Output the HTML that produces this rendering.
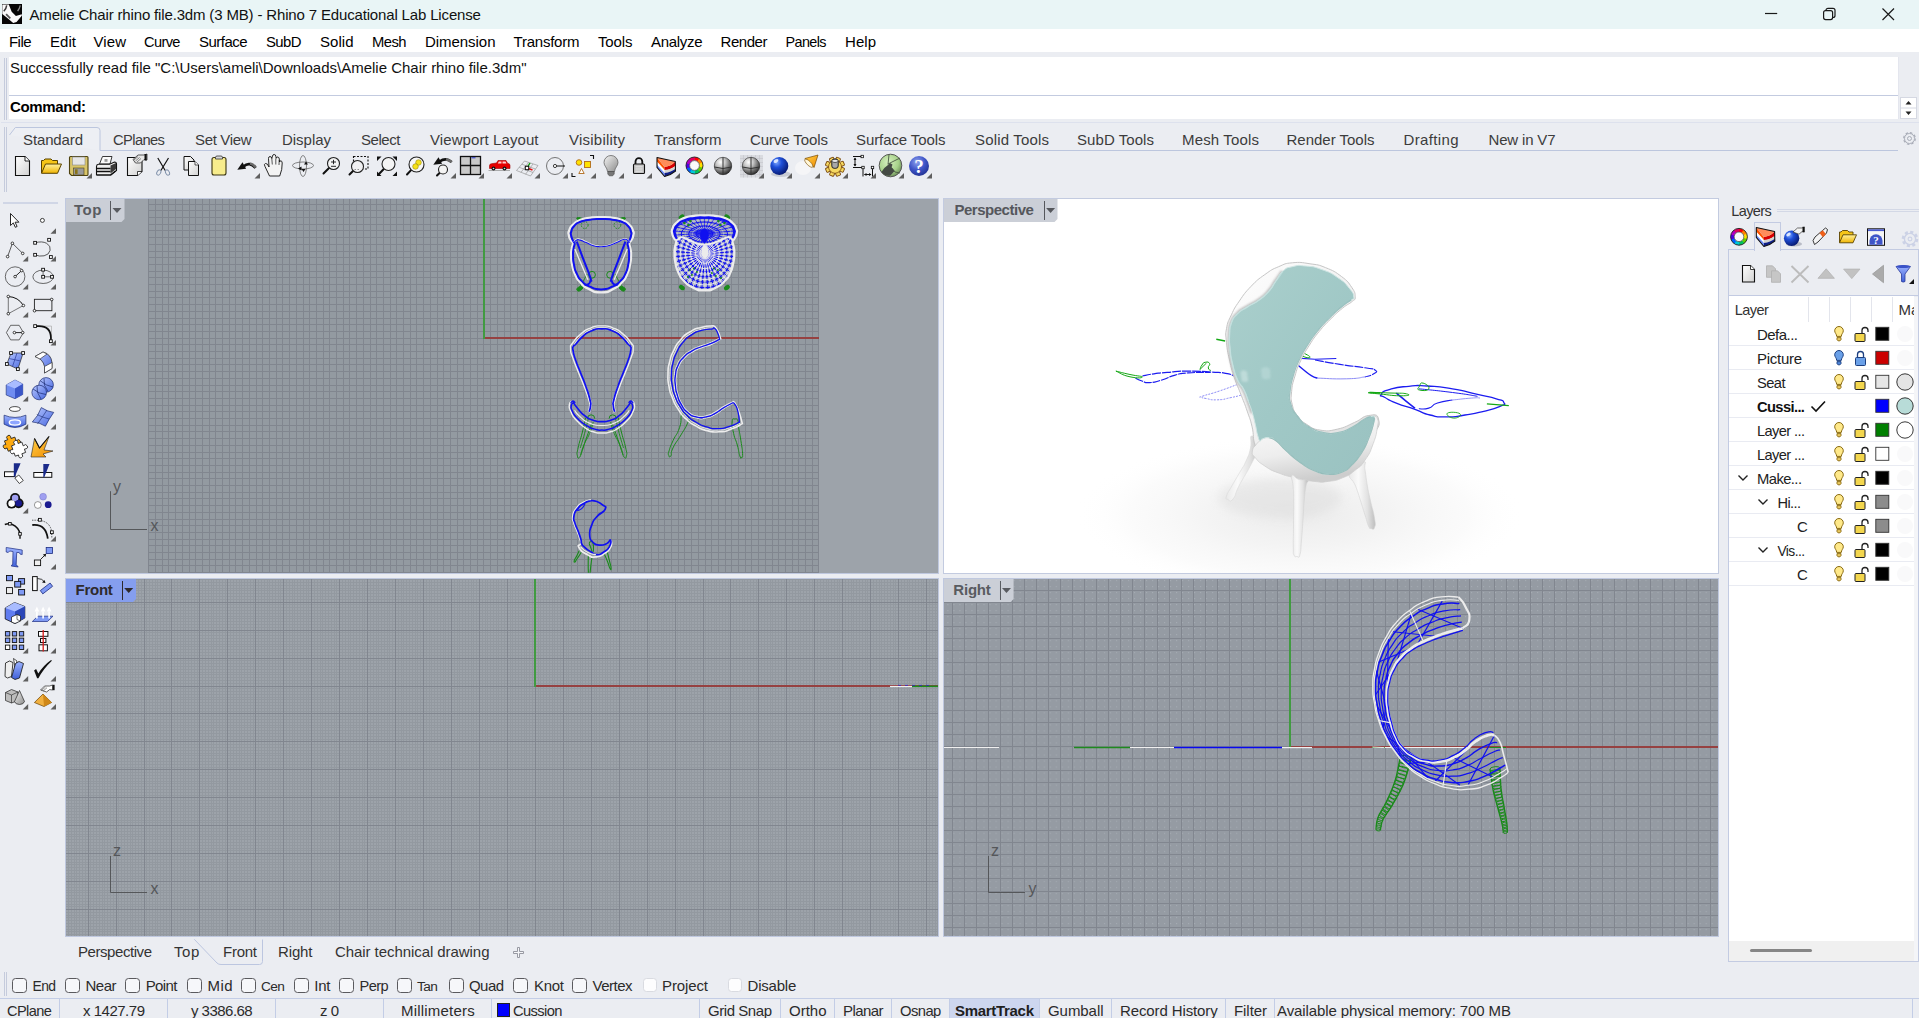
<!DOCTYPE html>
<html><head><meta charset="utf-8"><title>Rhino 7</title><style>html,body{margin:0;padding:0}body{width:1919px;height:1018px;overflow:hidden;background:#ebedf2;position:relative;font-family:"Liberation Sans",sans-serif}
.r{position:absolute;display:block}.t{position:absolute;white-space:nowrap;line-height:20px;display:block}</style></head><body>
<div class="r" style="left:0px;top:0px;width:1919px;height:29px;background:#e9f5f6;"></div>
<div class="r" style="left:0px;top:29px;width:1919px;height:23px;background:#ffffff;"></div>
<svg class="r" style="left:2px;top:4px" width="20" height="20" viewBox="0 0 20 20"><defs><filter id="lb" x="-10%" y="-10%" width="120%" height="120%"><feGaussianBlur stdDeviation="0.5"/></filter></defs><rect width="20" height="20" fill="#050505"/><g filter="url(#lb)"><path d="M0.300 0.400L6.800 0.400L9.700 7.800L13.900 11.900L19.800 10.200L19.800 11.700L14.500 18.100L11.200 19L6.800 15.200L0.300 9.900Z" fill="#fafafa"/><path d="M1.800 7.200Q4.200 5 4.700 1.300" stroke="#3a3a3a" stroke-width="1.500" fill="none"/><path d="M4.100 10.200L8.300 14.300" stroke="#555" stroke-width="1.800" fill="none"/><path d="M15.600 7.200Q17.500 4.500 18.300 1.300" stroke="#8a8a8a" stroke-width="1.300" fill="none"/></g></svg>
<span class="t" style="left:29.5px;top:5px;font-size:15px;letter-spacing:-0.156px;color:#111;">Amelie Chair rhino file.3dm (3 MB) - Rhino 7 Educational Lab License</span>
<svg class="r" style="left:1750px;top:0" width="169" height="29" viewBox="0 0 169 29"><g stroke="#1a1a1a" stroke-width="1.200" fill="none"><path d="M15 13.500H27.200"/><rect x="73.600" y="10.600" width="9" height="9" rx="2"/><path d="M76 10.600V10.300a2 2 0 0 1 2-2h5a2 2 0 0 1 2 2v5.200a2 2 0 0 1-2 2H82.600"/><path d="M132.5 8.5L144 20M144 8.5L132.5 20"/></g></svg>
<span class="t" style="left:9.0px;top:32px;font-size:15px;letter-spacing:-0.557px;color:#000;">File</span>
<span class="t" style="left:50.0px;top:32px;font-size:15px;letter-spacing:0.051px;color:#000;">Edit</span>
<span class="t" style="left:93.5px;top:32px;font-size:15px;letter-spacing:0.086px;color:#000;">View</span>
<span class="t" style="left:144.0px;top:32px;font-size:14.6px;letter-spacing:-0.611px;color:#000;">Curve</span>
<span class="t" style="left:199.0px;top:32px;font-size:15px;letter-spacing:-0.533px;color:#000;">Surface</span>
<span class="t" style="left:266.0px;top:32px;font-size:14.9px;letter-spacing:-0.591px;color:#000;">SubD</span>
<span class="t" style="left:320.0px;top:32px;font-size:15px;letter-spacing:0.036px;color:#000;">Solid</span>
<span class="t" style="left:372.0px;top:32px;font-size:14.8px;letter-spacing:-0.563px;color:#000;">Mesh</span>
<span class="t" style="left:425.0px;top:32px;font-size:15px;letter-spacing:-0.046px;color:#000;">Dimension</span>
<span class="t" style="left:513.5px;top:32px;font-size:15px;letter-spacing:-0.225px;color:#000;">Transform</span>
<span class="t" style="left:598.0px;top:32px;font-size:15px;letter-spacing:-0.130px;color:#000;">Tools</span>
<span class="t" style="left:651.0px;top:32px;font-size:15px;letter-spacing:-0.311px;color:#000;">Analyze</span>
<span class="t" style="left:720.5px;top:32px;font-size:15px;letter-spacing:-0.441px;color:#000;">Render</span>
<span class="t" style="left:785.5px;top:32px;font-size:14.4px;letter-spacing:-0.605px;color:#000;">Panels</span>
<span class="t" style="left:845.0px;top:32px;font-size:15px;letter-spacing:0.049px;color:#000;">Help</span>
<div class="r" style="left:9px;top:57px;width:1889px;height:38px;background:#fff;"></div>
<div class="r" style="left:9px;top:95px;width:1889px;height:1px;background:#c3cbe0;"></div>
<div class="r" style="left:9px;top:96px;width:1889px;height:23px;background:#fff;"></div>
<div class="r" style="left:1898px;top:57px;width:1px;height:62px;background:#e4e6ee;"></div>
<div class="r" style="left:4px;top:58px;width:1px;height:62px;background:#c5cbdc;"></div>
<div class="r" style="left:6px;top:58px;width:1px;height:62px;background:#c5cbdc;"></div>
<span class="t" style="left:10.0px;top:58px;font-size:15px;letter-spacing:-0.003px;color:#111;">Successfully read file &quot;C:\Users\ameli\Downloads\Amelie Chair rhino file.3dm&quot;</span>
<span class="t" style="left:10.0px;top:97px;font-size:15px;letter-spacing:-0.334px;color:#000;font-weight:bold;">Command:</span>
<div class="r" style="left:1900px;top:97px;width:17px;height:22px;background:#fff;border:1px solid #d5d8e2;box-sizing:border-box;"></div>
<svg class="r" style="left:1900px;top:97px" width="17" height="22" viewBox="0 0 17 22"><path d="M5.5 7.5L8.5 4L11.5 7.5Z M5.5 14.5L8.5 18L11.5 14.5Z" fill="#222"/><path d="M1 11H16" stroke="#d5d8e2"/></svg>
<div class="r" style="left:1px;top:122px;width:1918px;height:1px;background:#dde1ed;"></div>
<div class="r" style="left:100px;top:150px;width:1798px;height:1px;background:#bcc6de;"></div>
<svg class="r" style="left:9px;top:126px" width="94" height="26" viewBox="0 0 94 26"><path d="M0.500 9L6.300 1.500H88Q91 1.500 91 4.500V24.500" fill="#edeff4" stroke="#bcc6de"/></svg>
<span class="t" style="left:23.0px;top:130px;font-size:15px;letter-spacing:-0.127px;color:#3c3c3c;">Standard</span>
<span class="t" style="left:113.0px;top:130px;font-size:14.7px;letter-spacing:-0.594px;color:#3c3c3c;">CPlanes</span>
<span class="t" style="left:195.0px;top:130px;font-size:15px;letter-spacing:-0.347px;color:#3c3c3c;">Set View</span>
<span class="t" style="left:282.0px;top:130px;font-size:15px;letter-spacing:-0.031px;color:#3c3c3c;">Display</span>
<span class="t" style="left:361.0px;top:130px;font-size:15px;letter-spacing:-0.438px;color:#3c3c3c;">Select</span>
<span class="t" style="left:430.0px;top:130px;font-size:15px;letter-spacing:0.085px;color:#3c3c3c;">Viewport Layout</span>
<span class="t" style="left:569.0px;top:130px;font-size:15px;letter-spacing:0.233px;color:#3c3c3c;">Visibility</span>
<span class="t" style="left:654.0px;top:130px;font-size:15px;letter-spacing:-0.037px;color:#3c3c3c;">Transform</span>
<span class="t" style="left:750.0px;top:130px;font-size:15px;letter-spacing:-0.093px;color:#3c3c3c;">Curve Tools</span>
<span class="t" style="left:856.0px;top:130px;font-size:15px;letter-spacing:-0.093px;color:#3c3c3c;">Surface Tools</span>
<span class="t" style="left:975.0px;top:130px;font-size:15px;letter-spacing:0.173px;color:#3c3c3c;">Solid Tools</span>
<span class="t" style="left:1077.0px;top:130px;font-size:15px;letter-spacing:0.062px;color:#3c3c3c;">SubD Tools</span>
<span class="t" style="left:1182.0px;top:130px;font-size:15px;letter-spacing:0.155px;color:#3c3c3c;">Mesh Tools</span>
<span class="t" style="left:1286.5px;top:130px;font-size:15px;letter-spacing:-0.011px;color:#3c3c3c;">Render Tools</span>
<span class="t" style="left:1403.5px;top:130px;font-size:15px;letter-spacing:0.353px;color:#3c3c3c;">Drafting</span>
<span class="t" style="left:1488.5px;top:130px;font-size:15px;letter-spacing:-0.171px;color:#3c3c3c;">New in V7</span>
<svg class="r" style="left:1901px;top:130px" width="17" height="17" viewBox="0 0 17 17"><circle cx="8.5" cy="8.5" r="5.8" fill="none" stroke="#a9adb8" stroke-width="1.2" stroke-dasharray="2.6 1.9"/><circle cx="8.5" cy="8.5" r="5" fill="none" stroke="#a9adb8" stroke-width="1"/><circle cx="8.5" cy="8.5" r="2" fill="none" stroke="#a9adb8" stroke-width="1"/></svg>
<div class="r" style="left:4px;top:127px;width:1px;height:65px;background:#c5cbdc;"></div>
<div class="r" style="left:6px;top:127px;width:1px;height:65px;background:#c5cbdc;"></div>
<div class="r" style="left:3px;top:201.5px;width:55px;height:1.0px;background:#d0d6e6;"></div>
<div class="r" style="left:3px;top:203.3px;width:55px;height:1.0px;background:#d0d6e6;"></div>
<div class="r" style="left:65px;top:198px;width:874px;height:376px;background:#bfc8df;"></div>
<div class="r" style="left:943px;top:198px;width:776px;height:376px;background:#c3cbe0;"></div>
<div class="r" style="left:65px;top:578px;width:874px;height:359px;background:#bfc8df;"></div>
<div class="r" style="left:943px;top:578px;width:776px;height:359px;background:#bfc8df;"></div>
<svg class="r" style="left:66px;top:199px" width="872" height="374" viewBox="0 0 872 374" shape-rendering="auto"><rect width="872" height="374" fill="#9da3aa"/><rect x="83" y="0" width="670" height="374" fill="#939aa1"/><path d="M82.5 0V374M89.5 0V374M96.5 0V374M102.5 0V374M109.5 0V374M116.5 0V374M123.5 0V374M129.5 0V374M136.5 0V374M143.5 0V374M149.5 0V374M156.5 0V374M163.5 0V374M169.5 0V374M176.5 0V374M183.5 0V374M190.5 0V374M196.5 0V374M203.5 0V374M210.5 0V374M216.5 0V374M223.5 0V374M230.5 0V374M237.5 0V374M243.5 0V374M250.5 0V374M257.5 0V374M263.5 0V374M270.5 0V374M277.5 0V374M283.5 0V374M290.5 0V374M297.5 0V374M304.5 0V374M310.5 0V374M317.5 0V374M324.5 0V374M330.5 0V374M337.5 0V374M344.5 0V374M350.5 0V374M357.5 0V374M364.5 0V374M371.5 0V374M377.5 0V374M384.5 0V374M391.5 0V374M397.5 0V374M404.5 0V374M411.5 0V374M417.5 0V374M424.5 0V374M431.5 0V374M438.5 0V374M444.5 0V374M451.5 0V374M458.5 0V374M464.5 0V374M471.5 0V374M478.5 0V374M484.5 0V374M491.5 0V374M498.5 0V374M505.5 0V374M511.5 0V374M518.5 0V374M525.5 0V374M531.5 0V374M538.5 0V374M545.5 0V374M551.5 0V374M558.5 0V374M565.5 0V374M572.5 0V374M578.5 0V374M585.5 0V374M592.5 0V374M598.5 0V374M605.5 0V374M612.5 0V374M618.5 0V374M625.5 0V374M632.5 0V374M639.5 0V374M645.5 0V374M652.5 0V374M659.5 0V374M665.5 0V374M672.5 0V374M679.5 0V374M685.5 0V374M692.5 0V374M699.5 0V374M706.5 0V374M712.5 0V374M719.5 0V374M726.5 0V374M732.5 0V374M739.5 0V374M746.5 0V374M752.5 0V374M83 5.5H753M83 11.5H753M83 18.5H753M83 25.5H753M83 31.5H753M83 38.5H753M83 45.5H753M83 52.5H753M83 58.5H753M83 65.5H753M83 72.5H753M83 78.5H753M83 85.5H753M83 92.5H753M83 98.5H753M83 105.5H753M83 112.5H753M83 119.5H753M83 125.5H753M83 132.5H753M83 139.5H753M83 145.5H753M83 152.5H753M83 159.5H753M83 165.5H753M83 172.5H753M83 179.5H753M83 186.5H753M83 192.5H753M83 199.5H753M83 206.5H753M83 212.5H753M83 219.5H753M83 226.5H753M83 232.5H753M83 239.5H753M83 246.5H753M83 253.5H753M83 259.5H753M83 266.5H753M83 273.5H753M83 279.5H753M83 286.5H753M83 293.5H753M83 299.5H753M83 306.5H753M83 313.5H753M83 320.5H753M83 326.5H753M83 333.5H753M83 340.5H753M83 346.5H753M83 353.5H753M83 360.5H753M83 366.5H753M83 373.5H753" stroke="#81868f" stroke-width="1" fill="none"/><rect x="417" y="0" width="2" height="140" fill="#419b41"/><rect x="419" y="138" width="334" height="2" fill="#964141"/><g transform="translate(-66,-199)"><path d="M110.5 491.2V529.5H147" fill="none" stroke="#55575a" stroke-width="1"/><text x="113.0" y="491.5" font-size="16" fill="#55575a" font-family="Liberation Sans, sans-serif">y</text><text x="150.4" y="530.5" font-size="16" fill="#55575a" font-family="Liberation Sans, sans-serif">x</text><path d="M577.3 217.6C578.5 217.2 581.9 218.0 582.4 218.8C582.9 219.6 580.4 220.3 578.7 219.9C577.0 219.5 576.0 218.0 577.3 217.6Z" fill="#1a8a1a" stroke="#1a8a1a" stroke-width="1" /><circle cx="584.7" cy="225.1" r="3.4" fill="none" stroke="#1a8a1a" stroke-width="0.9" stroke-dasharray="1.6 1.2"/><circle cx="592.0" cy="274.8" r="3.4" fill="none" stroke="#1a8a1a" stroke-width="1"/><path d="M587.1 274.1C585.5 276.9 585.5 277.4 582.4 282.5C579.3 287.6 579.3 287.2 577.7 289.5" fill="none" stroke="#1a8a1a" stroke-width="1" /><path d="M577.3 288.1C578.5 286.7 582.3 286.0 582.9 287.0C583.5 288.0 581.0 290.7 579.1 291.1C577.3 291.5 576.0 289.5 577.3 288.1Z" fill="#1a8a1a" stroke="#1a8a1a" stroke-width="1" /><path d="M624.9 217.6C623.6 217.2 620.2 218.0 619.8 218.8C619.3 219.6 621.8 220.3 623.5 219.9C625.2 219.5 626.1 218.0 624.9 217.6Z" fill="#1a8a1a" stroke="#1a8a1a" stroke-width="1" /><circle cx="617.4" cy="225.1" r="3.4" fill="none" stroke="#1a8a1a" stroke-width="0.9" stroke-dasharray="1.6 1.2"/><circle cx="610.1" cy="274.8" r="3.4" fill="none" stroke="#1a8a1a" stroke-width="1"/><path d="M615.1 274.1C616.6 276.9 616.6 277.4 619.8 282.5C622.9 287.6 622.9 287.2 624.4 289.5" fill="none" stroke="#1a8a1a" stroke-width="1" /><path d="M624.9 288.1C623.6 286.7 619.9 286.0 619.3 287.0C618.7 288.0 621.2 290.7 623.0 291.1C624.9 291.5 626.1 289.5 624.9 288.1Z" fill="#1a8a1a" stroke="#1a8a1a" stroke-width="1" /><path d="M601.1 217.1C594.2 217.1 597.7 216.7 590.8 217.6C584.0 218.5 586.5 217.6 580.5 219.9C574.6 222.3 576.8 221.2 573.1 224.6C569.3 228.0 570.7 226.6 569.3 230.2C567.9 233.8 568.3 231.9 568.9 235.3C569.4 238.8 569.7 237.9 571.0 240.5C572.4 243.1 572.7 240.3 572.9 243.1C573.1 245.9 572.2 244.8 571.7 248.9C571.1 253.0 571.0 250.1 571.2 255.4C571.4 260.7 570.7 258.2 572.1 264.8C573.5 271.3 572.6 269.1 575.4 275.0C578.2 280.9 576.0 277.8 580.5 282.5C585.1 287.2 582.1 285.8 588.9 289.0C595.8 292.3 593.0 292.3 601.1 292.3C609.2 292.3 606.4 292.3 613.2 289.0C620.1 285.8 617.1 287.2 621.6 282.5C626.1 277.8 624.0 280.9 626.8 275.0C629.6 269.1 628.6 271.3 630.0 264.8C631.4 258.2 630.8 260.7 631.0 255.4C631.1 250.1 631.1 253.0 630.5 248.9C629.9 244.8 629.1 245.9 629.3 243.1C629.5 240.3 629.8 243.1 631.1 240.5C632.5 237.9 632.7 238.8 633.3 235.3C633.9 231.9 634.2 233.8 632.8 230.2C631.4 226.6 632.8 228.0 629.1 224.6C625.4 221.2 627.5 222.3 621.6 219.9C615.7 217.6 618.2 218.5 611.4 217.6C604.5 216.7 607.9 217.1 601.1 217.1Z" fill="none" stroke="#ececec" stroke-width="2.3" /><path d="M601.1 219.0C593.6 219.0 596.7 218.7 589.9 219.7C583.0 220.6 585.8 219.7 580.5 221.8C575.3 223.9 577.2 222.9 574.2 226.0C571.1 229.1 572.4 227.9 571.4 231.1C570.4 234.4 570.6 232.5 571.2 235.8C571.8 239.1 572.0 238.4 573.1 240.9C574.2 243.5 574.4 240.8 574.6 243.5C574.7 246.1 574.0 244.9 573.5 248.9C573.0 252.9 572.9 250.1 573.1 255.4C573.2 260.7 572.7 258.5 574.0 264.8C575.3 271.0 574.3 268.6 577.0 274.1C579.6 279.5 577.8 277.0 581.9 281.1C586.1 285.2 583.0 283.6 589.4 286.4C595.8 289.2 593.3 289.5 601.1 289.5C608.9 289.5 606.4 289.2 612.8 286.4C619.1 283.6 616.1 285.2 620.2 281.1C624.4 277.0 622.5 279.5 625.2 274.1C627.8 268.6 626.9 271.0 628.2 264.8C629.5 258.5 628.9 260.7 629.1 255.4C629.2 250.1 629.1 252.9 628.6 248.9C628.1 244.9 627.4 246.1 627.6 243.5C627.8 240.8 628.0 243.5 629.1 240.9C630.2 238.4 630.4 239.1 631.0 235.8C631.5 232.5 631.8 234.4 630.8 231.1C629.8 227.9 631.0 229.1 628.0 226.0C624.9 222.9 626.9 223.9 621.6 221.8C616.4 219.7 619.1 220.6 612.3 219.7C605.4 218.7 608.6 219.0 601.1 219.0Z" fill="none" stroke="#1010f0" stroke-width="2" /><path d="M574.0 242.3C574.8 241.5 574.3 240.7 576.3 239.7C578.4 238.8 576.8 238.8 580.1 239.5C583.3 240.3 581.9 240.1 586.1 241.9C590.3 243.7 588.3 243.5 592.7 245.0C597.0 246.4 595.2 245.9 599.2 246.3C603.3 246.6 600.8 246.7 604.8 246.1C608.9 245.5 607.0 245.9 611.4 244.4C615.7 242.9 613.8 243.3 617.9 241.6C621.9 239.9 620.4 239.8 623.5 239.2C626.6 238.6 625.2 238.7 627.2 239.7C629.2 240.8 628.8 241.5 629.6 242.3" fill="none" stroke="#ececec" stroke-width="1.6" /><path d="M574.0 242.9C574.8 242.1 574.3 241.3 576.3 240.3C578.4 239.4 576.8 239.4 580.1 240.1C583.3 240.9 581.9 240.7 586.1 242.5C590.3 244.3 588.3 244.2 592.7 245.6C597.0 246.9 595.2 246.3 599.2 246.6C603.3 246.8 600.8 247.0 604.8 246.4C608.9 245.8 607.0 246.2 611.4 244.7C615.7 243.2 613.8 243.6 617.9 241.9C621.9 240.2 620.4 240.1 623.5 239.5C626.6 238.9 625.2 239.0 627.2 240.0C629.2 241.1 628.8 241.8 629.6 242.6" fill="none" stroke="#1010f0" stroke-width="1.1" /><path d="M574.9 248.9C577.1 254.2 577.1 254.5 581.5 264.8C585.8 275.0 585.8 274.7 588.0 279.7" fill="none" stroke="#ececec" stroke-width="1.3" /><path d="M576.8 241.6C579.0 247.5 578.9 247.4 583.3 259.2C587.8 270.9 587.7 269.6 590.1 276.9C592.4 284.2 591.0 278.6 590.3 281.1C589.7 283.6 590.0 283.3 588.0 284.4C586.1 285.5 585.6 284.4 584.5 284.4" fill="none" stroke="#1010f0" stroke-width="2" /><path d="M627.2 248.9C625.0 254.2 625.0 254.5 620.7 264.8C616.3 275.0 616.3 274.7 614.2 279.7" fill="none" stroke="#ececec" stroke-width="1.3" /><path d="M625.4 241.6C623.2 247.5 623.2 247.4 618.8 259.2C614.4 270.9 614.4 269.6 612.1 276.9C609.8 284.2 611.1 278.6 611.8 281.1C612.5 283.6 612.2 283.3 614.2 284.4C616.1 285.5 616.5 284.4 617.7 284.4" fill="none" stroke="#1010f0" stroke-width="2" /><clipPath id="c2"><path d="M704.4 215.3C697.5 215.3 701.0 214.9 694.1 215.8C687.3 216.7 689.8 215.8 683.8 218.1C677.9 220.5 680.1 219.4 676.4 222.8C672.6 226.2 674.0 224.8 672.6 228.4C671.2 232.0 671.6 230.1 672.2 233.5C672.7 237.0 673.0 236.1 674.3 238.7C675.7 241.3 676.0 238.5 676.2 241.3C676.4 244.1 675.5 243.0 675.0 247.1C674.4 251.2 674.3 248.3 674.5 253.6C674.7 258.9 674.0 256.4 675.4 263.0C676.8 269.5 675.9 267.3 678.7 273.2C681.5 279.1 679.3 276.0 683.8 280.7C688.4 285.4 685.4 284.0 692.2 287.2C699.1 290.5 696.3 290.5 704.4 290.5C712.5 290.5 709.7 290.5 716.5 287.2C723.4 284.0 720.4 285.4 724.9 280.7C729.4 276.0 727.3 279.1 730.1 273.2C732.9 267.3 731.9 269.5 733.3 263.0C734.7 256.4 734.1 258.9 734.3 253.6C734.4 248.3 734.4 251.2 733.8 247.1C733.2 243.0 732.4 244.1 732.6 241.3C732.8 238.5 733.1 241.3 734.4 238.7C735.8 236.1 736.0 237.0 736.6 233.5C737.2 230.1 737.5 232.0 736.1 228.4C734.7 224.8 736.1 226.2 732.4 222.8C728.7 219.4 730.8 220.5 724.9 218.1C719.0 215.8 721.5 216.7 714.7 215.8C707.8 214.9 711.2 215.3 704.4 215.3Z"/></clipPath><ellipse cx="681.6" cy="217.0" rx="3.2" ry="2.2" fill="#1a8a1a" transform="rotate(-35 681.6 217.0)"/><ellipse cx="727.2" cy="217.0" rx="3.2" ry="2.2" fill="#1a8a1a" transform="rotate(35 727.2 217.0)"/><ellipse cx="681.9" cy="287.6" rx="3.2" ry="2.2" fill="#1a8a1a" transform="rotate(35 681.9 287.6)"/><ellipse cx="726.9" cy="287.6" rx="3.2" ry="2.2" fill="#1a8a1a" transform="rotate(-35 726.9 287.6)"/><g clip-path="url(#c2)"><path d="M704.4 215.3C697.5 215.3 701.0 214.9 694.1 215.8C687.3 216.7 689.8 215.8 683.8 218.1C677.9 220.5 680.1 219.4 676.4 222.8C672.6 226.2 674.0 224.8 672.6 228.4C671.2 232.0 671.6 230.1 672.2 233.5C672.7 237.0 673.0 236.1 674.3 238.7C675.7 241.3 676.0 238.5 676.2 241.3C676.4 244.1 675.5 243.0 675.0 247.1C674.4 251.2 674.3 248.3 674.5 253.6C674.7 258.9 674.0 256.4 675.4 263.0C676.8 269.5 675.9 267.3 678.7 273.2C681.5 279.1 679.3 276.0 683.8 280.7C688.4 285.4 685.4 284.0 692.2 287.2C699.1 290.5 696.3 290.5 704.4 290.5C712.5 290.5 709.7 290.5 716.5 287.2C723.4 284.0 720.4 285.4 724.9 280.7C729.4 276.0 727.3 279.1 730.1 273.2C732.9 267.3 731.9 269.5 733.3 263.0C734.7 256.4 734.1 258.9 734.3 253.6C734.4 248.3 734.4 251.2 733.8 247.1C733.2 243.0 732.4 244.1 732.6 241.3C732.8 238.5 733.1 241.3 734.4 238.7C735.8 236.1 736.0 237.0 736.6 233.5C737.2 230.1 737.5 232.0 736.1 228.4C734.7 224.8 736.1 226.2 732.4 222.8C728.7 219.4 730.8 220.5 724.9 218.1C719.0 215.8 721.5 216.7 714.7 215.8C707.8 214.9 711.2 215.3 704.4 215.3Z" fill="#b9bfd6" fill-opacity="0.55"/><path d="M704.4 233.1L744.2 235.8" stroke="#1010f0" stroke-width="0.9"/><path d="M704.4 233.1L742.4 241.1" stroke="#1010f0" stroke-width="0.9"/><path d="M704.4 233.1L739.0 246.1" stroke="#1010f0" stroke-width="0.9"/><path d="M704.4 233.1L734.1 250.5" stroke="#1010f0" stroke-width="0.9"/><path d="M704.4 233.1L727.9 254.1" stroke="#1010f0" stroke-width="0.9"/><path d="M704.4 233.1L720.7 256.8" stroke="#1010f0" stroke-width="0.9"/><path d="M704.4 233.1L712.7 258.5" stroke="#1010f0" stroke-width="0.9"/><path d="M704.4 233.1L704.4 259.1" stroke="#1010f0" stroke-width="0.9"/><path d="M704.4 233.1L696.1 258.5" stroke="#1010f0" stroke-width="0.9"/><path d="M704.4 233.1L688.1 256.8" stroke="#1010f0" stroke-width="0.9"/><path d="M704.4 233.1L680.9 254.1" stroke="#1010f0" stroke-width="0.9"/><path d="M704.4 233.1L674.7 250.5" stroke="#1010f0" stroke-width="0.9"/><path d="M704.4 233.1L669.7 246.1" stroke="#1010f0" stroke-width="0.9"/><path d="M704.4 233.1L666.3 241.1" stroke="#1010f0" stroke-width="0.9"/><path d="M704.4 233.1L664.6 235.8" stroke="#1010f0" stroke-width="0.9"/><path d="M704.4 233.1L664.6 230.4" stroke="#1010f0" stroke-width="0.9"/><path d="M704.4 233.1L666.3 225.0" stroke="#1010f0" stroke-width="0.9"/><path d="M704.4 233.1L669.7 220.1" stroke="#1010f0" stroke-width="0.9"/><path d="M704.4 233.1L674.7 215.7" stroke="#1010f0" stroke-width="0.9"/><path d="M704.4 233.1L680.9 212.0" stroke="#1010f0" stroke-width="0.9"/><path d="M704.4 233.1L688.1 209.3" stroke="#1010f0" stroke-width="0.9"/><path d="M704.4 233.1L696.1 207.6" stroke="#1010f0" stroke-width="0.9"/><path d="M704.4 233.1L704.4 207.1" stroke="#1010f0" stroke-width="0.9"/><path d="M704.4 233.1L712.7 207.6" stroke="#1010f0" stroke-width="0.9"/><path d="M704.4 233.1L720.7 209.3" stroke="#1010f0" stroke-width="0.9"/><path d="M704.4 233.1L727.9 212.0" stroke="#1010f0" stroke-width="0.9"/><path d="M704.4 233.1L734.1 215.7" stroke="#1010f0" stroke-width="0.9"/><path d="M704.4 233.1L739.0 220.1" stroke="#1010f0" stroke-width="0.9"/><path d="M704.4 233.1L742.4 225.0" stroke="#1010f0" stroke-width="0.9"/><path d="M704.4 233.1L744.2 230.4" stroke="#1010f0" stroke-width="0.9"/><ellipse cx="704.4" cy="234.1" rx="8.4" ry="4.4" fill="none" stroke="#1010f0" stroke-width="1"/><ellipse cx="704.4" cy="234.1" rx="15.8" ry="8.2" fill="none" stroke="#1010f0" stroke-width="1"/><ellipse cx="704.4" cy="234.1" rx="23.1" ry="12.1" fill="none" stroke="#1010f0" stroke-width="1"/><ellipse cx="704.4" cy="234.1" rx="30.5" ry="16.0" fill="none" stroke="#1010f0" stroke-width="1"/><ellipse cx="704.4" cy="234.1" rx="12.1" ry="6.3" fill="none" stroke="#ececec" stroke-width="0.5" opacity="0.7"/><ellipse cx="704.4" cy="234.1" rx="19.4" ry="10.2" fill="none" stroke="#ececec" stroke-width="0.5" opacity="0.7"/><ellipse cx="704.4" cy="234.1" rx="26.8" ry="14.0" fill="none" stroke="#ececec" stroke-width="0.5" opacity="0.7"/><clipPath id="c2s"><path d="M677.3 240.5C680.3 236.6 677.6 238.9 679.6 237.9C681.7 237.0 680.1 237.0 683.4 237.7C686.6 238.5 685.2 238.3 689.4 240.1C693.6 241.9 691.6 241.7 696.0 243.2C700.3 244.6 698.5 244.1 702.5 244.5C706.6 244.8 704.1 244.9 708.1 244.3C712.2 243.7 710.3 244.1 714.7 242.6C719.0 241.1 717.1 241.5 721.2 239.8C725.2 238.1 723.7 238.0 726.8 237.4C729.9 236.8 728.5 236.9 730.5 237.9C732.5 239.0 730.4 236.6 732.9 240.5C735.4 244.5 736.6 240.5 738.0 249.9C739.4 259.2 740.2 256.7 737.1 268.6C734.0 280.4 739.6 277.3 728.7 285.4C717.8 293.5 720.6 292.8 704.4 292.8C688.2 292.8 691.0 293.5 680.1 285.4C669.2 277.3 674.8 280.4 671.7 268.6C668.6 256.7 668.9 259.2 670.8 249.9C672.6 240.5 674.3 244.5 677.3 240.5Z"/></clipPath><g clip-path="url(#c2s)"><path d="M677.3 240.5C680.3 236.6 677.6 238.9 679.6 237.9C681.7 237.0 680.1 237.0 683.4 237.7C686.6 238.5 685.2 238.3 689.4 240.1C693.6 241.9 691.6 241.7 696.0 243.2C700.3 244.6 698.5 244.1 702.5 244.5C706.6 244.8 704.1 244.9 708.1 244.3C712.2 243.7 710.3 244.1 714.7 242.6C719.0 241.1 717.1 241.5 721.2 239.8C725.2 238.1 723.7 238.0 726.8 237.4C729.9 236.8 728.5 236.9 730.5 237.9C732.5 239.0 730.4 236.6 732.9 240.5C735.4 244.5 736.6 240.5 738.0 249.9C739.4 259.2 740.2 256.7 737.1 268.6C734.0 280.4 739.6 277.3 728.7 285.4C717.8 293.5 720.6 292.8 704.4 292.8C688.2 292.8 691.0 293.5 680.1 285.4C669.2 277.3 674.8 280.4 671.7 268.6C668.6 256.7 668.9 259.2 670.8 249.9C672.6 240.5 674.3 244.5 677.3 240.5Z" fill="#a9afc4"/><path d="M704.9 254.1L749.7 258.0" stroke="#1010f0" stroke-width="1"/><path d="M704.9 254.1L748.3 265.7" stroke="#1010f0" stroke-width="1"/><path d="M704.9 254.1L745.7 273.1" stroke="#1010f0" stroke-width="1"/><path d="M704.9 254.1L741.7 279.9" stroke="#1010f0" stroke-width="1"/><path d="M704.9 254.1L736.7 285.9" stroke="#1010f0" stroke-width="1"/><path d="M704.9 254.1L730.7 290.9" stroke="#1010f0" stroke-width="1"/><path d="M704.9 254.1L723.9 294.9" stroke="#1010f0" stroke-width="1"/><path d="M704.9 254.1L716.5 297.6" stroke="#1010f0" stroke-width="1"/><path d="M704.9 254.1L708.8 298.9" stroke="#1010f0" stroke-width="1"/><path d="M704.9 254.1L701.0 298.9" stroke="#1010f0" stroke-width="1"/><path d="M704.9 254.1L693.2 297.6" stroke="#1010f0" stroke-width="1"/><path d="M704.9 254.1L685.9 294.9" stroke="#1010f0" stroke-width="1"/><path d="M704.9 254.1L679.1 290.9" stroke="#1010f0" stroke-width="1"/><path d="M704.9 254.1L673.1 285.9" stroke="#1010f0" stroke-width="1"/><path d="M704.9 254.1L668.0 279.9" stroke="#1010f0" stroke-width="1"/><path d="M704.9 254.1L664.1 273.1" stroke="#1010f0" stroke-width="1"/><path d="M704.9 254.1L661.4 265.7" stroke="#1010f0" stroke-width="1"/><path d="M704.9 254.1L660.1 258.0" stroke="#1010f0" stroke-width="1"/><path d="M704.9 254.1L660.1 250.2" stroke="#1010f0" stroke-width="1"/><path d="M704.9 254.1L661.4 242.4" stroke="#1010f0" stroke-width="1"/><path d="M704.9 254.1L664.1 235.1" stroke="#1010f0" stroke-width="1"/><path d="M704.9 254.1L668.0 228.3" stroke="#1010f0" stroke-width="1"/><path d="M704.9 254.1L673.1 222.3" stroke="#1010f0" stroke-width="1"/><path d="M704.9 254.1L679.1 217.2" stroke="#1010f0" stroke-width="1"/><path d="M704.9 254.1L685.9 213.3" stroke="#1010f0" stroke-width="1"/><path d="M704.9 254.1L693.2 210.6" stroke="#1010f0" stroke-width="1"/><path d="M704.9 254.1L701.0 209.3" stroke="#1010f0" stroke-width="1"/><path d="M704.9 254.1L708.8 209.3" stroke="#1010f0" stroke-width="1"/><path d="M704.9 254.1L716.5 210.6" stroke="#1010f0" stroke-width="1"/><path d="M704.9 254.1L723.9 213.3" stroke="#1010f0" stroke-width="1"/><path d="M704.9 254.1L730.7 217.2" stroke="#1010f0" stroke-width="1"/><path d="M704.9 254.1L736.7 222.3" stroke="#1010f0" stroke-width="1"/><path d="M704.9 254.1L741.7 228.3" stroke="#1010f0" stroke-width="1"/><path d="M704.9 254.1L745.7 235.1" stroke="#1010f0" stroke-width="1"/><path d="M704.9 254.1L748.3 242.4" stroke="#1010f0" stroke-width="1"/><path d="M704.9 254.1L749.7 250.2" stroke="#1010f0" stroke-width="1"/><ellipse cx="704.9" cy="253.1" rx="7.0" ry="7.6" fill="none" stroke="#1010f0" stroke-width="1.1"/><ellipse cx="704.9" cy="253.1" rx="12.0" ry="13.0" fill="none" stroke="#1010f0" stroke-width="1.1"/><ellipse cx="704.9" cy="253.1" rx="17.0" ry="18.4" fill="none" stroke="#1010f0" stroke-width="1.1"/><ellipse cx="704.9" cy="253.1" rx="22.0" ry="23.8" fill="none" stroke="#1010f0" stroke-width="1.1"/><ellipse cx="704.9" cy="253.1" rx="27.0" ry="29.2" fill="none" stroke="#1010f0" stroke-width="1.1"/><ellipse cx="704.9" cy="253.1" rx="32.0" ry="34.6" fill="none" stroke="#1010f0" stroke-width="1.1"/><path d="M704.9 254.1L749.9 254.1" stroke="#ececec" stroke-width="0.8"/><path d="M704.9 254.1L749.2 261.9" stroke="#ececec" stroke-width="0.8"/><path d="M704.9 254.1L747.2 269.5" stroke="#ececec" stroke-width="0.8"/><path d="M704.9 254.1L743.9 276.6" stroke="#ececec" stroke-width="0.8"/><path d="M704.9 254.1L739.4 283.0" stroke="#ececec" stroke-width="0.8"/><path d="M704.9 254.1L733.8 288.6" stroke="#ececec" stroke-width="0.8"/><path d="M704.9 254.1L727.4 293.1" stroke="#ececec" stroke-width="0.8"/><path d="M704.9 254.1L720.3 296.4" stroke="#ececec" stroke-width="0.8"/><path d="M704.9 254.1L712.7 298.4" stroke="#ececec" stroke-width="0.8"/><path d="M704.9 254.1L704.9 299.1" stroke="#ececec" stroke-width="0.8"/><path d="M704.9 254.1L697.1 298.4" stroke="#ececec" stroke-width="0.8"/><path d="M704.9 254.1L689.5 296.4" stroke="#ececec" stroke-width="0.8"/><path d="M704.9 254.1L682.4 293.1" stroke="#ececec" stroke-width="0.8"/><path d="M704.9 254.1L676.0 288.6" stroke="#ececec" stroke-width="0.8"/><path d="M704.9 254.1L670.4 283.0" stroke="#ececec" stroke-width="0.8"/><path d="M704.9 254.1L665.9 276.6" stroke="#ececec" stroke-width="0.8"/><path d="M704.9 254.1L662.6 269.5" stroke="#ececec" stroke-width="0.8"/><path d="M704.9 254.1L660.6 261.9" stroke="#ececec" stroke-width="0.8"/><path d="M704.9 254.1L659.9 254.1" stroke="#ececec" stroke-width="0.8"/><path d="M704.9 254.1L660.6 246.3" stroke="#ececec" stroke-width="0.8"/><path d="M704.9 254.1L662.6 238.7" stroke="#ececec" stroke-width="0.8"/><path d="M704.9 254.1L665.9 231.6" stroke="#ececec" stroke-width="0.8"/><path d="M704.9 254.1L670.4 225.2" stroke="#ececec" stroke-width="0.8"/><path d="M704.9 254.1L676.0 219.6" stroke="#ececec" stroke-width="0.8"/><path d="M704.9 254.1L682.4 215.1" stroke="#ececec" stroke-width="0.8"/><path d="M704.9 254.1L689.5 211.8" stroke="#ececec" stroke-width="0.8"/><path d="M704.9 254.1L697.1 209.8" stroke="#ececec" stroke-width="0.8"/><path d="M704.9 254.1L704.9 209.1" stroke="#ececec" stroke-width="0.8"/><path d="M704.9 254.1L712.7 209.8" stroke="#ececec" stroke-width="0.8"/><path d="M704.9 254.1L720.3 211.8" stroke="#ececec" stroke-width="0.8"/><path d="M704.9 254.1L727.4 215.1" stroke="#ececec" stroke-width="0.8"/><path d="M704.9 254.1L733.8 219.6" stroke="#ececec" stroke-width="0.8"/><path d="M704.9 254.1L739.4 225.2" stroke="#ececec" stroke-width="0.8"/><path d="M704.9 254.1L743.9 231.6" stroke="#ececec" stroke-width="0.8"/><path d="M704.9 254.1L747.2 238.7" stroke="#ececec" stroke-width="0.8"/><path d="M704.9 254.1L749.2 246.3" stroke="#ececec" stroke-width="0.8"/><ellipse cx="704.9" cy="253.1" rx="5.0" ry="5.4" fill="none" stroke="#ececec" stroke-width="0.9"/><ellipse cx="704.9" cy="253.1" rx="9.5" ry="10.3" fill="none" stroke="#ececec" stroke-width="0.9"/><ellipse cx="704.9" cy="253.1" rx="14.5" ry="15.7" fill="none" stroke="#ececec" stroke-width="0.9"/><ellipse cx="704.9" cy="253.1" rx="19.5" ry="21.1" fill="none" stroke="#ececec" stroke-width="0.9"/><ellipse cx="704.9" cy="253.1" rx="24.5" ry="26.5" fill="none" stroke="#ececec" stroke-width="0.9"/><ellipse cx="704.9" cy="253.1" rx="29.5" ry="31.9" fill="none" stroke="#ececec" stroke-width="0.9"/><ellipse cx="704.9" cy="253.1" rx="34.0" ry="36.7" fill="none" stroke="#ececec" stroke-width="0.9"/><ellipse cx="704.9" cy="251.6" rx="3.4" ry="6.5" fill="#ececec"/><circle cx="693.9" cy="268.6" r="1" fill="#1a8a1a"/><circle cx="696.9" cy="272.1" r="1" fill="#1a8a1a"/><circle cx="691.9" cy="275.1" r="1" fill="#1a8a1a"/><circle cx="687.9" cy="277.1" r="1" fill="#1a8a1a"/><circle cx="713.9" cy="268.6" r="1" fill="#1a8a1a"/><circle cx="711.9" cy="273.1" r="1" fill="#1a8a1a"/><circle cx="715.9" cy="276.1" r="1" fill="#1a8a1a"/><circle cx="720.9" cy="278.1" r="1" fill="#1a8a1a"/><circle cx="689.9" cy="270.1" r="1" fill="#1a8a1a"/><circle cx="717.9" cy="270.1" r="1" fill="#1a8a1a"/></g><ellipse cx="704.4" cy="235.6" rx="4.2" ry="7" fill="#1010f0"/><circle cx="684.4" cy="223.1" r="1.3" fill="#1a8a1a"/><circle cx="688.4" cy="225.1" r="1.3" fill="#1a8a1a"/><circle cx="690.4" cy="221.1" r="1.3" fill="#1a8a1a"/><circle cx="724.4" cy="223.1" r="1.3" fill="#1a8a1a"/><circle cx="720.4" cy="225.1" r="1.3" fill="#1a8a1a"/><circle cx="718.4" cy="221.1" r="1.3" fill="#1a8a1a"/><path d="M677.9 241.7C677.4 240.8 677.5 241.7 676.4 239.1C675.3 236.6 675.1 237.3 674.5 234.0C673.9 230.7 673.7 232.6 674.7 229.3C675.7 226.1 674.4 227.3 677.5 224.2C680.5 221.1 678.6 222.1 683.8 220.0C689.1 217.9 686.3 218.8 693.2 217.9C700.0 216.9 696.9 217.2 704.4 217.2C711.9 217.2 708.7 216.9 715.6 217.9C722.4 218.8 719.7 217.9 724.9 220.0C730.2 222.1 728.2 221.1 731.3 224.2C734.3 227.3 733.1 226.1 734.1 229.3C735.1 232.6 734.8 230.7 734.3 234.0C733.7 237.3 733.5 236.6 732.4 239.1C731.3 241.7 731.4 240.8 730.9 241.7" fill="none" stroke="#1010f0" stroke-width="3.2" /><path d="M677.3 240.5C678.1 239.7 677.6 238.9 679.6 237.9C681.7 237.0 680.1 237.0 683.4 237.7C686.6 238.5 685.2 238.3 689.4 240.1C693.6 241.9 691.6 241.7 696.0 243.2C700.3 244.6 698.5 244.1 702.5 244.5C706.6 244.8 704.1 244.9 708.1 244.3C712.2 243.7 710.3 244.1 714.7 242.6C719.0 241.1 717.1 241.5 721.2 239.8C725.2 238.1 723.7 238.0 726.8 237.4C729.9 236.8 728.5 236.9 730.5 237.9C732.5 239.0 732.1 239.7 732.9 240.5" fill="none" stroke="#ececec" stroke-width="2" /></g><path d="M704.4 215.3C697.5 215.3 701.0 214.9 694.1 215.8C687.3 216.7 689.8 215.8 683.8 218.1C677.9 220.5 680.1 219.4 676.4 222.8C672.6 226.2 674.0 224.8 672.6 228.4C671.2 232.0 671.6 230.1 672.2 233.5C672.7 237.0 673.0 236.1 674.3 238.7C675.7 241.3 676.0 238.5 676.2 241.3C676.4 244.1 675.5 243.0 675.0 247.1C674.4 251.2 674.3 248.3 674.5 253.6C674.7 258.9 674.0 256.4 675.4 263.0C676.8 269.5 675.9 267.3 678.7 273.2C681.5 279.1 679.3 276.0 683.8 280.7C688.4 285.4 685.4 284.0 692.2 287.2C699.1 290.5 696.3 290.5 704.4 290.5C712.5 290.5 709.7 290.5 716.5 287.2C723.4 284.0 720.4 285.4 724.9 280.7C729.4 276.0 727.3 279.1 730.1 273.2C732.9 267.3 731.9 269.5 733.3 263.0C734.7 256.4 734.1 258.9 734.3 253.6C734.4 248.3 734.4 251.2 733.8 247.1C733.2 243.0 732.4 244.1 732.6 241.3C732.8 238.5 733.1 241.3 734.4 238.7C735.8 236.1 736.0 237.0 736.6 233.5C737.2 230.1 737.5 232.0 736.1 228.4C734.7 224.8 736.1 226.2 732.4 222.8C728.7 219.4 730.8 220.5 724.9 218.1C719.0 215.8 721.5 216.7 714.7 215.8C707.8 214.9 711.2 215.3 704.4 215.3Z" fill="none" stroke="#ececec" stroke-width="2.2" /><path d="M585.6 417.6C584.5 422.4 584.9 421.9 582.4 432.0C579.9 442.1 579.8 439.9 578.1 447.9C576.4 455.8 576.9 452.7 577.4 455.8C577.8 458.9 578.1 458.5 579.5 457.2C581.0 456.0 579.5 458.2 581.7 452.2C583.9 446.2 582.7 448.8 586.0 439.2C589.4 429.6 589.9 428.6 591.8 423.3" fill="none" stroke="#1a8a1a" stroke-width="1" /><path d="M588.2 419.0C587.0 423.8 587.2 423.8 584.6 433.4C581.9 443.1 581.7 443.1 580.3 447.9" fill="none" stroke="#1a8a1a" stroke-width="0.9" /><path d="M593.2 421.9C592.0 425.7 592.8 425.7 589.6 433.4C586.5 441.1 586.8 437.8 583.9 445.0C580.9 452.2 581.7 451.7 580.7 455.1" fill="none" stroke="#1a8a1a" stroke-width="0.9" /><path d="M587.5 418.6a3.6 3.8 0 0 1 7.2 0" fill="none" stroke="#1a8a1a" stroke-width="1"/><path d="M618.2 417.6C619.3 422.4 618.9 421.9 621.4 432.0C623.9 442.1 624.0 439.9 625.7 447.9C627.4 455.8 626.9 452.7 626.4 455.8C625.9 458.9 625.7 458.5 624.3 457.2C622.8 456.0 624.3 458.2 622.1 452.2C619.9 446.2 621.1 448.8 617.8 439.2C614.4 429.6 613.9 428.6 612.0 423.3" fill="none" stroke="#1a8a1a" stroke-width="1" /><path d="M615.6 419.0C616.8 423.8 616.6 423.8 619.2 433.4C621.9 443.1 622.1 443.1 623.5 447.9" fill="none" stroke="#1a8a1a" stroke-width="0.9" /><path d="M610.6 421.9C611.8 425.7 611.0 425.7 614.2 433.4C617.3 441.1 617.0 437.8 619.9 445.0C622.9 452.2 622.1 451.7 623.1 455.1" fill="none" stroke="#1a8a1a" stroke-width="0.9" /><path d="M609.1 418.6a3.6 3.8 0 0 1 7.2 0" fill="none" stroke="#1a8a1a" stroke-width="1"/><path d="M588.2 411.8C588.7 409.9 589.5 410.4 589.6 406.0C589.7 401.7 590.4 405.5 588.5 398.8C586.6 392.1 587.3 395.0 583.9 385.8C580.4 376.7 581.7 380.5 578.1 371.4C574.5 362.3 575.5 365.9 573.0 358.4C570.5 350.9 570.6 354.3 570.6 349.0C570.6 343.7 569.6 347.6 573.0 342.5C576.5 337.5 575.0 338.8 581.0 333.9C587.0 329.0 584.1 330.5 591.1 327.8C598.0 325.2 594.7 325.9 601.9 325.9C609.1 325.9 605.7 325.2 612.7 327.8C619.7 330.5 616.8 329.0 622.8 333.9C628.8 338.8 627.3 337.5 630.8 342.5C634.2 347.6 633.2 343.7 633.2 349.0C633.2 354.3 633.3 350.9 630.8 358.4C628.3 365.9 629.3 362.3 625.7 371.4C622.1 380.5 623.4 376.7 619.9 385.8C616.5 395.0 617.2 392.1 615.3 398.8C613.4 405.5 614.1 401.7 614.2 406.0C614.3 410.4 615.1 409.9 615.6 411.8" fill="none" stroke="#ececec" stroke-width="1.4" /><path d="M589.6 412.5C590.1 410.4 590.9 410.6 591.1 406.0C591.3 401.5 592.0 405.5 590.2 398.8C588.4 392.1 589.1 395.0 585.6 385.8C582.1 376.7 583.4 380.5 579.8 371.4C576.3 362.3 577.3 365.9 574.9 358.4C572.5 350.9 572.6 353.9 572.6 349.0C572.6 344.1 571.6 348.3 574.9 343.7C578.2 339.1 576.8 340.0 582.4 335.3C588.0 330.6 585.3 332.0 591.8 329.5C598.3 327.0 595.2 327.8 601.9 327.8C608.6 327.8 605.5 327.0 612.0 329.5C618.5 332.0 615.8 330.6 621.4 335.3C627.0 340.0 625.6 339.1 628.9 343.7C632.2 348.3 631.2 344.1 631.2 349.0C631.2 353.9 631.3 350.9 628.9 358.4C626.5 365.9 627.5 362.3 624.0 371.4C620.4 380.5 621.7 376.7 618.2 385.8C614.7 395.0 615.4 392.1 613.6 398.8C611.8 405.5 612.5 401.5 612.7 406.0C612.9 410.6 613.7 410.4 614.2 412.5" fill="none" stroke="#ececec" stroke-width="1.1" /><path d="M589.1 411.8C589.5 409.9 590.2 410.1 590.5 406.0C590.8 401.9 591.5 406.0 589.9 399.5C588.4 393.0 589.1 395.7 585.9 386.5C582.7 377.4 583.7 381.0 580.3 372.1C576.8 363.2 577.9 367.1 575.5 359.8C573.1 352.6 573.7 355.0 573.0 350.5C572.4 345.9 572.5 348.3 573.5 346.1C574.4 344.0 572.8 347.2 575.9 344.0C579.0 340.8 577.4 340.9 582.7 336.5C588.0 332.0 585.4 333.2 591.8 330.7C598.2 328.1 595.2 328.8 601.9 328.8C608.6 328.8 605.6 328.1 612.0 330.7C618.4 333.2 615.8 332.0 621.1 336.5C626.4 340.9 624.8 340.8 627.9 344.0C630.9 347.2 629.4 344.0 630.3 346.1C631.3 348.3 631.4 345.9 630.8 350.5C630.1 355.0 630.7 352.6 628.3 359.8C625.9 367.1 627.0 363.2 623.5 372.1C620.1 381.0 621.1 377.4 617.9 386.5C614.7 395.7 615.4 393.0 613.9 399.5C612.3 406.0 613.0 401.9 613.3 406.0C613.6 410.1 614.3 409.9 614.7 411.8" fill="none" stroke="#1010f0" stroke-width="1.7" /><path d="M572.0 401.0C571.2 402.2 569.8 401.0 569.4 404.6C569.0 408.2 568.5 406.5 570.9 411.8C573.3 417.1 571.6 414.9 576.6 420.5C581.7 426.0 580.3 424.5 586.0 428.4C591.8 432.2 588.7 430.5 594.0 432.0C599.3 433.5 596.6 433.0 601.9 433.0C607.2 433.0 604.5 433.5 609.8 432.0C615.1 430.5 612.0 432.2 617.8 428.4C623.5 424.5 622.1 426.0 627.2 420.5C632.2 414.9 630.5 417.1 632.9 411.8C635.3 406.5 634.7 408.2 634.4 404.6C634.0 401.0 632.6 402.2 631.8 401.0" fill="none" stroke="#ececec" stroke-width="1.4" /><path d="M573.0 403.1C572.4 404.1 571.3 403.1 571.2 406.0C571.0 408.9 570.3 407.5 572.6 411.8C574.9 416.1 573.3 414.3 578.1 419.0C582.9 423.7 581.5 422.6 587.0 425.9C592.6 429.3 589.7 427.7 594.7 429.1C599.6 430.5 597.1 430.1 601.9 430.1C606.7 430.1 604.2 430.5 609.1 429.1C614.1 427.7 611.2 429.3 616.8 425.9C622.3 422.6 620.9 423.7 625.7 419.0C630.5 414.3 628.9 416.1 631.2 411.8C633.5 407.5 632.8 408.9 632.6 406.0C632.5 403.1 631.4 404.1 630.8 403.1" fill="none" stroke="#1010f0" stroke-width="1.5" /><path d="M572.6 401.4C574.4 403.9 573.9 404.0 578.1 408.9C582.3 413.8 580.3 412.4 585.3 416.1C590.4 419.9 587.7 418.3 593.2 420.2C598.8 422.0 596.1 421.6 601.9 421.6C607.7 421.6 605.0 422.0 610.6 420.2C616.1 418.3 613.4 419.9 618.5 416.1C623.5 412.4 621.5 413.8 625.7 408.9C629.9 404.0 629.4 403.9 631.2 401.4" fill="none" stroke="#1010f0" stroke-width="1.6" /><path d="M574.5 410.4C576.6 412.8 575.9 413.3 581.0 417.6C586.0 421.8 582.7 420.4 589.6 423.1C596.6 425.7 593.7 425.5 601.9 425.5C610.1 425.5 607.2 425.7 614.2 423.1C621.1 420.4 617.8 421.8 622.8 417.6C627.9 413.3 627.2 412.8 629.3 410.4" fill="none" stroke="#ececec" stroke-width="1.2" /><path d="M570.6 403.1C571.4 402.4 571.5 401.0 573.0 401.0C574.6 401.0 574.5 402.4 575.2 403.1" fill="none" stroke="#1010f0" stroke-width="1.4" /><path d="M633.2 403.1C632.4 402.4 632.3 401.0 630.8 401.0C629.2 401.0 629.3 402.4 628.6 403.1" fill="none" stroke="#1010f0" stroke-width="1.4" /><path d="M682.4 414.0C679.4 417.3 682.7 418.8 679.5 427.7C676.4 436.6 676.5 433.0 673.0 440.7C669.6 448.4 670.6 445.9 669.1 450.8C667.7 455.6 668.1 453.4 668.7 455.1C669.3 456.8 669.4 458.2 670.9 455.8C672.3 453.4 669.7 454.8 673.0 447.9C676.4 440.9 676.2 443.1 681.0 434.9C685.8 426.7 685.0 429.1 687.5 423.3C690.0 417.6 690.2 420.7 688.5 417.6C686.8 414.4 685.4 410.6 682.4 414.0Z" fill="none" stroke="#1a8a1a" stroke-width="1" /><path d="M732.2 421.9C731.7 426.7 732.0 425.7 733.6 433.4C735.3 441.1 735.2 437.5 737.3 445.0C739.3 452.4 738.4 451.7 739.8 455.8C741.3 459.9 740.7 458.0 741.6 457.2C742.5 456.5 742.8 459.2 742.6 453.6C742.3 448.1 742.2 449.3 740.9 440.7C739.6 432.0 739.7 434.2 738.7 427.7C737.7 421.2 739.2 424.1 738.0 421.2C736.8 418.3 737.0 418.8 735.1 419.0C733.2 419.3 732.7 417.1 732.2 421.9Z" fill="none" stroke="#1a8a1a" stroke-width="1" /><path d="M713.4 325.9C709.4 326.4 709.1 325.3 701.2 327.4C693.3 329.4 696.8 327.8 689.8 332.0C682.9 336.2 685.8 333.8 680.5 339.9C675.1 346.0 677.4 342.9 673.8 350.3C670.2 357.6 671.6 353.9 669.7 361.8C667.7 369.8 668.2 365.9 668.0 374.0C667.8 382.2 667.6 378.3 669.0 386.3C670.5 394.3 669.4 390.5 672.5 398.1C675.5 405.7 673.6 402.2 678.1 409.1C682.5 415.9 679.9 413.1 685.8 418.7C691.7 424.3 688.6 421.9 695.7 425.9C702.8 429.9 699.2 428.6 707.1 430.6C715.0 432.5 711.2 432.3 719.3 431.8C727.4 431.3 723.6 431.9 731.3 429.1C739.0 426.4 738.6 425.5 742.3 423.6 L742.3 423.6C741.3 420.2 741.6 419.6 739.4 413.2C737.3 406.9 737.7 408.4 735.8 404.6C733.9 400.7 734.4 402.7 733.6 401.7 L733.6 401.7C730.6 403.1 730.4 402.7 724.6 406.1C718.8 409.4 722.1 408.5 716.3 411.8C710.4 415.1 713.5 414.4 707.1 415.9C700.7 417.5 703.4 417.7 697.1 416.4C690.8 415.1 693.2 416.1 688.1 412.0C683.0 408.0 685.3 409.9 681.9 404.2C678.5 398.4 679.9 401.3 677.9 394.9C676.0 388.5 676.6 391.6 676.0 385.0C675.4 378.3 675.2 381.5 676.2 374.9C677.2 368.3 676.1 371.2 679.0 365.2C681.9 359.3 680.2 361.8 684.9 357.1C689.6 352.4 687.3 354.5 693.1 351.2C698.9 347.9 696.1 349.7 702.4 347.3C708.7 344.9 705.8 346.7 711.9 343.9C718.0 341.1 717.7 340.6 720.7 338.9 L720.7 338.9C719.9 336.8 720.2 336.3 718.5 332.4C716.8 328.6 717.3 329.5 715.6 327.4C713.9 325.2 714.2 326.4 713.4 325.9Z" fill="none" stroke="#ececec" stroke-width="1.6" /><path d="M712.7 327.8C708.9 328.3 708.6 327.3 701.1 329.4C693.7 331.4 696.9 329.9 690.4 334.0C683.9 338.1 686.6 335.8 681.6 341.7C676.6 347.5 678.8 344.6 675.4 351.6C672.0 358.6 673.3 355.1 671.5 362.6C669.7 370.2 670.2 366.5 670.0 374.3C669.8 382.0 669.6 378.3 670.9 385.9C672.3 393.6 671.3 390.0 674.1 397.2C676.9 404.5 675.2 401.1 679.3 407.7C683.5 414.3 681.0 411.5 686.6 416.9C692.1 422.3 689.2 420.0 695.9 423.9C702.6 427.8 699.2 426.5 706.7 428.5C714.1 430.6 710.6 430.3 718.2 430.0C725.9 429.8 722.3 430.1 729.7 427.8C737.1 425.5 736.9 424.6 740.4 423.1" fill="none" stroke="#ececec" stroke-width="1" /><path d="M733.6 403.1C730.6 404.9 730.5 404.6 724.6 408.3C718.8 411.9 722.1 410.9 716.0 414.1C710.0 417.3 713.1 416.6 706.4 417.9C699.8 419.2 702.7 419.5 696.2 418.0C689.7 416.5 692.2 417.7 687.0 413.5C681.7 409.3 684.0 411.3 680.5 405.4C676.9 399.6 678.4 402.5 676.3 396.0C674.3 389.4 675.0 392.6 674.3 385.8C673.6 378.9 673.5 382.2 674.3 375.4C675.2 368.6 674.1 371.6 676.8 365.4C679.5 359.2 677.9 361.8 682.5 356.8C687.2 351.8 684.8 354.0 690.7 350.4C696.5 346.9 693.7 348.7 700.1 346.1C706.5 343.6 703.6 345.4 709.9 342.8C716.3 340.1 716.1 339.7 719.2 338.2" fill="none" stroke="#ececec" stroke-width="1" /><path d="M712.7 328.8C709.0 329.4 708.7 328.4 701.5 330.4C694.3 332.5 697.4 331.0 691.2 335.1C684.9 339.2 687.6 336.9 682.8 342.7C678.0 348.4 680.1 345.5 676.8 352.3C673.6 359.1 674.8 355.7 673.0 363.0C671.2 370.3 671.7 366.7 671.5 374.2C671.2 381.7 671.0 378.1 672.3 385.5C673.5 392.9 672.6 389.4 675.2 396.5C677.9 403.5 676.3 400.3 680.3 406.6C684.3 413.0 681.9 410.3 687.2 415.5C692.6 420.8 689.8 418.5 696.3 422.3C702.8 426.1 699.5 424.8 706.7 426.9C713.8 429.0 710.4 428.7 717.8 428.6C725.3 428.5 721.8 428.8 729.0 426.6C736.2 424.5 735.9 423.7 739.4 422.2 L739.4 422.2C738.9 418.7 739.4 417.7 738.0 411.8C736.5 405.9 736.8 407.6 735.1 404.6C733.4 401.6 733.6 403.4 732.9 402.8 L732.9 402.8C729.9 404.4 729.8 404.1 724.0 407.5C718.2 410.9 721.5 410.0 715.6 413.1C709.7 416.2 712.7 415.5 706.3 416.8C699.8 418.1 702.6 418.4 696.3 416.9C690.0 415.4 692.4 416.5 687.4 412.3C682.5 408.1 684.7 410.1 681.3 404.3C678.0 398.6 679.3 401.4 677.4 395.1C675.4 388.7 676.1 391.8 675.4 385.2C674.8 378.5 674.6 381.7 675.5 375.1C676.4 368.5 675.4 371.4 678.1 365.4C680.9 359.4 679.3 362.0 683.8 357.2C688.4 352.4 686.1 354.5 691.8 351.1C697.6 347.7 694.8 349.5 701.0 347.0C707.3 344.5 704.3 346.2 710.6 343.7C716.8 341.1 716.6 340.8 719.6 339.4 L719.6 339.4C719.0 337.3 719.4 336.8 717.8 333.2C716.2 329.5 716.6 329.8 714.9 328.4C713.2 326.9 713.4 328.7 712.7 328.8" fill="none" stroke="#1010f0" stroke-width="1.3" /><path d="M579.2 550.6C578.4 552.4 578.3 552.8 576.7 556.0C575.1 559.2 575.0 558.2 574.4 560.2C573.8 562.2 574.1 562.3 574.9 562.0C575.7 561.7 574.6 562.6 576.7 559.3C578.9 556.1 579.8 554.6 581.3 552.2" fill="none" stroke="#1a8a1a" stroke-width="1.1" /><path d="M588.4 554.3C588.3 557.4 588.2 557.4 588.2 563.5C588.2 569.6 588.3 569.6 588.4 572.7" fill="none" stroke="#1a8a1a" stroke-width="1.1" /><path d="M592.2 556.0C591.7 559.1 591.6 559.6 590.9 565.2C590.2 570.8 590.4 570.2 590.1 572.7" fill="none" stroke="#1a8a1a" stroke-width="1.1" /><path d="M604.3 553.9C605.4 556.6 605.7 557.0 607.6 561.8C609.5 566.7 608.8 566.7 610.0 568.5C611.1 570.3 611.2 570.1 611.0 567.3C610.7 564.5 610.5 565.5 609.3 560.2C608.0 554.9 607.9 554.3 607.2 551.4" fill="none" stroke="#1a8a1a" stroke-width="1.1" /><path d="M589.2 543.5C589.7 542.9 589.2 541.8 590.5 541.8C591.7 541.8 592.0 540.1 593.0 543.5C594.0 546.8 593.3 549.0 593.4 551.8" fill="none" stroke="#1a8a1a" stroke-width="1.1" /><path d="M589.2 543.5C590.2 546.3 591.2 549.0 592.2 551.8" fill="none" stroke="#1a8a1a" stroke-width="1.1" /><path d="M590.9 499.9C588.4 500.7 588.1 499.8 583.4 502.5C578.7 505.2 580.2 503.5 576.7 508.0C573.2 512.4 573.8 510.7 572.9 515.9C572.1 521.0 572.8 518.4 574.2 523.4C575.6 528.4 575.2 525.6 577.1 530.9C579.1 536.2 578.9 535.1 580.1 539.3C581.2 543.5 581.1 540.7 580.7 543.5C580.4 546.3 576.8 543.9 579.0 547.6C581.3 551.4 581.9 551.7 587.6 554.7C593.2 557.8 590.4 557.3 595.9 556.8C601.5 556.4 599.4 556.7 604.3 553.5C609.2 550.3 608.3 551.7 610.5 547.2C612.8 542.8 610.9 542.5 611.1 540.1" fill="none" stroke="#ececec" stroke-width="1.8" /><path d="M590.9 500.7C588.5 501.6 588.3 500.7 583.8 503.4C579.3 506.1 580.7 504.5 577.4 508.8C574.1 513.1 574.6 511.4 573.9 516.3C573.1 521.2 573.7 518.5 575.0 523.4C576.4 528.3 576.0 525.6 578.0 530.9C579.9 536.2 579.7 535.1 580.9 539.3C582.1 543.5 580.2 540.7 581.6 543.5C582.9 546.3 581.9 544.9 585.1 547.6C588.2 550.4 587.0 549.5 590.9 551.8C594.8 554.2 592.6 554.6 596.8 554.7C600.9 554.9 599.3 554.9 603.4 552.2C607.6 549.6 607.0 550.8 609.3 546.8C611.6 542.8 611.2 541.2 610.4 540.1C609.5 539.0 610.5 541.8 606.8 543.5C603.1 545.1 603.9 545.6 599.3 545.1C594.6 544.6 595.9 545.3 592.7 542.0C589.6 538.6 590.1 540.7 589.7 535.1C589.4 529.5 589.4 531.2 591.7 525.1C594.1 519.0 592.3 522.0 596.8 516.7C601.2 511.5 603.3 513.4 605.1 509.4C606.9 505.3 605.3 507.3 602.2 504.6C599.1 501.9 599.7 502.6 595.9 501.3C592.2 500.0 592.6 500.9 590.9 500.7" fill="none" stroke="#1010f0" stroke-width="1.7" /><path d="M577.1 510.5C578.2 508.9 578.1 508.1 580.5 505.9C582.8 503.6 583.3 503.5 584.2 503.8C585.2 504.1 584.8 504.8 583.4 506.7C582.0 508.7 582.1 508.4 580.1 509.6C578.0 510.9 578.1 510.2 577.1 510.5" fill="none" stroke="#1010f0" stroke-width="1.1" /><path d="M580.5 546.8C582.8 548.6 582.4 549.6 587.6 552.2C592.7 554.9 593.1 553.9 595.9 554.7" fill="none" stroke="#ececec" stroke-width="1.2" /></g></svg>
<svg class="r" style="left:944px;top:199px" width="774" height="374" viewBox="0 0 774 374"><rect width="774" height="374" fill="#fff"/><g transform="translate(-944,-199)"><defs>
<radialGradient id="shd" cx="0.5" cy="0.5" r="0.5"><stop offset="0" stop-color="#c8c8c8" stop-opacity="0.36"/><stop offset="0.4" stop-color="#d2d2d2" stop-opacity="0.25"/><stop offset="0.75" stop-color="#e0e0e0" stop-opacity="0.13"/><stop offset="1" stop-color="#ffffff" stop-opacity="0"/></radialGradient>
<linearGradient id="teal" x1="0" y1="0" x2="1" y2="1"><stop offset="0" stop-color="#aacfcc"/><stop offset="0.5" stop-color="#a0c8c6"/><stop offset="1" stop-color="#9ac2c1"/></linearGradient>
<linearGradient id="shell" x1="0" y1="0" x2="1" y2="1"><stop offset="0" stop-color="#ffffff"/><stop offset="0.5" stop-color="#f1f1f1"/><stop offset="1" stop-color="#d9d9d9"/></linearGradient>
<linearGradient id="legg" x1="0" y1="0" x2="1" y2="0"><stop offset="0" stop-color="#e9e9e9"/><stop offset="0.35" stop-color="#fafafa"/><stop offset="0.7" stop-color="#e2e2e2"/><stop offset="1" stop-color="#bdbdbd"/></linearGradient>
<linearGradient id="base" x1="0" y1="0" x2="0.3" y2="1"><stop offset="0" stop-color="#fdfdfd"/><stop offset="0.6" stop-color="#ededed"/><stop offset="1" stop-color="#cdcdcd"/></linearGradient>
<filter id="bl2" x="-30%" y="-30%" width="160%" height="160%"><feGaussianBlur stdDeviation="1.2"/></filter>
<filter id="bl6" x="-30%" y="-30%" width="160%" height="160%"><feGaussianBlur stdDeviation="5"/></filter>
</defs><ellipse cx="1300" cy="515" rx="225" ry="80" fill="url(#shd)"/><ellipse cx="1280" cy="498" rx="62" ry="20" fill="#d0d0d0" opacity="0.3" filter="url(#bl6)"/><path d="M1142.4 376.0C1146.3 375.3 1145.7 375.0 1154.0 373.8C1162.3 372.6 1155.7 373.3 1167.2 372.4C1178.7 371.5 1174.0 371.2 1188.4 371.1C1202.8 371.0 1198.1 371.3 1210.5 372.0C1222.9 372.7 1217.6 372.0 1225.6 373.3C1233.6 374.6 1231.5 375.1 1234.4 376.0" fill="none" stroke="#1c1cf0" stroke-width="1.2" stroke-dasharray="9 1"/><path d="M1135.4 378.2C1137.6 379.1 1137.3 379.5 1142.0 381.0C1146.7 382.5 1142.9 382.9 1149.5 382.6C1156.1 382.3 1153.3 382.5 1161.9 380.0C1170.5 377.5 1166.4 377.5 1175.2 375.1C1184.0 372.7 1176.6 373.8 1188.4 372.9C1200.2 372.0 1203.1 372.6 1210.5 372.4" fill="none" stroke="#1c1cf0" stroke-width="1.2" stroke-dasharray="8 1"/><path d="M1115.9 371.1C1120.6 372.2 1121.2 372.6 1130.0 374.5C1138.8 376.4 1142.4 376.1 1142.4 376.9C1142.4 377.7 1138.8 378.7 1130.0 376.8C1121.2 374.9 1120.6 373.0 1115.9 371.1" fill="none" stroke="#14a814" stroke-width="1" /><path d="M1199.9 369.5C1200.6 368.0 1200.2 367.4 1202.0 365.0C1203.8 362.6 1202.7 362.8 1205.2 362.3C1207.7 361.8 1208.6 361.7 1209.6 363.6C1210.6 365.5 1207.8 365.6 1208.3 368.0C1208.8 370.4 1210.1 369.8 1211.0 370.7" fill="none" stroke="#14a814" stroke-width="1" /><path d="M1199.9 369.5L1206.5 363" fill="none" stroke="#14a814" stroke-width="1" /><path d="M1216.3 339.3L1225.1 341" fill="none" stroke="#14a814" stroke-width="1.4" /><path d="M1237.5 384.4C1231.5 386.6 1230.9 387.1 1219.4 391.0C1207.9 394.9 1208.9 393.9 1203.0 396.0C1197.1 398.1 1200.7 396.4 1201.7 397.2C1202.7 398.0 1200.8 397.6 1206.1 398.5C1211.4 399.4 1209.3 400.1 1217.6 399.8C1225.9 399.5 1222.9 399.2 1230.9 397.6C1238.9 396.0 1238.0 395.9 1241.5 395.0" fill="none" stroke="#8c8cf6" stroke-width="1" stroke-dasharray="2 1.2"/><path d="M1297.5 358.1L1315 359.2L1336.3 358.5" fill="none" stroke="#1c1cf0" stroke-width="1.1" /><path d="M1315.0 360.0C1323.3 361.5 1323.3 361.8 1340.0 364.4C1356.7 367.0 1353.3 365.9 1365.0 367.8C1376.7 369.7 1372.1 368.0 1375.0 370.0C1377.9 372.0 1377.1 371.5 1373.8 373.8C1370.5 376.1 1367.9 375.9 1365.0 376.9" fill="none" stroke="#1c1cf0" stroke-width="1.1" stroke-dasharray="9 1"/><path d="M1365.0 376.9C1358.8 377.5 1362.1 378.4 1346.3 378.8C1330.5 379.2 1327.1 378.3 1317.5 378.1" fill="none" stroke="#8c8cf6" stroke-width="1" /><path d="M1317.5 378.1C1315.4 377.3 1315.9 378.3 1311.3 375.6C1306.7 372.9 1308.8 373.9 1303.8 370.0C1298.8 366.1 1298.8 365.9 1296.3 363.8" fill="none" stroke="#1c1cf0" stroke-width="1.4" /><path d="M1300.0 351.3C1303.3 353.2 1309.2 355.3 1310.0 356.9C1310.8 358.5 1305.8 357.9 1302.5 356.0C1299.2 354.1 1300.8 352.9 1300.0 351.3" fill="none" stroke="#14a814" stroke-width="1" /><path d="M1381.3 394.4C1383.0 391.7 1380.8 392.1 1390.0 389.4C1399.2 386.7 1396.3 387.4 1408.8 386.3C1421.3 385.2 1412.9 385.2 1427.5 386.0C1442.1 386.8 1435.8 386.0 1452.5 388.8C1469.2 391.6 1462.9 391.1 1477.5 394.4C1492.1 397.7 1487.5 396.1 1496.3 398.8C1505.1 401.5 1502.6 400.0 1503.8 402.5C1505.0 405.0 1506.7 403.4 1500.0 406.3C1493.3 409.2 1495.5 408.4 1483.8 411.3C1472.1 414.2 1477.5 413.1 1465.0 415.0C1452.5 416.9 1458.0 416.9 1446.3 416.9C1434.6 416.9 1440.4 417.5 1430.0 415.0C1419.6 412.5 1426.2 413.4 1415.0 409.4C1403.8 405.4 1406.3 407.1 1396.3 403.1C1386.3 399.1 1390.0 400.4 1385.0 397.5C1380.0 394.6 1379.6 397.1 1381.3 394.4Z" fill="none" stroke="#1c1cf0" stroke-width="1.3" /><path d="M1396.3 393.1C1399.6 395.8 1400.1 396.3 1406.3 401.3C1412.5 406.3 1412.1 405.8 1415.0 408.1" fill="none" stroke="#1c1cf0" stroke-width="1.6" /><path d="M1418.8 408.8C1422.1 408.6 1422.6 410.0 1428.8 408.1C1435.0 406.2 1429.6 405.8 1437.5 403.1C1445.4 400.4 1447.5 401.0 1452.5 400.0" fill="none" stroke="#1c1cf0" stroke-width="1.1" /><path d="M1452.5 400.0C1458.8 399.4 1462.1 398.8 1471.3 398.1C1480.5 397.4 1477.1 398.0 1480.0 398.0" fill="none" stroke="#8c8cf6" stroke-width="0.9" /><path d="M1418.8 388.8C1430.0 390.0 1432.9 390.0 1452.5 392.5C1472.1 395.0 1469.2 395.0 1477.5 396.3" fill="none" stroke="#1c1cf0" stroke-width="1" /><path d="M1369.4 392.5C1372.7 392.2 1377.7 392.6 1390.0 393.0C1402.3 393.4 1402.3 392.9 1406.3 393.8C1410.3 394.7 1410.8 395.7 1402.0 395.8C1393.2 395.9 1390.9 395.1 1380.0 394.0C1369.1 392.9 1366.1 392.8 1369.4 392.5Z" fill="none" stroke="#14a814" stroke-width="1" /><path d="M1369.4 392.5L1380 393" fill="none" stroke="#14a814" stroke-width="1.6" /><path d="M1419.4 386.3C1420.6 384.0 1420.0 382.3 1423.1 383.1C1426.2 383.9 1430.0 386.5 1428.8 388.8C1427.6 391.1 1422.5 390.8 1419.4 390.0C1416.3 389.2 1418.2 388.6 1419.4 386.3Z" fill="none" stroke="#14a814" stroke-width="1" /><path d="M1447.5 413.1C1449.6 411.7 1457.9 412.1 1460.0 413.8C1462.1 415.5 1458.0 418.3 1453.8 418.1C1449.6 417.9 1445.4 414.5 1447.5 413.1Z" fill="none" stroke="#14a814" stroke-width="0.9" /><path d="M1486.9 403.8L1508.8 405.6" fill="none" stroke="#14a814" stroke-width="1.2" /><path d="M1251.8 436.0C1249.0 436.0 1252.2 440.5 1250.5 448.0C1248.8 455.5 1249.2 453.8 1246.0 461.0C1242.8 468.2 1244.3 464.5 1240.0 472.0C1235.7 479.5 1235.8 478.9 1231.8 486.1C1227.8 493.3 1227.6 492.0 1226.5 496.0C1225.4 500.0 1226.0 498.6 1228.0 499.5C1230.0 500.4 1229.7 503.0 1233.0 499.0C1236.3 495.0 1234.3 494.9 1238.9 486.1C1243.5 477.3 1243.5 478.3 1248.3 469.6C1253.1 460.9 1251.5 463.5 1255.0 457.0C1258.5 450.5 1261.0 454.3 1260.0 448.0C1259.0 441.7 1254.6 436.0 1251.8 436.0Z" fill="url(#legg)" stroke="#d9d9d9" stroke-width="0.6" /><path d="M1349.7 472.0C1347.4 479.2 1352.4 477.7 1355.6 486.1C1358.8 494.5 1357.5 491.3 1360.3 500.0C1363.1 508.7 1362.5 507.2 1365.0 515.0C1367.5 522.8 1366.7 522.0 1368.5 526.0C1370.3 530.0 1369.2 528.0 1371.0 528.5C1372.8 529.0 1373.5 530.6 1374.5 527.5C1375.5 524.4 1375.8 526.2 1374.5 518.0C1373.2 509.8 1372.4 509.6 1370.3 500.0C1368.2 490.4 1369.0 495.1 1367.4 486.1C1365.8 477.1 1366.3 477.2 1365.0 470.0C1363.7 462.8 1367.8 461.4 1363.2 462.0C1358.6 462.6 1352.0 464.8 1349.7 472.0Z" fill="url(#legg)" stroke="#d4d4d4" stroke-width="0.6" /><path d="M1292.3 262.8C1284.0 263.6 1285.9 263.6 1278.6 266.7C1271.3 269.8 1272.2 269.3 1264.8 274.6C1257.5 279.8 1257.9 279.3 1251.1 286.3C1244.3 293.4 1244.5 293.5 1239.3 301.1C1234.1 308.7 1234.8 307.5 1231.4 314.8C1228.0 322.2 1227.8 321.3 1226.5 328.6C1225.2 335.9 1225.7 334.0 1226.5 342.3C1227.3 350.7 1227.4 350.6 1229.5 360.0C1231.6 369.4 1231.2 368.3 1234.4 377.7C1237.5 387.1 1237.9 386.5 1241.3 395.4C1244.7 404.3 1244.3 402.7 1247.2 411.1C1250.0 419.5 1250.0 417.9 1252.1 426.8C1254.2 435.7 1252.4 437.8 1255.0 444.5C1257.7 451.2 1250.0 445.7 1262.0 452.0C1274.0 458.3 1277.9 465.3 1300.0 468.0C1322.1 470.7 1325.8 470.5 1345.0 462.0C1364.2 453.5 1363.1 447.5 1372.0 436.0C1380.9 424.5 1379.5 424.4 1378.5 419.0C1377.5 413.6 1374.6 414.7 1368.2 415.6C1361.9 416.5 1362.8 418.8 1354.6 422.4C1346.3 426.0 1346.4 427.1 1337.2 429.2C1328.0 431.2 1328.2 431.4 1320.1 430.1C1312.0 428.9 1312.9 428.2 1306.9 424.5C1300.9 420.7 1301.4 421.3 1297.6 416.0C1293.7 410.8 1293.9 411.3 1292.3 404.8C1290.7 398.3 1290.9 399.2 1291.6 391.6C1292.3 384.0 1292.4 384.4 1294.9 376.2C1297.3 367.9 1296.8 369.0 1300.7 360.7C1304.5 352.4 1304.5 352.9 1309.4 345.2C1314.3 337.4 1313.4 338.6 1319.1 331.6C1324.8 324.6 1324.6 325.1 1330.8 318.9C1337.0 312.7 1336.8 312.9 1342.5 308.2C1348.2 303.5 1348.8 304.5 1352.2 301.4C1355.6 298.4 1355.3 300.5 1355.2 296.8C1355.1 293.0 1355.3 292.7 1351.7 287.3C1348.0 281.9 1348.4 281.8 1341.5 276.5C1334.5 271.3 1334.1 271.1 1325.7 267.7C1317.4 264.3 1318.9 265.1 1310.0 263.8C1301.1 262.4 1300.7 262.0 1292.3 262.8Z" fill="url(#shell)" stroke="#c6c6c6" stroke-width="1" /><path d="M1260.1 440.7C1261.9 439.1 1259.6 439.8 1262.4 438.9C1265.2 438.0 1265.2 437.1 1269.5 437.8C1273.8 438.5 1271.6 437.4 1276.6 441.3C1281.5 445.2 1278.9 444.3 1286.0 450.7C1293.1 457.1 1291.7 456.5 1300.2 462.5C1308.7 468.5 1305.8 467.3 1314.3 470.8C1322.8 474.3 1319.9 474.0 1328.4 474.3C1336.9 474.6 1335.5 474.7 1342.6 471.9C1349.7 469.1 1346.3 470.5 1352.0 464.9C1357.7 459.3 1356.5 460.9 1361.5 453.1C1366.5 445.3 1365.0 447.4 1368.5 438.9C1372.0 430.4 1371.4 431.2 1373.2 424.8C1375.0 418.4 1373.1 419.5 1374.4 417.7C1375.7 415.9 1376.5 416.0 1377.4 418.9C1378.3 421.8 1378.7 419.8 1377.4 427.2C1376.1 434.6 1376.9 433.8 1373.2 443.7C1369.5 453.6 1370.6 452.1 1365.0 460.2C1359.4 468.3 1361.1 465.5 1354.4 470.8C1347.7 476.1 1350.4 474.6 1342.6 477.8C1334.8 481.0 1336.9 480.3 1328.4 481.4C1319.9 482.5 1324.2 482.5 1314.3 481.4C1304.4 480.3 1306.0 480.3 1295.4 477.8C1284.8 475.3 1288.1 476.6 1278.9 473.1C1269.7 469.6 1271.8 470.6 1264.8 466.0C1257.8 461.4 1259.1 462.2 1255.4 457.8C1251.7 453.4 1252.1 455.4 1252.4 451.3C1252.7 447.2 1254.2 447.4 1256.5 444.2C1258.8 441.0 1258.3 442.3 1260.1 440.7Z" fill="url(#base)" stroke="#cccccc" stroke-width="0.7" /><path d="M1252.4 413.0C1251.2 409.5 1250.9 408.3 1248.3 401.2C1245.7 394.1 1246.9 395.9 1243.6 389.4C1240.3 382.9 1240.7 387.3 1237.3 379.7C1234.0 372.0 1234.7 373.4 1232.4 363.9C1230.2 354.5 1230.7 357.1 1229.9 348.2C1229.0 339.4 1229.0 342.1 1229.5 334.5C1229.9 326.8 1229.1 328.9 1231.4 322.7C1233.8 316.5 1232.6 318.6 1237.3 313.9C1242.0 309.1 1240.7 311.1 1247.2 307.0C1253.6 302.8 1252.5 304.8 1258.9 300.1C1265.4 295.4 1263.8 296.9 1268.8 291.3C1273.8 285.7 1271.5 287.3 1275.6 281.4C1279.8 275.5 1280.5 274.6 1282.5 271.6" fill="none" stroke="#b4b4b4" stroke-width="3.6" filter="url(#bl2)" opacity="0.9"/><path d="M1292.3 266.7C1299.4 265.0 1297.2 265.2 1306.1 266.1C1314.9 267.0 1312.4 266.2 1321.8 269.6C1331.2 273.1 1329.3 271.9 1337.5 277.5C1345.8 283.1 1344.4 282.4 1349.3 288.3C1354.2 294.2 1353.2 293.6 1353.8 297.2C1354.4 300.7 1355.0 297.2 1351.3 300.1C1347.6 303.0 1347.9 301.7 1341.5 307.0C1335.0 312.3 1336.7 310.7 1329.7 317.8C1322.6 324.9 1324.4 322.6 1317.9 330.6C1311.4 338.5 1313.7 335.5 1308.1 344.3C1302.5 353.1 1303.6 350.6 1299.2 360.0C1294.8 369.4 1296.1 366.3 1293.3 375.7C1290.6 385.2 1290.8 383.1 1290.0 391.5C1289.2 399.8 1288.4 396.1 1290.7 403.6C1293.0 411.1 1292.1 409.4 1297.8 416.5C1303.5 423.6 1301.8 422.4 1309.6 427.2C1317.4 432.0 1315.2 430.9 1323.7 432.5C1332.2 434.1 1329.4 434.1 1337.9 432.5C1346.4 430.9 1344.2 431.1 1352.0 427.2C1359.8 423.3 1358.1 422.7 1363.8 419.5C1369.5 416.3 1367.7 417.0 1370.9 416.5C1374.1 416.0 1373.7 415.2 1374.4 417.7C1375.1 420.2 1375.0 418.4 1373.2 424.8C1371.4 431.2 1372.0 430.4 1368.5 438.9C1365.0 447.4 1366.5 445.3 1361.5 453.1C1356.5 460.9 1357.7 459.3 1352.0 464.9C1346.3 470.5 1349.7 469.1 1342.6 471.9C1335.5 474.7 1336.9 474.6 1328.4 474.3C1319.9 474.0 1322.8 474.3 1314.3 470.8C1305.8 467.3 1308.7 468.5 1300.2 462.5C1291.7 456.5 1293.1 457.1 1286.0 450.7C1278.9 444.3 1281.5 445.2 1276.6 441.3C1271.6 437.4 1273.8 438.5 1269.5 437.8C1265.2 437.1 1265.2 438.0 1262.4 438.9C1259.6 439.8 1261.5 441.8 1260.1 440.7C1258.7 439.6 1259.1 440.2 1257.7 435.4C1256.3 430.6 1257.0 431.5 1255.4 424.8C1253.8 418.1 1254.5 420.1 1252.4 413.0C1250.3 405.9 1250.9 408.3 1248.3 401.2C1245.7 394.1 1246.9 395.9 1243.6 389.4C1240.3 382.9 1240.7 387.3 1237.3 379.7C1234.0 372.0 1234.7 373.4 1232.4 363.9C1230.2 354.5 1230.7 357.1 1229.9 348.2C1229.0 339.4 1229.0 342.1 1229.5 334.5C1229.9 326.8 1229.1 328.9 1231.4 322.7C1233.8 316.5 1232.6 318.6 1237.3 313.9C1242.0 309.1 1240.7 311.1 1247.2 307.0C1253.6 302.8 1252.5 304.8 1258.9 300.1C1265.4 295.4 1263.8 296.9 1268.8 291.3C1273.8 285.7 1271.5 287.3 1275.6 281.4C1279.8 275.5 1277.5 276.0 1282.5 271.6C1287.5 267.2 1285.3 268.3 1292.3 266.7Z" fill="url(#teal)" stroke="#cfe6e4" stroke-width="1" /><path d="M1351.3 300.1C1348.3 302.2 1347.9 301.7 1341.5 307.0C1335.0 312.3 1336.7 310.7 1329.7 317.8C1322.6 324.9 1324.4 322.6 1317.9 330.6C1311.4 338.5 1313.7 335.5 1308.1 344.3C1302.5 353.1 1303.6 350.6 1299.2 360.0C1294.8 369.4 1296.1 366.3 1293.3 375.7C1290.6 385.2 1290.8 383.1 1290.0 391.5C1289.2 399.8 1288.4 396.1 1290.7 403.6C1293.0 411.1 1292.1 409.4 1297.8 416.5C1303.5 423.6 1301.8 422.4 1309.6 427.2C1317.4 432.0 1315.2 430.9 1323.7 432.5C1332.2 434.1 1329.4 434.1 1337.9 432.5C1346.4 430.9 1344.2 431.1 1352.0 427.2C1359.8 423.3 1358.1 422.7 1363.8 419.5C1369.5 416.3 1368.8 417.4 1370.9 416.5" fill="none" stroke="#86b2b0" stroke-width="1.2" opacity="0.7"/><path d="M1248.3 401.2C1246.9 397.7 1246.9 395.9 1243.6 389.4C1240.3 382.9 1240.7 387.3 1237.3 379.7C1234.0 372.0 1234.7 373.4 1232.4 363.9C1230.2 354.5 1230.7 357.1 1229.9 348.2C1229.0 339.4 1229.0 342.1 1229.5 334.5C1229.9 326.8 1229.1 328.9 1231.4 322.7C1233.8 316.5 1232.6 318.6 1237.3 313.9C1242.0 309.1 1240.7 311.1 1247.2 307.0C1253.6 302.8 1252.5 304.8 1258.9 300.1C1265.4 295.4 1263.8 296.9 1268.8 291.3C1273.8 285.7 1271.5 287.3 1275.6 281.4C1279.8 275.5 1280.5 274.6 1282.5 271.6" fill="none" stroke="#c4e0de" stroke-width="1.6" opacity="0.8"/><path d="M1269.5 437.8C1271.6 438.9 1271.6 437.4 1276.6 441.3C1281.5 445.2 1278.9 444.3 1286.0 450.7C1293.1 457.1 1291.7 456.5 1300.2 462.5C1308.7 468.5 1305.8 467.3 1314.3 470.8C1322.8 474.3 1319.9 474.0 1328.4 474.3C1336.9 474.6 1335.5 474.7 1342.6 471.9C1349.7 469.1 1346.3 470.5 1352.0 464.9C1357.7 459.3 1356.5 460.9 1361.5 453.1C1366.5 445.3 1365.0 447.4 1368.5 438.9C1372.0 430.4 1371.4 431.2 1373.2 424.8C1375.0 418.4 1374.0 419.8 1374.4 417.7" fill="none" stroke="#8ab4b2" stroke-width="1.1" opacity="0.8"/><path d="M1240.5 372q3 -3.5 6.5 0l1.200 9q-3.500 2 -6.500 0z" fill="#c2dedc" opacity="0.9" filter="url(#bl2)"/><path d="M1261 369q4.500 -4 9 0l0.500 9q-4.500 2.500 -8.500 0z" fill="#b4d6d4" opacity="0.9" filter="url(#bl2)"/><path d="M1291.9 475.5C1290.1 477.5 1292.6 478.8 1293.1 486.1C1293.6 493.5 1293.6 488.3 1293.7 500.0C1293.8 511.7 1293.6 510.6 1293.5 525.0C1293.4 539.4 1293.1 539.0 1293.3 548.0C1293.5 557.0 1292.9 552.5 1294.0 555.0C1295.1 557.5 1295.2 556.6 1297.0 556.5C1298.8 556.4 1298.7 559.5 1300.0 554.5C1301.3 549.5 1300.6 550.4 1301.5 540.0C1302.4 529.6 1302.2 532.0 1303.0 520.0C1303.8 508.0 1303.4 510.2 1304.3 500.0C1305.2 489.8 1305.1 492.0 1306.0 486.1C1306.9 480.2 1309.3 482.2 1307.2 480.2C1305.1 478.2 1303.6 480.9 1299.0 479.5C1294.4 478.1 1293.7 473.5 1291.9 475.5Z" fill="url(#legg)" stroke="#d4d4d4" stroke-width="0.6" /></g></svg>
<svg class="r" style="left:66px;top:579px" width="872" height="357" viewBox="0 0 872 357"><rect width="872" height="357" fill="#9da3aa"/><path d="M2.5 0V357M5.5 0V357M8.5 0V357M10.5 0V357M13.5 0V357M16.5 0V357M19.5 0V357M22.5 0V357M24.5 0V357M27.5 0V357M30.5 0V357M33.5 0V357M36.5 0V357M38.5 0V357M41.5 0V357M44.5 0V357M47.5 0V357M50.5 0V357M52.5 0V357M55.5 0V357M58.5 0V357M61.5 0V357M64.5 0V357M66.5 0V357M69.5 0V357M72.5 0V357M75.5 0V357M78.5 0V357M80.5 0V357M83.5 0V357M86.5 0V357M89.5 0V357M91.5 0V357M94.5 0V357M97.5 0V357M100.5 0V357M103.5 0V357M105.5 0V357M108.5 0V357M111.5 0V357M114.5 0V357M117.5 0V357M119.5 0V357M122.5 0V357M125.5 0V357M128.5 0V357M131.5 0V357M133.5 0V357M136.5 0V357M139.5 0V357M142.5 0V357M145.5 0V357M147.5 0V357M150.5 0V357M153.5 0V357M156.5 0V357M159.5 0V357M161.5 0V357M164.5 0V357M167.5 0V357M170.5 0V357M173.5 0V357M175.5 0V357M178.5 0V357M181.5 0V357M184.5 0V357M187.5 0V357M189.5 0V357M192.5 0V357M195.5 0V357M198.5 0V357M201.5 0V357M203.5 0V357M206.5 0V357M209.5 0V357M212.5 0V357M214.5 0V357M217.5 0V357M220.5 0V357M223.5 0V357M226.5 0V357M228.5 0V357M231.5 0V357M234.5 0V357M237.5 0V357M240.5 0V357M242.5 0V357M245.5 0V357M248.5 0V357M251.5 0V357M254.5 0V357M256.5 0V357M259.5 0V357M262.5 0V357M265.5 0V357M268.5 0V357M270.5 0V357M273.5 0V357M276.5 0V357M279.5 0V357M282.5 0V357M284.5 0V357M287.5 0V357M290.5 0V357M293.5 0V357M296.5 0V357M298.5 0V357M301.5 0V357M304.5 0V357M307.5 0V357M310.5 0V357M312.5 0V357M315.5 0V357M318.5 0V357M321.5 0V357M323.5 0V357M326.5 0V357M329.5 0V357M332.5 0V357M335.5 0V357M337.5 0V357M340.5 0V357M343.5 0V357M346.5 0V357M349.5 0V357M351.5 0V357M354.5 0V357M357.5 0V357M360.5 0V357M363.5 0V357M365.5 0V357M368.5 0V357M371.5 0V357M374.5 0V357M377.5 0V357M379.5 0V357M382.5 0V357M385.5 0V357M388.5 0V357M391.5 0V357M393.5 0V357M396.5 0V357M399.5 0V357M402.5 0V357M405.5 0V357M407.5 0V357M410.5 0V357M413.5 0V357M416.5 0V357M419.5 0V357M421.5 0V357M424.5 0V357M427.5 0V357M430.5 0V357M432.5 0V357M435.5 0V357M438.5 0V357M441.5 0V357M444.5 0V357M446.5 0V357M449.5 0V357M452.5 0V357M455.5 0V357M458.5 0V357M460.5 0V357M463.5 0V357M466.5 0V357M469.5 0V357M472.5 0V357M474.5 0V357M477.5 0V357M480.5 0V357M483.5 0V357M486.5 0V357M488.5 0V357M491.5 0V357M494.5 0V357M497.5 0V357M500.5 0V357M502.5 0V357M505.5 0V357M508.5 0V357M511.5 0V357M514.5 0V357M516.5 0V357M519.5 0V357M522.5 0V357M525.5 0V357M528.5 0V357M530.5 0V357M533.5 0V357M536.5 0V357M539.5 0V357M541.5 0V357M544.5 0V357M547.5 0V357M550.5 0V357M553.5 0V357M555.5 0V357M558.5 0V357M561.5 0V357M564.5 0V357M567.5 0V357M569.5 0V357M572.5 0V357M575.5 0V357M578.5 0V357M581.5 0V357M583.5 0V357M586.5 0V357M589.5 0V357M592.5 0V357M595.5 0V357M597.5 0V357M600.5 0V357M603.5 0V357M606.5 0V357M609.5 0V357M611.5 0V357M614.5 0V357M617.5 0V357M620.5 0V357M623.5 0V357M625.5 0V357M628.5 0V357M631.5 0V357M634.5 0V357M637.5 0V357M639.5 0V357M642.5 0V357M645.5 0V357M648.5 0V357M650.5 0V357M653.5 0V357M656.5 0V357M659.5 0V357M662.5 0V357M664.5 0V357M667.5 0V357M670.5 0V357M673.5 0V357M676.5 0V357M678.5 0V357M681.5 0V357M684.5 0V357M687.5 0V357M690.5 0V357M692.5 0V357M695.5 0V357M698.5 0V357M701.5 0V357M704.5 0V357M706.5 0V357M709.5 0V357M712.5 0V357M715.5 0V357M718.5 0V357M720.5 0V357M723.5 0V357M726.5 0V357M729.5 0V357M732.5 0V357M734.5 0V357M737.5 0V357M740.5 0V357M743.5 0V357M746.5 0V357M748.5 0V357M751.5 0V357M754.5 0V357M757.5 0V357M760.5 0V357M762.5 0V357M765.5 0V357M768.5 0V357M771.5 0V357M773.5 0V357M776.5 0V357M779.5 0V357M782.5 0V357M785.5 0V357M787.5 0V357M790.5 0V357M793.5 0V357M796.5 0V357M799.5 0V357M801.5 0V357M804.5 0V357M807.5 0V357M810.5 0V357M813.5 0V357M815.5 0V357M818.5 0V357M821.5 0V357M824.5 0V357M827.5 0V357M829.5 0V357M832.5 0V357M835.5 0V357M838.5 0V357M841.5 0V357M843.5 0V357M846.5 0V357M849.5 0V357M852.5 0V357M855.5 0V357M857.5 0V357M860.5 0V357M863.5 0V357M866.5 0V357M869.5 0V357M871.5 0V357M0 0.5H872M0 3.5H872M0 6.5H872M0 9.5H872M0 11.5H872M0 14.5H872M0 17.5H872M0 20.5H872M0 23.5H872M0 25.5H872M0 28.5H872M0 31.5H872M0 34.5H872M0 37.5H872M0 39.5H872M0 42.5H872M0 45.5H872M0 48.5H872M0 51.5H872M0 53.5H872M0 56.5H872M0 59.5H872M0 62.5H872M0 65.5H872M0 67.5H872M0 70.5H872M0 73.5H872M0 76.5H872M0 79.5H872M0 81.5H872M0 84.5H872M0 87.5H872M0 90.5H872M0 93.5H872M0 95.5H872M0 98.5H872M0 101.5H872M0 104.5H872M0 107.5H872M0 109.5H872M0 112.5H872M0 115.5H872M0 118.5H872M0 120.5H872M0 123.5H872M0 126.5H872M0 129.5H872M0 132.5H872M0 134.5H872M0 137.5H872M0 140.5H872M0 143.5H872M0 146.5H872M0 148.5H872M0 151.5H872M0 154.5H872M0 157.5H872M0 160.5H872M0 162.5H872M0 165.5H872M0 168.5H872M0 171.5H872M0 174.5H872M0 176.5H872M0 179.5H872M0 182.5H872M0 185.5H872M0 188.5H872M0 190.5H872M0 193.5H872M0 196.5H872M0 199.5H872M0 202.5H872M0 204.5H872M0 207.5H872M0 210.5H872M0 213.5H872M0 216.5H872M0 218.5H872M0 221.5H872M0 224.5H872M0 227.5H872M0 229.5H872M0 232.5H872M0 235.5H872M0 238.5H872M0 241.5H872M0 243.5H872M0 246.5H872M0 249.5H872M0 252.5H872M0 255.5H872M0 257.5H872M0 260.5H872M0 263.5H872M0 266.5H872M0 269.5H872M0 271.5H872M0 274.5H872M0 277.5H872M0 280.5H872M0 283.5H872M0 285.5H872M0 288.5H872M0 291.5H872M0 294.5H872M0 297.5H872M0 299.5H872M0 302.5H872M0 305.5H872M0 308.5H872M0 311.5H872M0 313.5H872M0 316.5H872M0 319.5H872M0 322.5H872M0 325.5H872M0 327.5H872M0 330.5H872M0 333.5H872M0 336.5H872M0 338.5H872M0 341.5H872M0 344.5H872M0 347.5H872M0 350.5H872M0 352.5H872M0 355.5H872" stroke="#9399a0" stroke-width="1" fill="none"/><path d="M22.5 0V357M50.5 0V357M78.5 0V357M105.5 0V357M133.5 0V357M161.5 0V357M189.5 0V357M217.5 0V357M245.5 0V357M273.5 0V357M301.5 0V357M329.5 0V357M357.5 0V357M385.5 0V357M413.5 0V357M441.5 0V357M469.5 0V357M497.5 0V357M525.5 0V357M553.5 0V357M581.5 0V357M609.5 0V357M637.5 0V357M664.5 0V357M692.5 0V357M720.5 0V357M748.5 0V357M776.5 0V357M804.5 0V357M832.5 0V357M860.5 0V357M0 23.5H872M0 51.5H872M0 79.5H872M0 107.5H872M0 134.5H872M0 162.5H872M0 190.5H872M0 218.5H872M0 246.5H872M0 274.5H872M0 302.5H872M0 330.5H872" stroke="#81868f" stroke-width="1" fill="none"/><rect x="468" y="0" width="2" height="108" fill="#419b41"/><rect x="470" y="106" width="402" height="2" fill="#964141"/><path d="M824 107.5H846" stroke="#f0f0f0" stroke-width="1.2"/><path d="M846 107.29999999999995H872" stroke="#1e8a1e" stroke-width="1.6"/><path d="M832 106.39999999999998H864" stroke="#2222dd" stroke-width="0.7" stroke-dasharray="3 4"/><g transform="translate(-66,-579)"><path d="M110.5 856V892.5H147" fill="none" stroke="#55575a" stroke-width="1"/><text x="113.0" y="856.3" font-size="16" fill="#55575a" font-family="Liberation Sans, sans-serif">z</text><text x="150.4" y="893.5" font-size="16" fill="#55575a" font-family="Liberation Sans, sans-serif">x</text></g></svg>
<svg class="r" style="left:944px;top:579px" width="774" height="357" viewBox="0 0 774 357"><defs><pattern id="gr" x="3.4" y="1" width="6.018" height="6.018" patternUnits="userSpaceOnUse"><rect x="0" y="0" width="1" height="1" fill="#a6acb4"/></pattern></defs><rect width="774" height="357" fill="#959ba3"/><rect width="774" height="357" fill="url(#gr)"/><path d="M8.5 0V357M20.5 0V357M32.5 0V357M44.5 0V357M56.5 0V357M68.5 0V357M80.5 0V357M92.5 0V357M104.5 0V357M116.5 0V357M128.5 0V357M140.5 0V357M152.5 0V357M164.5 0V357M176.5 0V357M188.5 0V357M200.5 0V357M213.5 0V357M225.5 0V357M237.5 0V357M249.5 0V357M261.5 0V357M273.5 0V357M285.5 0V357M297.5 0V357M309.5 0V357M321.5 0V357M333.5 0V357M345.5 0V357M357.5 0V357M369.5 0V357M381.5 0V357M393.5 0V357M405.5 0V357M417.5 0V357M429.5 0V357M441.5 0V357M453.5 0V357M465.5 0V357M477.5 0V357M489.5 0V357M501.5 0V357M513.5 0V357M525.5 0V357M537.5 0V357M550.5 0V357M562.5 0V357M574.5 0V357M586.5 0V357M598.5 0V357M610.5 0V357M622.5 0V357M634.5 0V357M646.5 0V357M658.5 0V357M670.5 0V357M682.5 0V357M694.5 0V357M706.5 0V357M718.5 0V357M730.5 0V357M742.5 0V357M754.5 0V357M766.5 0V357M0 11.5H774M0 23.5H774M0 35.5H774M0 47.5H774M0 59.5H774M0 71.5H774M0 83.5H774M0 95.5H774M0 107.5H774M0 119.5H774M0 131.5H774M0 143.5H774M0 155.5H774M0 167.5H774M0 179.5H774M0 191.5H774M0 203.5H774M0 215.5H774M0 227.5H774M0 239.5H774M0 251.5H774M0 263.5H774M0 275.5H774M0 287.5H774M0 299.5H774M0 312.5H774M0 324.5H774M0 336.5H774M0 348.5H774" stroke="#81868f" stroke-width="1" fill="none"/><rect x="345" y="0" width="2" height="169" fill="#419b41"/><rect x="347" y="167" width="427" height="2" fill="#964141"/><g transform="translate(-944,-579)"><path d="M944 747.5H999" stroke="#f0f0f0" stroke-width="1.2"/><path d="M1074 747.5H1130" stroke="#1e8a1e" stroke-width="1.3"/><path d="M1130 747.5H1174" stroke="#f0f0f0" stroke-width="1.2"/><path d="M1174 747.5H1282" stroke="#0808f0" stroke-width="1.4"/><path d="M1282 747.6H1312" stroke="#f0f0f0" stroke-width="1.2"/><path d="M1372 747.5H1385M1490 747.5H1506" stroke="#1e8a1e" stroke-width="1.2"/><path d="M1385 747.5H1468" stroke="#f0f0f0" stroke-width="1.1"/><path d="M988.5 856V892.5H1025" fill="none" stroke="#55575a" stroke-width="1"/><text x="991.0" y="856.3" font-size="16" fill="#55575a" font-family="Liberation Sans, sans-serif">z</text><text x="1028.4" y="893.5" font-size="16" fill="#55575a" font-family="Liberation Sans, sans-serif">y</text><ellipse cx="1405.6" cy="758.2" rx="5.5" ry="2.5" transform="rotate(-167 1405.6 758.2)" fill="none" stroke="#1a8a1a" stroke-width="0.9"/><ellipse cx="1404.7" cy="761.8" rx="5.3" ry="2.4" transform="rotate(-167 1404.7 761.8)" fill="none" stroke="#1a8a1a" stroke-width="0.9"/><ellipse cx="1403.9" cy="765.4" rx="5.2" ry="2.3" transform="rotate(-167 1403.9 765.4)" fill="none" stroke="#1a8a1a" stroke-width="0.9"/><ellipse cx="1403.1" cy="769.0" rx="5.0" ry="2.3" transform="rotate(-166 1403.1 769.0)" fill="none" stroke="#1a8a1a" stroke-width="0.9"/><ellipse cx="1402.2" cy="772.6" rx="4.9" ry="2.2" transform="rotate(-165 1402.2 772.6)" fill="none" stroke="#1a8a1a" stroke-width="0.9"/><ellipse cx="1401.2" cy="776.1" rx="4.7" ry="2.1" transform="rotate(-164 1401.2 776.1)" fill="none" stroke="#1a8a1a" stroke-width="0.9"/><ellipse cx="1400.1" cy="779.7" rx="4.6" ry="2.1" transform="rotate(-162 1400.1 779.7)" fill="none" stroke="#1a8a1a" stroke-width="0.9"/><ellipse cx="1398.9" cy="783.1" rx="4.4" ry="2.0" transform="rotate(-159 1398.9 783.1)" fill="none" stroke="#1a8a1a" stroke-width="0.9"/><ellipse cx="1397.5" cy="786.6" rx="4.2" ry="1.9" transform="rotate(-157 1397.5 786.6)" fill="none" stroke="#1a8a1a" stroke-width="0.9"/><ellipse cx="1396.1" cy="789.9" rx="4.1" ry="1.8" transform="rotate(-156 1396.1 789.9)" fill="none" stroke="#1a8a1a" stroke-width="0.9"/><ellipse cx="1394.5" cy="793.3" rx="3.9" ry="1.8" transform="rotate(-154 1394.5 793.3)" fill="none" stroke="#1a8a1a" stroke-width="0.9"/><ellipse cx="1392.9" cy="796.6" rx="3.8" ry="1.7" transform="rotate(-153 1392.9 796.6)" fill="none" stroke="#1a8a1a" stroke-width="0.9"/><ellipse cx="1391.2" cy="799.9" rx="3.6" ry="1.6" transform="rotate(-153 1391.2 799.9)" fill="none" stroke="#1a8a1a" stroke-width="0.9"/><ellipse cx="1389.5" cy="803.1" rx="3.5" ry="1.6" transform="rotate(-152 1389.5 803.1)" fill="none" stroke="#1a8a1a" stroke-width="0.9"/><ellipse cx="1387.7" cy="806.3" rx="3.3" ry="1.5" transform="rotate(-150 1387.7 806.3)" fill="none" stroke="#1a8a1a" stroke-width="0.9"/><ellipse cx="1385.8" cy="809.5" rx="3.1" ry="1.4" transform="rotate(-148 1385.8 809.5)" fill="none" stroke="#1a8a1a" stroke-width="0.9"/><ellipse cx="1383.8" cy="812.6" rx="3.0" ry="1.3" transform="rotate(-148 1383.8 812.6)" fill="none" stroke="#1a8a1a" stroke-width="0.9"/><ellipse cx="1381.9" cy="815.7" rx="2.8" ry="1.3" transform="rotate(-151 1381.9 815.7)" fill="none" stroke="#1a8a1a" stroke-width="0.9"/><ellipse cx="1380.3" cy="819.0" rx="2.7" ry="1.2" transform="rotate(-159 1380.3 819.0)" fill="none" stroke="#1a8a1a" stroke-width="0.9"/><ellipse cx="1379.2" cy="822.6" rx="2.5" ry="1.1" transform="rotate(-167 1379.2 822.6)" fill="none" stroke="#1a8a1a" stroke-width="0.9"/><ellipse cx="1378.7" cy="826.2" rx="2.4" ry="1.1" transform="rotate(-173 1378.7 826.2)" fill="none" stroke="#1a8a1a" stroke-width="0.9"/><ellipse cx="1378.3" cy="829.9" rx="2.2" ry="1.0" transform="rotate(-174 1378.3 829.9)" fill="none" stroke="#1a8a1a" stroke-width="0.9"/><path d="M1400.2 757.0C1399.8 759.4 1399.8 759.4 1398.9 764.2C1397.9 769.0 1398.5 766.7 1397.4 771.3C1396.4 776.0 1397.1 773.7 1395.8 778.2C1394.5 782.8 1395.2 780.5 1393.6 784.9C1392.0 789.4 1392.8 787.1 1391.0 791.6C1389.1 796.0 1390.0 793.8 1388.0 798.2C1386.0 802.6 1387.1 800.4 1384.9 804.7C1382.6 808.9 1383.6 806.5 1381.3 811.0C1378.9 815.5 1379.4 813.1 1377.8 818.1C1376.1 823.0 1376.9 822.0 1376.3 825.9C1375.8 829.8 1376.2 828.4 1376.1 829.6" fill="none" stroke="#1a8a1a" stroke-width="1.3" /><path d="M1410.9 759.5C1410.3 761.9 1410.3 761.8 1409.0 766.6C1407.6 771.4 1408.4 769.0 1406.9 773.8C1405.4 778.6 1406.3 776.3 1404.5 781.1C1402.7 785.9 1403.6 783.6 1401.5 788.2C1399.3 792.8 1400.4 790.5 1398.0 795.0C1395.7 799.4 1396.9 797.2 1394.4 801.5C1391.9 805.8 1393.2 803.8 1390.6 808.0C1387.9 812.2 1388.9 810.2 1386.3 814.2C1383.8 818.2 1384.6 815.9 1382.8 820.0C1381.0 824.1 1381.8 823.1 1381.0 826.5C1380.2 829.9 1380.6 828.9 1380.5 830.1" fill="none" stroke="#1a8a1a" stroke-width="1.3" /><ellipse cx="1495.0" cy="768.9" rx="5.0" ry="2.2" transform="rotate(175 1495.0 768.9)" fill="none" stroke="#1a8a1a" stroke-width="0.9"/><ellipse cx="1495.3" cy="771.9" rx="4.9" ry="2.2" transform="rotate(175 1495.3 771.9)" fill="none" stroke="#1a8a1a" stroke-width="0.9"/><ellipse cx="1495.5" cy="775.0" rx="4.7" ry="2.1" transform="rotate(175 1495.5 775.0)" fill="none" stroke="#1a8a1a" stroke-width="0.9"/><ellipse cx="1495.8" cy="778.1" rx="4.6" ry="2.1" transform="rotate(175 1495.8 778.1)" fill="none" stroke="#1a8a1a" stroke-width="0.9"/><ellipse cx="1496.1" cy="781.1" rx="4.4" ry="2.0" transform="rotate(174 1496.1 781.1)" fill="none" stroke="#1a8a1a" stroke-width="0.9"/><ellipse cx="1496.4" cy="784.2" rx="4.3" ry="1.9" transform="rotate(174 1496.4 784.2)" fill="none" stroke="#1a8a1a" stroke-width="0.9"/><ellipse cx="1496.8" cy="787.2" rx="4.1" ry="1.9" transform="rotate(172 1496.8 787.2)" fill="none" stroke="#1a8a1a" stroke-width="0.9"/><ellipse cx="1497.2" cy="790.3" rx="4.0" ry="1.8" transform="rotate(171 1497.2 790.3)" fill="none" stroke="#1a8a1a" stroke-width="0.9"/><ellipse cx="1497.8" cy="793.3" rx="3.9" ry="1.7" transform="rotate(169 1497.8 793.3)" fill="none" stroke="#1a8a1a" stroke-width="0.9"/><ellipse cx="1498.4" cy="796.3" rx="3.7" ry="1.7" transform="rotate(168 1498.4 796.3)" fill="none" stroke="#1a8a1a" stroke-width="0.9"/><ellipse cx="1499.1" cy="799.3" rx="3.6" ry="1.6" transform="rotate(167 1499.1 799.3)" fill="none" stroke="#1a8a1a" stroke-width="0.9"/><ellipse cx="1499.8" cy="802.3" rx="3.4" ry="1.5" transform="rotate(167 1499.8 802.3)" fill="none" stroke="#1a8a1a" stroke-width="0.9"/><ellipse cx="1500.5" cy="805.3" rx="3.3" ry="1.5" transform="rotate(167 1500.5 805.3)" fill="none" stroke="#1a8a1a" stroke-width="0.9"/><ellipse cx="1501.1" cy="808.3" rx="3.1" ry="1.4" transform="rotate(167 1501.1 808.3)" fill="none" stroke="#1a8a1a" stroke-width="0.9"/><ellipse cx="1501.8" cy="811.3" rx="3.0" ry="1.4" transform="rotate(167 1501.8 811.3)" fill="none" stroke="#1a8a1a" stroke-width="0.9"/><ellipse cx="1502.5" cy="814.3" rx="2.9" ry="1.3" transform="rotate(167 1502.5 814.3)" fill="none" stroke="#1a8a1a" stroke-width="0.9"/><ellipse cx="1503.1" cy="817.3" rx="2.7" ry="1.2" transform="rotate(167 1503.1 817.3)" fill="none" stroke="#1a8a1a" stroke-width="0.9"/><ellipse cx="1503.8" cy="820.3" rx="2.6" ry="1.2" transform="rotate(168 1503.8 820.3)" fill="none" stroke="#1a8a1a" stroke-width="0.9"/><ellipse cx="1504.4" cy="823.3" rx="2.4" ry="1.1" transform="rotate(170 1504.4 823.3)" fill="none" stroke="#1a8a1a" stroke-width="0.9"/><ellipse cx="1504.9" cy="826.4" rx="2.3" ry="1.0" transform="rotate(173 1504.9 826.4)" fill="none" stroke="#1a8a1a" stroke-width="0.9"/><ellipse cx="1505.2" cy="829.4" rx="2.1" ry="1.0" transform="rotate(176 1505.2 829.4)" fill="none" stroke="#1a8a1a" stroke-width="0.9"/><ellipse cx="1505.3" cy="832.5" rx="2.0" ry="0.9" transform="rotate(177 1505.3 832.5)" fill="none" stroke="#1a8a1a" stroke-width="0.9"/><path d="M1490.0 769.3C1490.3 771.3 1490.3 771.3 1490.8 775.4C1491.4 779.5 1491.1 777.4 1491.7 781.6C1492.3 785.7 1491.9 783.6 1492.7 787.8C1493.4 791.9 1493.0 789.9 1494.0 794.0C1495.0 798.1 1494.5 796.1 1495.6 800.1C1496.7 804.1 1496.2 802.1 1497.3 806.0C1498.4 810.0 1497.8 808.0 1498.9 812.0C1499.9 815.9 1499.4 814.0 1500.5 817.9C1501.5 821.8 1501.2 819.9 1502.0 823.8C1502.9 827.7 1502.6 826.7 1503.0 829.6C1503.5 832.6 1503.2 831.6 1503.3 832.6" fill="none" stroke="#1a8a1a" stroke-width="1.3" /><path d="M1500.0 768.4C1500.1 770.5 1500.0 770.5 1500.2 774.6C1500.4 778.7 1500.3 776.6 1500.5 780.7C1500.7 784.7 1500.5 782.7 1500.9 786.7C1501.2 790.6 1501.0 788.6 1501.6 792.6C1502.1 796.5 1501.8 794.5 1502.5 798.5C1503.2 802.5 1502.9 800.5 1503.7 804.6C1504.4 808.6 1504.0 806.6 1504.7 810.7C1505.4 814.7 1505.1 812.6 1505.8 816.7C1506.5 820.8 1506.3 818.7 1506.8 822.9C1507.3 827.1 1507.1 826.1 1507.3 829.3C1507.5 832.5 1507.3 831.4 1507.3 832.4" fill="none" stroke="#1a8a1a" stroke-width="1.3" /><path d="M1442.2 601.1L1417.2 644.7" fill="none" stroke="#1010f0" stroke-width="1.2" /><path d="M1418.3 609.6L1462.6 628.3" fill="none" stroke="#1010f0" stroke-width="1.1" /><path d="M1411.2 614.2L1396.7 662.9" fill="none" stroke="#1010f0" stroke-width="1.2" /><path d="M1393.0 631.8L1436.1 636.2" fill="none" stroke="#1010f0" stroke-width="1.1" /><path d="M1388.3 638.9L1387.4 688.7" fill="none" stroke="#1010f0" stroke-width="1.2" /><path d="M1378.2 662.2L1411.3 648.3" fill="none" stroke="#1010f0" stroke-width="1.1" /><path d="M1376.2 670.5L1389.2 716.2" fill="none" stroke="#1010f0" stroke-width="1.2" /><path d="M1374.9 695.8L1393.2 668.9" fill="none" stroke="#1010f0" stroke-width="1.1" /><path d="M1376.1 704.3L1398.4 742.2" fill="none" stroke="#1010f0" stroke-width="1.2" /><path d="M1383.1 728.7L1386.9 695.6" fill="none" stroke="#1010f0" stroke-width="1.1" /><path d="M1386.6 736.4L1419.5 759.3" fill="none" stroke="#1010f0" stroke-width="1.2" /><path d="M1400.9 757.5L1390.9 722.9" fill="none" stroke="#1010f0" stroke-width="1.1" /><path d="M1406.7 763.7L1446.8 760.2" fill="none" stroke="#1010f0" stroke-width="1.2" /><path d="M1427.6 777.8L1402.5 747.7" fill="none" stroke="#1010f0" stroke-width="1.1" /><path d="M1435.4 781.0L1470.5 746.2" fill="none" stroke="#1010f0" stroke-width="1.2" /><path d="M1460.0 785.2L1426.2 761.2" fill="none" stroke="#1010f0" stroke-width="1.1" /><path d="M1468.3 784.5L1494.5 735.2" fill="none" stroke="#1010f0" stroke-width="1.2" /><path d="M1492.3 776.7L1453.1 757.6" fill="none" stroke="#1010f0" stroke-width="1.1" /><path d="M1458.6 597.2C1452.8 597.1 1452.6 595.4 1441.2 596.9C1429.9 598.4 1435.1 597.1 1424.5 601.6C1413.9 606.2 1418.8 603.6 1409.5 610.5C1400.2 617.3 1404.3 613.5 1396.6 622.1C1389.0 630.7 1392.4 626.4 1386.6 636.4C1380.8 646.4 1383.2 641.3 1379.2 652.1C1375.2 663.0 1376.7 657.5 1374.5 668.9C1372.4 680.3 1372.9 674.7 1372.8 686.2C1372.8 697.8 1372.5 692.1 1374.5 703.6C1376.4 715.0 1375.0 709.5 1378.7 720.5C1382.3 731.4 1380.1 726.2 1385.4 736.5C1390.7 746.8 1387.8 741.9 1394.6 751.3C1401.4 760.7 1397.6 756.6 1405.8 764.7C1414.0 772.8 1409.6 769.3 1419.3 775.6C1428.9 782.0 1424.0 779.4 1434.7 783.7C1445.5 788.0 1440.1 786.7 1451.4 788.6C1462.8 790.4 1457.3 790.2 1468.8 789.2C1480.2 788.1 1475.0 789.4 1485.8 785.4C1496.6 781.5 1493.7 781.7 1501.2 777.4C1508.6 773.0 1505.9 774.0 1508.2 772.3" fill="none" stroke="#ececec" stroke-width="1.3" /><path d="M1459.0 600.3C1453.4 600.4 1453.2 598.8 1442.0 600.4C1430.9 602.0 1436.1 600.7 1425.7 605.1C1415.3 609.5 1420.1 607.0 1410.9 613.6C1401.7 620.1 1405.7 616.4 1398.1 624.7C1390.5 633.0 1393.9 628.8 1388.0 638.5C1382.2 648.2 1384.6 643.2 1380.6 653.8C1376.6 664.4 1378.1 659.1 1375.9 670.2C1373.8 681.3 1374.3 675.8 1374.2 687.2C1374.2 698.5 1373.9 693.0 1375.8 704.1C1377.7 715.3 1376.4 709.9 1379.9 720.7C1383.4 731.5 1381.3 726.4 1386.4 736.5C1391.6 746.5 1388.7 741.8 1395.4 751.0C1402.1 760.1 1398.3 756.1 1406.5 763.8C1414.7 771.6 1410.4 768.3 1420.0 774.2C1429.6 780.1 1424.7 777.7 1435.3 781.5C1445.8 785.2 1440.5 784.2 1451.6 785.5C1462.6 786.8 1457.4 786.8 1468.4 785.3C1479.5 783.8 1474.3 785.1 1484.8 781.0C1495.2 777.0 1492.4 777.3 1499.8 773.2C1507.2 769.0 1504.5 770.1 1506.9 768.6" fill="none" stroke="#ececec" stroke-width="1.1" /><path d="M1459.4 603.4C1453.9 603.6 1453.7 602.2 1442.8 603.9C1432.0 605.6 1437.0 604.3 1426.8 608.6C1416.7 612.8 1421.4 610.4 1412.3 616.7C1403.2 623.0 1407.2 619.4 1399.5 627.4C1391.9 635.3 1395.3 631.2 1389.5 640.6C1383.6 649.9 1386.1 645.2 1382.0 655.5C1378.0 665.8 1379.5 660.6 1377.3 671.5C1375.2 682.4 1375.7 677.0 1375.6 688.1C1375.6 699.2 1375.3 693.8 1377.2 704.7C1379.0 715.7 1377.7 710.4 1381.1 720.9C1384.5 731.5 1382.4 726.5 1387.4 736.4C1392.4 746.3 1389.6 741.7 1396.2 750.6C1402.8 759.5 1399.1 755.6 1407.3 763.0C1415.4 770.4 1411.2 767.3 1420.7 772.7C1430.2 778.2 1425.4 776.0 1435.8 779.2C1446.2 782.5 1441.0 781.6 1451.8 782.4C1462.5 783.1 1457.4 783.4 1468.0 781.4C1478.7 779.5 1473.6 780.8 1483.7 776.6C1493.9 772.5 1491.2 772.9 1498.4 769.0C1505.7 765.1 1503.1 766.2 1505.5 764.9" fill="none" stroke="#1010f0" stroke-width="1.5" /><path d="M1460.2 609.7C1455.0 610.1 1454.8 609.0 1444.5 610.9C1434.1 612.8 1439.0 611.5 1429.2 615.5C1419.4 619.5 1424.0 617.2 1415.1 622.9C1406.2 628.6 1410.1 625.3 1402.5 632.6C1394.9 639.9 1398.2 636.0 1392.3 644.8C1386.5 653.5 1388.9 649.1 1384.8 658.8C1380.8 668.6 1382.3 663.7 1380.2 674.1C1378.0 684.5 1378.6 679.4 1378.4 690.0C1378.3 700.6 1378.1 695.4 1379.8 705.9C1381.5 716.4 1380.4 711.3 1383.6 721.4C1386.7 731.6 1384.6 726.8 1389.4 736.3C1394.1 745.8 1391.3 741.5 1397.8 749.9C1404.3 758.2 1400.7 754.7 1408.8 761.3C1416.9 768.0 1412.7 765.4 1422.1 769.8C1431.4 774.3 1426.8 772.7 1436.8 774.8C1446.9 776.9 1442.0 776.5 1452.1 776.2C1462.3 775.8 1457.4 776.5 1467.3 773.7C1477.1 770.9 1472.2 772.2 1481.7 767.8C1491.1 763.5 1488.7 764.0 1495.7 760.6C1502.7 757.1 1500.4 758.5 1502.7 757.5" fill="none" stroke="#1010f0" stroke-width="1.2" /><path d="M1461.0 615.9C1456.0 616.5 1455.9 615.7 1446.1 617.9C1436.2 620.1 1440.9 618.6 1431.5 622.4C1422.1 626.1 1426.5 624.0 1417.8 629.2C1409.2 634.3 1413.0 631.2 1405.4 637.8C1397.9 644.4 1401.1 640.9 1395.2 649.0C1389.3 657.1 1391.7 653.0 1387.6 662.2C1383.5 671.4 1385.1 666.8 1383.0 676.7C1380.8 686.6 1381.4 681.7 1381.3 691.9C1381.1 702.0 1380.9 697.0 1382.5 707.1C1384.1 717.1 1383.0 712.2 1386.0 721.9C1388.9 731.6 1386.9 727.1 1391.4 736.2C1395.8 745.3 1393.1 741.3 1399.4 749.2C1405.7 757.0 1402.3 753.7 1410.3 759.7C1418.3 765.6 1414.2 763.4 1423.4 766.9C1432.6 770.5 1428.2 769.4 1437.9 770.4C1447.6 771.4 1442.9 771.4 1452.5 770.0C1462.0 768.5 1457.5 769.6 1466.5 765.9C1475.6 762.3 1470.8 763.6 1479.6 759.0C1488.4 754.4 1486.2 755.2 1493.0 752.2C1499.8 749.2 1497.6 750.7 1500.0 750.0" fill="none" stroke="#1010f0" stroke-width="1.2" /><path d="M1461.8 622.1C1457.1 623.0 1457.0 622.5 1447.7 624.9C1438.3 627.3 1442.8 625.8 1433.8 629.3C1424.8 632.8 1429.1 630.8 1420.6 635.4C1412.1 640.0 1415.9 637.1 1408.4 643.1C1400.8 649.0 1404.1 645.7 1398.1 653.2C1392.1 660.7 1394.5 656.9 1390.4 665.6C1386.3 674.2 1387.9 669.9 1385.8 679.3C1383.7 688.7 1384.3 684.1 1384.1 693.7C1383.9 703.4 1383.7 698.7 1385.2 708.2C1386.6 717.8 1385.7 713.1 1388.4 722.4C1391.1 731.7 1389.2 727.4 1393.3 736.1C1397.5 744.8 1394.8 741.1 1401.0 748.4C1407.1 755.7 1403.8 752.8 1411.8 758.0C1419.7 763.2 1415.8 761.4 1424.8 764.1C1433.9 766.7 1429.6 766.1 1438.9 766.0C1448.3 765.9 1443.8 766.3 1452.8 763.8C1461.7 761.2 1457.5 762.7 1465.8 758.2C1474.0 753.7 1469.4 755.1 1477.5 750.2C1485.7 745.4 1483.7 746.3 1490.3 743.8C1496.8 741.2 1494.9 743.0 1497.2 742.6" fill="none" stroke="#1010f0" stroke-width="1.4" /><path d="M1462.6 628.3C1458.2 629.5 1458.1 629.3 1449.3 631.9C1440.4 634.6 1444.8 633.0 1436.1 636.2C1427.5 639.5 1431.7 637.6 1423.4 641.6C1415.1 645.7 1418.8 643.0 1411.3 648.3C1403.8 653.6 1407.0 650.6 1401.0 657.5C1394.9 664.3 1397.4 660.8 1393.2 668.9C1389.1 677.1 1390.7 673.0 1388.6 681.9C1386.5 690.8 1387.1 686.4 1386.9 695.6C1386.6 704.8 1386.5 700.3 1387.9 709.4C1389.2 718.5 1388.4 714.0 1390.9 722.9C1393.3 731.8 1391.4 727.7 1395.3 736.0C1399.2 744.3 1396.5 740.9 1402.5 747.7C1408.5 754.5 1405.4 751.8 1413.3 756.3C1421.2 760.8 1417.3 759.4 1426.2 761.2C1435.1 762.9 1431.0 762.7 1440.0 761.5C1449.0 760.3 1444.8 761.2 1453.1 757.6C1461.5 753.9 1457.6 755.8 1465.0 750.5C1472.5 745.1 1468.0 746.5 1475.5 741.4C1483.0 736.4 1481.2 737.5 1487.5 735.4C1493.9 733.3 1492.2 735.2 1494.5 735.2" fill="none" stroke="#ececec" stroke-width="2.8" /><path d="M1462.9 630.4C1458.5 631.8 1458.5 631.6 1449.8 634.4C1441.2 637.1 1445.4 635.5 1436.9 638.6C1428.4 641.8 1432.6 640.0 1424.4 643.8C1416.2 647.7 1419.8 645.1 1412.3 650.1C1404.8 655.2 1408.0 652.3 1402.0 658.9C1395.9 665.6 1398.4 662.1 1394.2 670.1C1390.1 678.0 1391.7 674.1 1389.6 682.8C1387.4 691.5 1388.1 687.3 1387.8 696.3C1387.6 705.3 1387.5 700.9 1388.8 709.8C1390.1 718.7 1389.3 714.4 1391.7 723.1C1394.1 731.8 1392.2 727.8 1396.0 736.0C1399.8 744.1 1397.2 740.9 1403.1 747.5C1409.0 754.1 1406.0 751.5 1413.8 755.7C1421.7 760.0 1417.8 758.7 1426.7 760.1C1435.5 761.6 1431.5 761.6 1440.3 760.0C1449.2 758.4 1445.1 759.5 1453.3 755.4C1461.4 751.3 1457.6 753.4 1464.8 747.8C1471.9 742.1 1467.5 743.5 1474.8 738.4C1482.0 733.3 1480.3 734.4 1486.6 732.4C1492.8 730.5 1491.2 732.5 1493.5 732.6" fill="none" stroke="#1010f0" stroke-width="1.2" /><path d="M1409.5 610.5L1423.4 641.6" fill="none" stroke="#ececec" stroke-width="1.1" /><path d="M1378.7 720.5L1390.9 722.9" fill="none" stroke="#ececec" stroke-width="1.1" /><path d="M1442.9 786.6L1446.8 760.2" fill="none" stroke="#ececec" stroke-width="1.1" /><path d="M1458.6 597.2C1460.9 600.3 1461.7 599.0 1465.3 606.5C1468.8 614.0 1470.1 612.5 1469.3 619.8C1468.4 627.0 1464.8 625.4 1462.6 628.3" fill="none" stroke="#ececec" stroke-width="2.2" /><path d="M1508.2 772.3C1506.7 766.6 1506.6 765.2 1503.7 755.1C1500.9 744.9 1502.9 748.4 1499.8 741.8C1496.7 735.2 1496.2 737.4 1494.5 735.2" fill="none" stroke="#ececec" stroke-width="1.6" /><path d="M1372.4 747.1C1376.4 747.3 1380.4 747.5 1384.4 747.6" fill="none" stroke="#ececec" stroke-width="1" /></g></svg>
<svg class="r" style="left:66px;top:199px" width="58.5" height="23" viewBox="0 0 58.5 23"><path d="M0 0H58.5V20L55.5 23H0Z" fill="#cbcfd7"/><path d="M44.5 2V21" stroke="#595b60" stroke-width="1"/><path d="M46.5 8.9h9l-4.5 5z" fill="#595b60"/></svg><span class="t" style="left:74.0px;top:200px;font-size:15px;letter-spacing:0.511px;color:#595b60;font-weight:bold;">Top</span>
<svg class="r" style="left:944px;top:199px" width="113.5" height="23" viewBox="0 0 113.5 23"><path d="M0 0H113.5V20L110.5 23H0Z" fill="#cbcfd7"/><path d="M100.5 2V21" stroke="#55575c" stroke-width="1"/><path d="M102.09999999999991 8.9h9l-4.5 5z" fill="#55575c"/></svg><span class="t" style="left:954.4px;top:200px;font-size:15px;letter-spacing:-0.473px;color:#55575c;font-weight:bold;">Perspective</span>
<svg class="r" style="left:66px;top:579px" width="70" height="23" viewBox="0 0 70 23"><path d="M0 0H70V20L67 23H0Z" fill="#859eee"/><path d="M56.5 2V21" stroke="#2e2a2c" stroke-width="1"/><path d="M58.19999999999999 8.9h9l-4.5 5z" fill="#2e2a2c"/></svg><span class="t" style="left:75.5px;top:580px;font-size:15px;letter-spacing:-0.256px;color:#2e2a2c;font-weight:bold;">Front</span>
<svg class="r" style="left:944px;top:579px" width="69.6" height="23" viewBox="0 0 69.6 23"><path d="M0 0H69.6V20L66.6 23H0Z" fill="#cbcfd7"/><path d="M56.5 2V21" stroke="#595b60" stroke-width="1"/><path d="M58.0 8.9h9l-4.5 5z" fill="#595b60"/></svg><span class="t" style="left:953.3px;top:580px;font-size:15px;letter-spacing:-0.206px;color:#595b60;font-weight:bold;">Right</span>
<span class="t" style="left:1731.3px;top:201px;font-size:14.5px;letter-spacing:-0.603px;color:#333;">Layers</span>
<div class="r" style="left:1777px;top:209.3px;width:142px;height:1.0px;background:#d3d8e6;"></div>
<div class="r" style="left:1777px;top:211px;width:142px;height:1px;background:#d3d8e6;"></div>
<div class="r" style="left:1728px;top:249px;width:191px;height:713px;background:#c3cbe2;"></div>
<div class="r" style="left:1729px;top:250px;width:189px;height:711px;background:#ebedf2;"></div>
<div class="r" style="left:1729px;top:296px;width:185px;height:645px;background:#fff;"></div>
<div class="r" style="left:1729px;top:295px;width:189px;height:1px;background:#c3cbe2;"></div>
<div class="r" style="left:1729px;top:941px;width:185px;height:20px;background:#f0f0f0;"></div>
<div class="r" style="left:1750px;top:948.6px;width:61.59999999999991px;height:3.2999999999999545px;background:#868686;border-radius:1.7px;"></div>
<div class="r" style="left:1754px;top:222px;width:27px;height:29px;background:#c3cbe2;"></div>
<div class="r" style="left:1755px;top:223px;width:25px;height:28px;background:#ebedf2;"></div>
<div class="r" style="left:1808.0px;top:297px;width:1.0px;height:25px;background:#e3e5ec;"></div>
<div class="r" style="left:1829.0px;top:297px;width:1.0px;height:25px;background:#e3e5ec;"></div>
<div class="r" style="left:1850.0px;top:297px;width:1.0px;height:25px;background:#e3e5ec;"></div>
<div class="r" style="left:1871.0px;top:297px;width:1.0px;height:25px;background:#e3e5ec;"></div>
<div class="r" style="left:1892.0px;top:297px;width:1.0px;height:25px;background:#e3e5ec;"></div>
<span class="t" style="left:1734.8px;top:300px;font-size:14.5px;letter-spacing:-0.566px;color:#333;">Layer</span>
<div class="r" style="left:1897px;top:297px;width:17px;height:24px;overflow:hidden"><span class="t" style="left:1.5px;top:3px;font-size:15px;letter-spacing:0.000px;color:#333;">Ma</span></div>
<div class="r" style="left:1729px;top:345px;width:185px;height:1px;background:#e9ebf2;"></div>
<span class="t" style="left:1757.0px;top:325px;font-size:15px;letter-spacing:-0.532px;color:#222;">Defa...</span>
<div class="r" style="left:1729px;top:369px;width:185px;height:1px;background:#e9ebf2;"></div>
<span class="t" style="left:1757.0px;top:349px;font-size:15px;letter-spacing:-0.281px;color:#222;">Picture</span>
<div class="r" style="left:1729px;top:393px;width:185px;height:1px;background:#e9ebf2;"></div>
<span class="t" style="left:1757.0px;top:373px;font-size:14.7px;letter-spacing:-0.580px;color:#222;">Seat</span>
<div class="r" style="left:1729px;top:417px;width:185px;height:1px;background:#e9ebf2;"></div>
<span class="t" style="left:1757.0px;top:397px;font-size:14.7px;letter-spacing:-0.612px;color:#111;font-weight:bold;">Cussi...</span>
<div class="r" style="left:1729px;top:441px;width:185px;height:1px;background:#e9ebf2;"></div>
<span class="t" style="left:1757.0px;top:421px;font-size:14.6px;letter-spacing:-0.592px;color:#222;">Layer ...</span>
<div class="r" style="left:1729px;top:465px;width:185px;height:1px;background:#e9ebf2;"></div>
<span class="t" style="left:1757.0px;top:445px;font-size:14.6px;letter-spacing:-0.592px;color:#222;">Layer ...</span>
<div class="r" style="left:1729px;top:489px;width:185px;height:1px;background:#e9ebf2;"></div>
<span class="t" style="left:1757.0px;top:469px;font-size:14.8px;letter-spacing:-0.587px;color:#222;">Make...</span>
<div class="r" style="left:1729px;top:513px;width:185px;height:1px;background:#e9ebf2;"></div>
<span class="t" style="left:1777.5px;top:493px;font-size:14.6px;letter-spacing:-0.614px;color:#222;">Hi...</span>
<div class="r" style="left:1729px;top:537px;width:185px;height:1px;background:#e9ebf2;"></div>
<span class="t" style="left:1797.0px;top:517px;font-size:15px;letter-spacing:0.000px;color:#222;">C</span>
<div class="r" style="left:1729px;top:561px;width:185px;height:1px;background:#e9ebf2;"></div>
<span class="t" style="left:1777.5px;top:542px;font-size:13.8px;letter-spacing:-0.585px;color:#222;">Vis...</span>
<div class="r" style="left:1729px;top:585px;width:185px;height:1px;background:#e9ebf2;"></div>
<span class="t" style="left:1797.0px;top:565px;font-size:15px;letter-spacing:0.000px;color:#222;">C</span>
<svg class="r" style="left:1729px;top:322px" width="190" height="270" viewBox="1729 322 190 270"><path d="M1839 333m-4.3 -2.2a4.3 4.3 0 1 1 8.6 0c0 2.2 -2 3.2 -2 5.6h-4.6c0 -2.4 -2 -3.4 -2 -5.6z" fill="#ffe98a" stroke="#8a6a10" stroke-width="1"/><path d="M1839 333m-2 4.6h4v2.2l-1 1h-2l-1 -1z" fill="#e8c860" stroke="#8a6a10" stroke-width="0.9"/><path d="M1862.0 333.5v-3a3 3 0 0 1 6 0v1.6" fill="none" stroke="#222" stroke-width="1.3"/><rect x="1855.0" y="333.5" width="10" height="8" rx="1" fill="#f3d64e" stroke="#222" stroke-width="1"/><rect x="1875.8" y="327.3" width="13" height="13" fill="#000" stroke="#333" stroke-width="0.9"/><circle cx="1905" cy="334" r="8" fill="#f9f9fa"/><path d="M1839 357m-4.3 -2.2a4.3 4.3 0 1 1 8.6 0c0 2.2 -2 3.2 -2 5.6h-4.6c0 -2.4 -2 -3.4 -2 -5.6z" fill="#6aa0e8" stroke="#1c3f80" stroke-width="1"/><path d="M1839 357m-2 4.6h4v2.2l-1 1h-2l-1 -1z" fill="#4f86d8" stroke="#1c3f80" stroke-width="0.9"/><path d="M1857.5 357.5v-3a3 3 0 0 1 6 0v3" fill="none" stroke="#1c3f80" stroke-width="1.3"/><rect x="1855.5" y="357.5" width="10" height="8" rx="1" fill="#6aa0e8" stroke="#1c3f80" stroke-width="1"/><rect x="1875.8" y="351.3" width="13" height="13" fill="#cc0000" stroke="#333" stroke-width="0.9"/><circle cx="1905" cy="358" r="8" fill="#f9f9fa"/><path d="M1839 381m-4.3 -2.2a4.3 4.3 0 1 1 8.6 0c0 2.2 -2 3.2 -2 5.6h-4.6c0 -2.4 -2 -3.4 -2 -5.6z" fill="#ffe98a" stroke="#8a6a10" stroke-width="1"/><path d="M1839 381m-2 4.6h4v2.2l-1 1h-2l-1 -1z" fill="#e8c860" stroke="#8a6a10" stroke-width="0.9"/><path d="M1862.0 381.5v-3a3 3 0 0 1 6 0v1.6" fill="none" stroke="#222" stroke-width="1.3"/><rect x="1855.0" y="381.5" width="10" height="8" rx="1" fill="#f3d64e" stroke="#222" stroke-width="1"/><rect x="1875.8" y="375.3" width="13" height="13" fill="#e6e6e6" stroke="#333" stroke-width="0.9"/><circle cx="1905" cy="382" r="8.2" fill="#e4e4e4" stroke="#222" stroke-width="0.9"/><rect x="1875.8" y="399.3" width="13" height="13" fill="#0000ff" stroke="#333" stroke-width="0.9"/><circle cx="1905" cy="406" r="8.2" fill="#b8dcd8" stroke="#222" stroke-width="0.9"/><path d="M1839 429m-4.3 -2.2a4.3 4.3 0 1 1 8.6 0c0 2.2 -2 3.2 -2 5.6h-4.6c0 -2.4 -2 -3.4 -2 -5.6z" fill="#ffe98a" stroke="#8a6a10" stroke-width="1"/><path d="M1839 429m-2 4.6h4v2.2l-1 1h-2l-1 -1z" fill="#e8c860" stroke="#8a6a10" stroke-width="0.9"/><path d="M1862.0 429.5v-3a3 3 0 0 1 6 0v1.6" fill="none" stroke="#222" stroke-width="1.3"/><rect x="1855.0" y="429.5" width="10" height="8" rx="1" fill="#f3d64e" stroke="#222" stroke-width="1"/><rect x="1875.8" y="423.3" width="13" height="13" fill="#008000" stroke="#333" stroke-width="0.9"/><circle cx="1905" cy="430" r="8.2" fill="#ffffff" stroke="#222" stroke-width="0.9"/><path d="M1839 453m-4.3 -2.2a4.3 4.3 0 1 1 8.6 0c0 2.2 -2 3.2 -2 5.6h-4.6c0 -2.4 -2 -3.4 -2 -5.6z" fill="#ffe98a" stroke="#8a6a10" stroke-width="1"/><path d="M1839 453m-2 4.6h4v2.2l-1 1h-2l-1 -1z" fill="#e8c860" stroke="#8a6a10" stroke-width="0.9"/><path d="M1862.0 453.5v-3a3 3 0 0 1 6 0v1.6" fill="none" stroke="#222" stroke-width="1.3"/><rect x="1855.0" y="453.5" width="10" height="8" rx="1" fill="#f3d64e" stroke="#222" stroke-width="1"/><rect x="1875.8" y="447.3" width="13" height="13" fill="#ffffff" stroke="#333" stroke-width="0.9"/><circle cx="1905" cy="454" r="8" fill="#f9f9fa"/><path d="M1839 477m-4.3 -2.2a4.3 4.3 0 1 1 8.6 0c0 2.2 -2 3.2 -2 5.6h-4.6c0 -2.4 -2 -3.4 -2 -5.6z" fill="#ffe98a" stroke="#8a6a10" stroke-width="1"/><path d="M1839 477m-2 4.6h4v2.2l-1 1h-2l-1 -1z" fill="#e8c860" stroke="#8a6a10" stroke-width="0.9"/><path d="M1862.0 477.5v-3a3 3 0 0 1 6 0v1.6" fill="none" stroke="#222" stroke-width="1.3"/><rect x="1855.0" y="477.5" width="10" height="8" rx="1" fill="#f3d64e" stroke="#222" stroke-width="1"/><rect x="1875.8" y="471.3" width="13" height="13" fill="#000" stroke="#333" stroke-width="0.9"/><circle cx="1905" cy="478" r="8" fill="#f9f9fa"/><path d="M1839 501m-4.3 -2.2a4.3 4.3 0 1 1 8.6 0c0 2.2 -2 3.2 -2 5.6h-4.6c0 -2.4 -2 -3.4 -2 -5.6z" fill="#ffe98a" stroke="#8a6a10" stroke-width="1"/><path d="M1839 501m-2 4.6h4v2.2l-1 1h-2l-1 -1z" fill="#e8c860" stroke="#8a6a10" stroke-width="0.9"/><path d="M1862.0 501.5v-3a3 3 0 0 1 6 0v1.6" fill="none" stroke="#222" stroke-width="1.3"/><rect x="1855.0" y="501.5" width="10" height="8" rx="1" fill="#f3d64e" stroke="#222" stroke-width="1"/><rect x="1875.8" y="495.3" width="13" height="13" fill="#8c8c8c" stroke="#333" stroke-width="0.9"/><circle cx="1905" cy="502" r="8" fill="#f9f9fa"/><path d="M1839 525m-4.3 -2.2a4.3 4.3 0 1 1 8.6 0c0 2.2 -2 3.2 -2 5.6h-4.6c0 -2.4 -2 -3.4 -2 -5.6z" fill="#ffe98a" stroke="#8a6a10" stroke-width="1"/><path d="M1839 525m-2 4.6h4v2.2l-1 1h-2l-1 -1z" fill="#e8c860" stroke="#8a6a10" stroke-width="0.9"/><path d="M1862.0 525.5v-3a3 3 0 0 1 6 0v1.6" fill="none" stroke="#222" stroke-width="1.3"/><rect x="1855.0" y="525.5" width="10" height="8" rx="1" fill="#f3d64e" stroke="#222" stroke-width="1"/><rect x="1875.8" y="519.3" width="13" height="13" fill="#8c8c8c" stroke="#333" stroke-width="0.9"/><circle cx="1905" cy="526" r="8" fill="#f9f9fa"/><path d="M1839 549m-4.3 -2.2a4.3 4.3 0 1 1 8.6 0c0 2.2 -2 3.2 -2 5.6h-4.6c0 -2.4 -2 -3.4 -2 -5.6z" fill="#ffe98a" stroke="#8a6a10" stroke-width="1"/><path d="M1839 549m-2 4.6h4v2.2l-1 1h-2l-1 -1z" fill="#e8c860" stroke="#8a6a10" stroke-width="0.9"/><path d="M1862.0 549.5v-3a3 3 0 0 1 6 0v1.6" fill="none" stroke="#222" stroke-width="1.3"/><rect x="1855.0" y="549.5" width="10" height="8" rx="1" fill="#f3d64e" stroke="#222" stroke-width="1"/><rect x="1875.8" y="543.3" width="13" height="13" fill="#000" stroke="#333" stroke-width="0.9"/><circle cx="1905" cy="550" r="8" fill="#f9f9fa"/><path d="M1839 573m-4.3 -2.2a4.3 4.3 0 1 1 8.6 0c0 2.2 -2 3.2 -2 5.6h-4.6c0 -2.4 -2 -3.4 -2 -5.6z" fill="#ffe98a" stroke="#8a6a10" stroke-width="1"/><path d="M1839 573m-2 4.6h4v2.2l-1 1h-2l-1 -1z" fill="#e8c860" stroke="#8a6a10" stroke-width="0.9"/><path d="M1862.0 573.5v-3a3 3 0 0 1 6 0v1.6" fill="none" stroke="#222" stroke-width="1.3"/><rect x="1855.0" y="573.5" width="10" height="8" rx="1" fill="#f3d64e" stroke="#222" stroke-width="1"/><rect x="1875.8" y="567.3" width="13" height="13" fill="#000" stroke="#333" stroke-width="0.9"/><circle cx="1905" cy="574" r="8" fill="#f9f9fa"/><path d="M1811.5 406.5l4.5 4.5l9 -9.5" fill="none" stroke="#111" stroke-width="1.6"/><path d="M1738.5 475.5l4.5 4.5l4.5 -4.5" fill="none" stroke="#222" stroke-width="1.4"/><path d="M1758.5 499.5l4.5 4.5l4.5 -4.5" fill="none" stroke="#222" stroke-width="1.4"/><path d="M1758.5 547.5l4.5 4.5l4.5 -4.5" fill="none" stroke="#222" stroke-width="1.4"/></svg>
<div class="r" style="left:1914px;top:297px;width:4px;height:664px;background:#f4f5f8;"></div>
<svg class="r" style="left:1724px;top:220px" width="195" height="70" viewBox="1724 220 195 70"><path d="M1738.67 230.21A6.6 6.6 0 0 1 1743.14 231.66" stroke="#ff0000" stroke-width="3.6" fill="none"/><path d="M1742.61 231.27A6.6 6.6 0 0 1 1745.37 235.08" stroke="#ff8000" stroke-width="3.6" fill="none"/><path d="M1745.17 234.45A6.6 6.6 0 0 1 1745.17 239.15" stroke="#ffe000" stroke-width="3.6" fill="none"/><path d="M1745.37 238.52A6.6 6.6 0 0 1 1742.61 242.33" stroke="#60d000" stroke-width="3.6" fill="none"/><path d="M1743.14 241.94A6.6 6.6 0 0 1 1738.67 243.39" stroke="#00c060" stroke-width="3.6" fill="none"/><path d="M1739.33 243.39A6.6 6.6 0 0 1 1734.86 241.94" stroke="#00c8d8" stroke-width="3.6" fill="none"/><path d="M1735.39 242.33A6.6 6.6 0 0 1 1732.63 238.52" stroke="#0060ff" stroke-width="3.6" fill="none"/><path d="M1732.83 239.15A6.6 6.6 0 0 1 1732.83 234.45" stroke="#5000e0" stroke-width="3.6" fill="none"/><path d="M1732.63 235.08A6.6 6.6 0 0 1 1735.39 231.27" stroke="#b000c0" stroke-width="3.6" fill="none"/><path d="M1734.86 231.66A6.6 6.6 0 0 1 1739.33 230.21" stroke="#e00060" stroke-width="3.6" fill="none"/><circle cx="1739" cy="236.8" r="8.4" fill="none" stroke="#222" stroke-width="0.9"/><circle cx="1739" cy="236.8" r="4.8" fill="#fafafa" stroke="#444" stroke-width="0.7"/><path d="M1756.3 227.5L1763.8 237.0L1763.8 240.1L1756.3 231.8Z" fill="#ff5500"/><path d="M1756.3 231.8L1763.8 240.1L1763.9 243.0L1756.3 234.8Z" fill="#ffffff"/><path d="M1756.3 234.8L1763.9 243.0L1763.9 246.5L1756.3 237.3Z" fill="#7090ff"/><path d="M1763.8 237.0Q1770.5 236.0 1774.6 231.5L1774.7 235.9Q1770.5 239.5 1763.8 240.1Z" fill="#d80000"/><path d="M1763.8 240.1Q1770.5 239.5 1774.7 235.9L1774.8 238.8Q1770.5 242.3 1763.9 243.0Z" fill="#d6d6d0"/><path d="M1763.9 243.0Q1770.5 242.3 1774.8 238.8L1774.8 241.2Q1770.5 245.0 1763.9 246.5Z" fill="#102088"/><path d="M1756.3 227.5L1774.6 231.5Q1770.5 236.0 1763.8 237.0Z" fill="#ff8c5a"/><path d="M1756.3 227.5L1774.6 231.5L1774.8 241.2Q1770.5 245.0 1763.9 246.5L1756.3 237.3Z" fill="none" stroke="#111" stroke-width="1.1" stroke-linejoin="round"/><ellipse cx="1794" cy="244" rx="8" ry="2.5" fill="#b9bcc6"/><circle cx="1791.6" cy="238.3" r="7.7" fill="url(#gbs)"/><ellipse cx="1788.5" cy="234.5" rx="2.4" ry="1.5" transform="rotate(-30 1788.5 234.5)" fill="#dbe6ff"/><path d="M1793 232l4.500 -4h4.500l2.500 -1v5l-2.500 -0.400l-3 2.600z" fill="#f4f4f4" stroke="#333" stroke-width="0.700"/><rect x="1802.500" y="226.800" width="1.800" height="5.400" fill="#111"/><path d="M1813 240.500l2 -3.500l7.500 -6.500l3 -2.500l2 1.500l-1 3.500l-8.500 9l-3.500 2.500z" fill="#f4f4f4" stroke="#222" stroke-width="0.900"/><path d="M1819.500 233l3.200 -2.800l3.200 3.800l-3 3.200z" fill="#f0601a"/><path d="M1839.500 242.500v-10.500h1.500l1.500 -1.500h5l1.500 1.500h4v3" fill="#f5c518" stroke="#5a4300" stroke-width="0.900"/><path d="M1839.500 242.800l3.500 -8h13.500l-3.500 8z" fill="url(#gyl)" stroke="#5a4300" stroke-width="0.900"/><rect x="1867.500" y="228.800" width="17" height="16.500" fill="#f6f6f6" stroke="#111" stroke-width="1"/><rect x="1868" y="229.300" width="16" height="1.800" fill="#4a5ad0"/><path d="M1869.500 244.800v-4a6.500 6.500 0 0 1 13 0v4z" fill="#3f55c8"/><text x="1876" y="243.500" text-anchor="middle" font-family="Liberation Serif, serif" font-weight="bold" font-size="11" fill="#fff">?</text><circle cx="1910" cy="239" r="6.800" fill="none" stroke="#ccd2e6" stroke-width="3" stroke-dasharray="3 2.340"/><circle cx="1910" cy="239" r="5.600" fill="none" stroke="#ccd2e6" stroke-width="1.400"/><circle cx="1910" cy="239" r="1.900" fill="none" stroke="#ccd2e6" stroke-width="1.100"/><path d="M1742.500 265.500h8l4 4v12.500h-12z" fill="url(#gpg)" stroke="#111" stroke-width="1.100"/><path d="M1750.500 265.500v4h4" fill="#fff" stroke="#111" stroke-width="0.800"/><path d="M1766.500 265.800h6l3 3v8.500h-9z" fill="#c6c6c6" stroke="#b0b0b0" stroke-width="0.800"/><path d="M1771.500 270.800h6l3 3v8.500h-9z" fill="#c6c6c6" stroke="#b0b0b0" stroke-width="0.800"/><path d="M1791.500 266l17 16.500M1808.500 266l-17 16.500" stroke="#bcbcbc" stroke-width="1.900"/><path d="M1826.200 268.800l8.200 9.500h-16.400z" fill="#c2c2c2" stroke="#b4b4b4" stroke-width="0.800" stroke-linejoin="round"/><path d="M1851.800 278.600l8.200 -9.500h-16.400z" fill="#c2c2c2" stroke="#b4b4b4" stroke-width="0.800" stroke-linejoin="round"/><path d="M1872.500 274l11 -8.700v17.400z" fill="#aaaaaa" stroke="#9c9c9c" stroke-width="0.800" stroke-linejoin="round"/><path d="M1896 266.500q7.500 -2 14.500 0l-5.500 7.500v7.500q-1.800 1.200 -3.500 0v-7.500z" fill="url(#gbl2)" stroke="#2a3a9a" stroke-width="0.800"/><ellipse cx="1903.250" cy="266.600" rx="7" ry="1.500" fill="#3a52c8"/><path d="M1914 284v-5l-5 5z" fill="#111"/></svg>
<span class="t" style="left:78.0px;top:942px;font-size:15px;letter-spacing:-0.438px;color:#333;">Perspective</span>
<span class="t" style="left:174.0px;top:942px;font-size:15px;letter-spacing:0.556px;color:#333;">Top</span>
<span class="t" style="left:223.0px;top:942px;font-size:15px;letter-spacing:-0.254px;color:#333;">Front</span>
<span class="t" style="left:278.0px;top:942px;font-size:15px;letter-spacing:-0.130px;color:#333;">Right</span>
<span class="t" style="left:335.0px;top:942px;font-size:15px;letter-spacing:-0.065px;color:#333;">Chair technical drawing</span>
<svg class="r" style="left:190px;top:937px" width="76" height="30" viewBox="0 0 76 30"><path d="M4.300 2.300L27 26Q28.500 27.500 31 27.500H69.500Q72.500 27.500 72.500 24.500V2.500" fill="none" stroke="#bcc6e0" stroke-width="1"/></svg>
<svg class="r" style="left:512px;top:946px" width="13" height="13" viewBox="0 0 13 13"><path d="M5.5 1.5h2v4h4v2h-4v4h-2v-4h-4v-2h4z" fill="#f4f5f8" stroke="#8d909a" stroke-width="0.9"/></svg>
<div class="r" style="left:4px;top:972px;width:1px;height:24px;background:#c5cbdc;"></div>
<div class="r" style="left:6px;top:972px;width:1px;height:24px;background:#c5cbdc;"></div>
<div class="r" style="left:12px;top:977.5px;width:15px;height:15px;border:1px solid #5a5a5e;border-radius:3.5px;box-sizing:border-box;background:#f6f7fa"></div>
<span class="t" style="left:32.5px;top:976px;font-size:13.9px;letter-spacing:-0.616px;color:#2b2b2b;">End</span>
<div class="r" style="left:65px;top:977.5px;width:15px;height:15px;border:1px solid #5a5a5e;border-radius:3.5px;box-sizing:border-box;background:#f6f7fa"></div>
<span class="t" style="left:85.5px;top:976px;font-size:15px;letter-spacing:-0.505px;color:#2b2b2b;">Near</span>
<div class="r" style="left:125px;top:977.5px;width:15px;height:15px;border:1px solid #5a5a5e;border-radius:3.5px;box-sizing:border-box;background:#f6f7fa"></div>
<span class="t" style="left:145.7px;top:976px;font-size:15px;letter-spacing:-0.598px;color:#2b2b2b;">Point</span>
<div class="r" style="left:187px;top:977.5px;width:15px;height:15px;border:1px solid #5a5a5e;border-radius:3.5px;box-sizing:border-box;background:#f6f7fa"></div>
<span class="t" style="left:207.5px;top:976px;font-size:15px;letter-spacing:0.414px;color:#2b2b2b;">Mid</span>
<div class="r" style="left:241px;top:977.5px;width:15px;height:15px;border:1px solid #5a5a5e;border-radius:3.5px;box-sizing:border-box;background:#f6f7fa"></div>
<span class="t" style="left:261.0px;top:977px;font-size:13.7px;letter-spacing:-0.567px;color:#2b2b2b;">Cen</span>
<div class="r" style="left:294px;top:977.5px;width:15px;height:15px;border:1px solid #5a5a5e;border-radius:3.5px;box-sizing:border-box;background:#f6f7fa"></div>
<span class="t" style="left:314.3px;top:976px;font-size:15px;letter-spacing:-0.240px;color:#2b2b2b;">Int</span>
<div class="r" style="left:339px;top:977.5px;width:15px;height:15px;border:1px solid #5a5a5e;border-radius:3.5px;box-sizing:border-box;background:#f6f7fa"></div>
<span class="t" style="left:359.5px;top:976px;font-size:14.6px;letter-spacing:-0.579px;color:#2b2b2b;">Perp</span>
<div class="r" style="left:397px;top:977.5px;width:15px;height:15px;border:1px solid #5a5a5e;border-radius:3.5px;box-sizing:border-box;background:#f6f7fa"></div>
<span class="t" style="left:417.0px;top:977px;font-size:13.7px;letter-spacing:-0.546px;color:#2b2b2b;">Tan</span>
<div class="r" style="left:449px;top:977.5px;width:15px;height:15px;border:1px solid #5a5a5e;border-radius:3.5px;box-sizing:border-box;background:#f6f7fa"></div>
<span class="t" style="left:469.0px;top:976px;font-size:15px;letter-spacing:-0.566px;color:#2b2b2b;">Quad</span>
<div class="r" style="left:513.3px;top:977.5px;width:15px;height:15px;border:1px solid #5a5a5e;border-radius:3.5px;box-sizing:border-box;background:#f6f7fa"></div>
<span class="t" style="left:534.0px;top:976px;font-size:15px;letter-spacing:-0.353px;color:#2b2b2b;">Knot</span>
<div class="r" style="left:572px;top:977.5px;width:15px;height:15px;border:1px solid #5a5a5e;border-radius:3.5px;box-sizing:border-box;background:#f6f7fa"></div>
<span class="t" style="left:592.5px;top:976px;font-size:15px;letter-spacing:-0.505px;color:#2b2b2b;">Vertex</span>
<div class="r" style="left:643.3px;top:978px;width:13.5px;height:13.5px;border:1px solid #d9dbe1;border-radius:3.5px;box-sizing:border-box;background:#fdfdfe"></div>
<span class="t" style="left:662.0px;top:976px;font-size:15px;letter-spacing:-0.115px;color:#2b2b2b;">Project</span>
<div class="r" style="left:728.3px;top:978px;width:13.5px;height:13.5px;border:1px solid #d9dbe1;border-radius:3.5px;box-sizing:border-box;background:#fdfdfe"></div>
<span class="t" style="left:747.5px;top:976px;font-size:15px;letter-spacing:-0.205px;color:#2b2b2b;">Disable</span>
<div class="r" style="left:0px;top:998px;width:1919px;height:1px;background:#c3cde6;"></div>
<div class="r" style="left:59.0px;top:999px;width:1.0px;height:19px;background:#c3cde6;"></div>
<div class="r" style="left:166.5px;top:999px;width:1.0px;height:19px;background:#c3cde6;"></div>
<div class="r" style="left:274.5px;top:999px;width:1.0px;height:19px;background:#c3cde6;"></div>
<div class="r" style="left:382.5px;top:999px;width:1.0px;height:19px;background:#c3cde6;"></div>
<div class="r" style="left:490.5px;top:999px;width:1.0px;height:19px;background:#c3cde6;"></div>
<div class="r" style="left:699.0px;top:999px;width:1.0px;height:19px;background:#c3cde6;"></div>
<div class="r" style="left:779.5px;top:999px;width:1.0px;height:19px;background:#c3cde6;"></div>
<div class="r" style="left:833.5px;top:999px;width:1.0px;height:19px;background:#c3cde6;"></div>
<div class="r" style="left:890.5px;top:999px;width:1.0px;height:19px;background:#c3cde6;"></div>
<div class="r" style="left:948.5px;top:999px;width:1.0px;height:19px;background:#c3cde6;"></div>
<div class="r" style="left:1039.0px;top:999px;width:1.0px;height:19px;background:#c3cde6;"></div>
<div class="r" style="left:1110.5px;top:999px;width:1.0px;height:19px;background:#c3cde6;"></div>
<div class="r" style="left:1225.0px;top:999px;width:1.0px;height:19px;background:#c3cde6;"></div>
<div class="r" style="left:1273.5px;top:999px;width:1.0px;height:19px;background:#c3cde6;"></div>
<div class="r" style="left:1911.5px;top:999px;width:1.0px;height:19px;background:#c3cde6;"></div>
<div class="r" style="left:950px;top:999px;width:89px;height:19px;background:#cdd6ef;"></div>
<span class="t" style="left:7.0px;top:1001px;font-size:14.6px;letter-spacing:-0.577px;color:#2b2b2b;">CPlane</span>
<span class="t" style="left:83.0px;top:1001px;font-size:15px;letter-spacing:-0.487px;color:#2b2b2b;">x 1427.79</span>
<span class="t" style="left:191.0px;top:1001px;font-size:15px;letter-spacing:-0.525px;color:#2b2b2b;">y 3386.68</span>
<span class="t" style="left:320.0px;top:1001px;font-size:15px;letter-spacing:-0.506px;color:#2b2b2b;">z 0</span>
<span class="t" style="left:401.0px;top:1001px;font-size:15px;letter-spacing:0.203px;color:#2b2b2b;">Millimeters</span>
<span class="t" style="left:513.0px;top:1001px;font-size:14.7px;letter-spacing:-0.601px;color:#2b2b2b;">Cussion</span>
<span class="t" style="left:708.0px;top:1001px;font-size:15px;letter-spacing:-0.443px;color:#2b2b2b;">Grid Snap</span>
<span class="t" style="left:789.0px;top:1001px;font-size:15px;letter-spacing:-0.005px;color:#2b2b2b;">Ortho</span>
<span class="t" style="left:843.0px;top:1001px;font-size:15px;letter-spacing:-0.573px;color:#2b2b2b;">Planar</span>
<span class="t" style="left:900.0px;top:1001px;font-size:14.8px;letter-spacing:-0.576px;color:#2b2b2b;">Osnap</span>
<span class="t" style="left:1048.0px;top:1001px;font-size:15px;letter-spacing:-0.060px;color:#2b2b2b;">Gumball</span>
<span class="t" style="left:1120.0px;top:1001px;font-size:15px;letter-spacing:-0.115px;color:#2b2b2b;">Record History</span>
<span class="t" style="left:1234.0px;top:1001px;font-size:15px;letter-spacing:-0.067px;color:#2b2b2b;">Filter</span>
<span class="t" style="left:1277.0px;top:1001px;font-size:15px;letter-spacing:-0.105px;color:#2b2b2b;">Available physical memory: 700 MB</span>
<span class="t" style="left:955.0px;top:1001px;font-size:15px;letter-spacing:-0.302px;color:#1f1f1f;font-weight:bold;">SmartTrack</span>
<div class="r" style="left:496.5px;top:1003px;width:13.5px;height:14px;background:#0000ff;border:1px solid #222;box-sizing:border-box;"></div>
<svg class="r" style="left:0;top:150px" width="940" height="40" viewBox="0 150 940 40"><defs>
<linearGradient id="gpg" x1="0" y1="0" x2="1" y2="1"><stop offset="0" stop-color="#ffffff"/><stop offset="1" stop-color="#d2d2d2"/></linearGradient>
<linearGradient id="gyl" x1="0" y1="0" x2="0" y2="1"><stop offset="0" stop-color="#fff2a0"/><stop offset="1" stop-color="#f0b400"/></linearGradient>
<radialGradient id="ggs" cx="0.36" cy="0.28" r="0.8"><stop offset="0" stop-color="#ffffff"/><stop offset="0.35" stop-color="#c4c4c4"/><stop offset="0.75" stop-color="#5a5a5a"/><stop offset="1" stop-color="#1e1e1e"/></radialGradient>
<radialGradient id="gbs" cx="0.35" cy="0.3" r="0.8"><stop offset="0" stop-color="#7fa8ff"/><stop offset="0.35" stop-color="#1f4fd8"/><stop offset="1" stop-color="#021060"/></radialGradient>
<radialGradient id="ghs" cx="0.4" cy="0.3" r="0.8"><stop offset="0" stop-color="#8ea2ee"/><stop offset="0.5" stop-color="#3f55c8"/><stop offset="1" stop-color="#1c2a88"/></radialGradient>
<radialGradient id="ggh" cx="0.4" cy="0.35" r="0.75"><stop offset="0" stop-color="#d6efc0"/><stop offset="0.6" stop-color="#a7d28a"/><stop offset="1" stop-color="#5b7a4a"/></radialGradient>
<linearGradient id="gbulb" x1="0" y1="0" x2="1" y2="1"><stop offset="0" stop-color="#f4f4f4"/><stop offset="1" stop-color="#8c8c8c"/></linearGradient>
<linearGradient id="gbl" x1="0" y1="0" x2="1" y2="1"><stop offset="0" stop-color="#b8c8ff"/><stop offset="1" stop-color="#4868e0"/></linearGradient>
<linearGradient id="gbl2" x1="0" y1="0" x2="0" y2="1"><stop offset="0" stop-color="#9db4ff"/><stop offset="1" stop-color="#3f5fd8"/></linearGradient>
<linearGradient id="gor" x1="0" y1="0" x2="1" y2="1"><stop offset="0" stop-color="#ffd24a"/><stop offset="1" stop-color="#f08a00"/></linearGradient>
</defs><path d="M15.500 156.500h9.500l4.500 4.500v14.500h-14z" fill="url(#gpg)" stroke="#111" stroke-width="1.100"/><path d="M25 156.500v4.500h4.500" fill="#fff" stroke="#111" stroke-width="0.9"/><path d="M41.5 173v-12.5h2l1.5 -1.5h6l1.5 1.5h5v3.5" fill="#f5c518" stroke="#5a4300" stroke-width="1"/><path d="M41.5 173.3l4 -9.3h16l-4 9.3z" fill="url(#gyl)" stroke="#5a4300" stroke-width="1"/><path d="M69.5 157.5q0 -1 1 -1h16.5q1 0 1 1v17q0 1 -1 1h-15.5l-2 -2z" fill="#d9c56a" stroke="#4d4210" stroke-width="1.1"/><rect x="72.5" y="157" width="12.5" height="8" fill="#e6e6e6" stroke="#8a8a8a" stroke-width="0.6"/><rect x="73.5" y="168" width="10.5" height="7" fill="#9a9a9a" stroke="#4d4210" stroke-width="0.6"/><rect x="75" y="169.3" width="2.6" height="4.6" fill="#8a7418"/><path d="M92 178.5v-5.5l-5.5 5.5z" fill="#5f5f5f"/><path d="M99.5 164l3 -7.5h9.5l-2 7.5z" fill="#fbfbfb" stroke="#222" stroke-width="0.9"/><rect x="104.5" y="159" width="3" height="2.8" fill="#9a9a9a"/><path d="M96.5 166.5q0 -2 2 -2.2h11l5 -2.3q2 0 2 2v6.5l-5.5 4.5h-14.500z" fill="#f0f0f0" stroke="#111" stroke-width="1.1"/><path d="M110.5 165.5l5.500 -2.5v6l-5.500 4.500z" fill="#3a3a3a"/><path d="M96.5 168.5h14M96.5 171.500h14" stroke="#111" stroke-width="1.3"/><path d="M97 175h13.500l5 -4" fill="none" stroke="#111" stroke-width="1.2"/><path d="M127.5 157.500h14.500v14l-4.500 4h-10z" fill="url(#gpg)" stroke="#111" stroke-width="1.1"/><path d="M137.500 175.500v-4h4.500" fill="#fff" stroke="#111" stroke-width="0.8"/><path d="M133 159.500l5 -4.500h6l3 -1v6l-3 -0.500l-3.500 3.500h-5z" fill="#e8e8e8" stroke="#333" stroke-width="0.8"/><path d="M134 160l4 -3.500M135.500 161l4 -3.500M137 162l4 -3.500" stroke="#555" stroke-width="0.7"/><rect x="144.500" y="154" width="2.200" height="6.500" fill="#111"/><path d="M157.800 158l7.400 12.500M168.500 158l-7.600 12.500" stroke="#111" stroke-width="1.200"/><ellipse cx="158.800" cy="172.500" rx="1.800" ry="2.800" transform="rotate(30 158.800 172.500)" fill="none" stroke="#7d8ea8" stroke-width="0.900"/><ellipse cx="167.500" cy="172.500" rx="1.800" ry="2.800" transform="rotate(-30 167.500 172.500)" fill="none" stroke="#7d8ea8" stroke-width="0.900"/><path d="M184 156.500h6.500l3.500 3.500v10h-10z" fill="url(#gpg)" stroke="#111" stroke-width="1"/><path d="M188.500 161.500h6.500l3.500 3.500v10.500h-10z" fill="url(#gpg)" stroke="#111" stroke-width="1"/><path d="M195 161.500v3.500h3.500" fill="#fff" stroke="#111" stroke-width="0.700"/><rect x="212" y="157.500" width="14" height="17.500" rx="2" fill="#f7ec8c" stroke="#3a3410" stroke-width="1.100"/><path d="M215.500 157.500q0 -1.500 1.500 -1.500h4q1.500 0 1.500 1.500v1.500h-7z" fill="#d8d8d8" stroke="#333" stroke-width="0.800"/><path d="M243.5 166.5q6 -5.500 12 1.500" fill="none" stroke="#111" stroke-width="2.600"/><path d="M250 163.300q3.500 0.800 5.800 4.200" fill="none" stroke="#6a6a6a" stroke-width="2.400"/><path d="M237.300 169.800l5.200 -7.600l3.600 6.600z" fill="#111"/><path d="M260 178.5v-5.5l-5.5 5.5z" fill="#5f5f5f"/><path d="M269.500 176l-4.500 -9.500q-1.500 -2.500 0.500 -3t3.500 3.500l-0.500 -8.500q0 -2 1.500 -2t1.800 2l0.700 -2.500q0.200 -1.500 1.700 -1.500t1.600 1.800l0.400 2q0.300 -1.500 1.600 -1.300t1.500 2l0.200 3q0.400 -1.400 1.500 -1.200t1.200 2.200l-0.500 6.500l-2 6.500z" fill="#f3f3f3" stroke="#111" stroke-width="0.900"/><path d="M271.800 158.500l0.500 6M275.800 158.500v6M279.200 160l-0.200 5" stroke="#111" stroke-width="0.700"/><ellipse cx="303" cy="165.500" rx="10.500" ry="3.500" fill="none" stroke="#555" stroke-width="0.700"/><ellipse cx="303" cy="166" rx="3.500" ry="10.500" fill="none" stroke="#555" stroke-width="0.700"/><path d="M306 161.500l-2 3h4zM298 168.500l3.500 -2v4zM303.500 172l2 -3h-4z" fill="#111"/><path d="M329.3 167.7L323.5 173.5" stroke="#111" stroke-width="2" stroke-linecap="round"/><circle cx="333.5" cy="163.5" r="6" fill="#f4f4f4" stroke="#222" stroke-width="1.1"/><path d="M331 162h5M333.500 159.800v4.400M331 166.300h5" stroke="#111" stroke-width="0.900"/><rect x="353.500" y="156.500" width="14.500" height="12.500" fill="none" stroke="#111" stroke-width="1.100" stroke-dasharray="2 1.500"/><path d="M353.3 170.7L349.5 174.5" stroke="#111" stroke-width="2" stroke-linecap="round"/><circle cx="357.5" cy="166.5" r="6" fill="#f0f0f2" stroke="#222" stroke-width="1.1"/><path d="M354.500 169.500h6" stroke="#777" stroke-width="0.800" stroke-dasharray="1.500 1.500"/><path d="M377 156.500h4.500l-4.500 4.500zM397 156.500v4.500l-4.500 -4.500zM377 176v-4.500l4.500 4.500zM397 176h-4.500l4.500 -4.500z" fill="#111"/><path d="M384.0 168.7L379 174" stroke="#111" stroke-width="2" stroke-linecap="round"/><circle cx="388.5" cy="164" r="6.5" fill="#f4f4f4" stroke="#222" stroke-width="1.1"/><path d="M411.3 169.9L407 174.5" stroke="#111" stroke-width="2" stroke-linecap="round"/><circle cx="416.5" cy="164.5" r="7.5" fill="#f6f6f6" stroke="#222" stroke-width="1.1"/><circle cx="418.500" cy="162.500" r="2.800" fill="#f5e11a" stroke="#8a7a00" stroke-width="0.500"/><circle cx="415.500" cy="166.500" r="2.800" fill="#f5e11a" stroke="#8a7a00" stroke-width="0.500"/><path d="M439.500 161.500q6.500 -4.500 12 0.500" fill="none" stroke="#111" stroke-width="2.600"/><path d="M446 159.500q3.500 0.300 5.800 2.700" fill="none" stroke="#6a6a6a" stroke-width="2.400"/><path d="M433.300 164.800l5.200 -7.600l3.600 6.600z" fill="#111"/><path d="M439.8 172.7L437 175.5" stroke="#111" stroke-width="2" stroke-linecap="round"/><circle cx="443" cy="169.5" r="4.5" fill="#f4f4f4" stroke="#222" stroke-width="1.1"/><path d="M456 178.5v-5.5l-5.5 5.5z" fill="#5f5f5f"/><rect x="460.500" y="156.500" width="20" height="18" fill="#c9c9c9" stroke="#111" stroke-width="1.300"/><path d="M470.500 156.500v18M460.500 165.500h20" stroke="#111" stroke-width="1.300"/><rect x="471.500" y="157.300" width="4" height="1" fill="#2233cc"/><path d="M484 178.5v-5.5l-5.5 5.5z" fill="#5f5f5f"/><path d="M488.500 170.500h21.500" stroke="#999" stroke-width="0.800"/><path d="M489.500 168.500v-3q0 -1.500 2 -1.800l5 -0.700l1.500 -2.500h8l1.500 2.700q2.500 0.300 2.500 2.300v3z" fill="#e60000" stroke="#a00000" stroke-width="0.600"/><path d="M498.800 161.500h2.700v2h-3.700zM502.500 161.500h3l1 2h-4z" fill="#ffd0d0"/><circle cx="493.500" cy="168.500" r="2" fill="#111"/><circle cx="504.500" cy="168.500" r="2" fill="#111"/><circle cx="493.500" cy="168.500" r="0.800" fill="#ddd"/><circle cx="504.500" cy="168.500" r="0.800" fill="#ddd"/><path d="M512 178.5v-5.5l-5.5 5.5z" fill="#5f5f5f"/><g stroke="#8a8a8a" stroke-width="0.600" fill="none"><path d="M516.500 170.500l8 -9.500l13.500 4.500l-7.500 10.500z"/><path d="M519.200 167.300l13.800 5.200M521.800 164.200l13.700 4.800M528.500 162.500l-7.500 9.800M533 164l-7.500 10.300"/></g><path d="M527 168l3 -5" stroke="#0a9a0a" stroke-width="1.400"/><path d="M527 168l5.500 2" stroke="#e01010" stroke-width="1.400"/><rect x="525.300" y="166.300" width="3.400" height="3.400" fill="#fff" stroke="#111" stroke-width="1"/><path d="M540 178.5v-5.5l-5.5 5.5z" fill="#5f5f5f"/><circle cx="555" cy="166" r="8.500" fill="none" stroke="#555" stroke-width="0.800"/><path d="M555 166h10" stroke="#111" stroke-width="1"/><circle cx="555" cy="166" r="1.600" fill="#fff" stroke="#111" stroke-width="0.800"/><path d="M568 178.5v-5.5l-5.5 5.5z" fill="#5f5f5f"/><circle cx="579" cy="162.500" r="2.800" fill="#ffe200" stroke="#b06a1a" stroke-width="0.900"/><rect x="584.500" y="161.500" width="6" height="6" fill="#ffe200" stroke="#b06a1a" stroke-width="0.900"/><path d="M581.500 168.500l2.700 5h-5.400z" fill="#fff" stroke="#b06a1a" stroke-width="0.900"/><path d="M590 155.500h3.500v3.500M575.500 176.500h-3.500v-3.500" fill="none" stroke="#111" stroke-width="1.100"/><path d="M596 178.5v-5.5l-5.5 5.5z" fill="#5f5f5f"/><path d="M604 162.500a7 7 0 1 1 14 0c0 3.500 -3.200 5 -3.500 9h-7c-0.300 -4 -3.500 -5.500 -3.500 -9z" fill="url(#gbulb)" stroke="#666" stroke-width="0.800"/><path d="M607.800 171.500h6.400v2.500l-1.500 1.800h-3.400l-1.500 -1.800z" fill="#777" stroke="#444" stroke-width="0.600"/><path d="M624 178.5v-5.5l-5.5 5.5z" fill="#5f5f5f"/><path d="M635.500 164.500v-3a3.400 3.400 0 0 1 6.800 0v3" fill="none" stroke="#111" stroke-width="1.800"/><rect x="633.500" y="164" width="11" height="9.500" rx="1" fill="#c4c4c4" stroke="#111" stroke-width="1.100"/><path d="M635.500 166.800h7M635.500 169h7M635.500 171.200h7" stroke="#e8e8e8" stroke-width="0.900"/><path d="M652 178.5v-5.5l-5.5 5.5z" fill="#5f5f5f"/><path d="M657.0 157.5L664.5 167.0L664.6 170.1L657.0 161.8Z" fill="#ff5500"/><path d="M657.0 161.8L664.6 170.1L664.6 173.0L657.0 164.8Z" fill="#ffffff"/><path d="M657.0 164.8L664.6 173.0L664.6 176.5L657.0 167.3Z" fill="#7090ff"/><path d="M664.5 167.0Q671.2 166.0 675.3 161.5L675.4 165.9Q671.2 169.5 664.6 170.1Z" fill="#d80000"/><path d="M664.6 170.1Q671.2 169.5 675.4 165.9L675.5 168.8Q671.2 172.3 664.6 173.0Z" fill="#d6d6d0"/><path d="M664.6 173.0Q671.2 172.3 675.5 168.8L675.5 171.2Q671.2 175.0 664.6 176.5Z" fill="#102088"/><path d="M657.0 157.5L675.3 161.5Q671.2 166.0 664.5 167.0Z" fill="#ff8c5a"/><path d="M657.0 157.5L675.3 161.5L675.5 171.2Q671.2 175.0 664.6 176.5L657.0 167.3Z" fill="none" stroke="#111" stroke-width="1.1" stroke-linejoin="round"/><path d="M680 178.5v-5.5l-5.5 5.5z" fill="#5f5f5f"/><path d="M694.17 158.81A6.7 6.7 0 0 1 698.70 160.28" stroke="#ff0000" stroke-width="3.6" fill="none"/><path d="M698.16 159.89A6.7 6.7 0 0 1 700.97 163.75" stroke="#ff8000" stroke-width="3.6" fill="none"/><path d="M700.76 163.11A6.7 6.7 0 0 1 700.76 167.89" stroke="#ffe000" stroke-width="3.6" fill="none"/><path d="M700.97 167.25A6.7 6.7 0 0 1 698.16 171.11" stroke="#60d000" stroke-width="3.6" fill="none"/><path d="M698.70 170.72A6.7 6.7 0 0 1 694.17 172.19" stroke="#00c060" stroke-width="3.6" fill="none"/><path d="M694.83 172.19A6.7 6.7 0 0 1 690.30 170.72" stroke="#00c8d8" stroke-width="3.6" fill="none"/><path d="M690.84 171.11A6.7 6.7 0 0 1 688.03 167.25" stroke="#0060ff" stroke-width="3.6" fill="none"/><path d="M688.24 167.89A6.7 6.7 0 0 1 688.24 163.11" stroke="#5000e0" stroke-width="3.6" fill="none"/><path d="M688.03 163.75A6.7 6.7 0 0 1 690.84 159.89" stroke="#b000c0" stroke-width="3.6" fill="none"/><path d="M690.30 160.28A6.7 6.7 0 0 1 694.83 158.81" stroke="#e00060" stroke-width="3.6" fill="none"/><circle cx="694.5" cy="165.5" r="8.5" fill="none" stroke="#222" stroke-width="0.9"/><circle cx="694.5" cy="165.5" r="4.9" fill="#fafafa" stroke="#444" stroke-width="0.7"/><path d="M708 178.5v-5.5l-5.5 5.5z" fill="#5f5f5f"/><circle cx="723" cy="166" r="8.7" fill="url(#ggs)" stroke="#222" stroke-width="0.6"/><path d="M723 157.3V174.7M714.3 167Q723 170 731.7 167" fill="none" stroke="#333" stroke-width="1"/><rect x="740" y="155" width="23" height="22.500" fill="#d9dbe0"/><g stroke="#c2c4ca" stroke-width="0.600"><path d="M740 158.500h23M740 162.500h23M740 166.500h23M740 170.500h23M740 174.500h23M743.500 155v22.500M747.500 155v22.500M751.500 155v22.500M755.500 155v22.500M759.500 155v22.500"/></g><circle cx="751" cy="166" r="8.7" fill="url(#ggs)" stroke="#222" stroke-width="0.6"/><path d="M751 157.3V174.7M742.3 167Q751 170 759.7 167" fill="none" stroke="#333" stroke-width="1"/><path d="M764 178.5v-5.5l-5.5 5.5z" fill="#5f5f5f"/><ellipse cx="781" cy="174" rx="10" ry="3" fill="#c9ccd4"/><circle cx="779.300" cy="166" r="9" fill="url(#gbs)"/><ellipse cx="776" cy="161" rx="2.600" ry="1.600" transform="rotate(-30 776 161)" fill="#dbe6ff"/><path d="M792 178.5v-5.5l-5.5 5.5z" fill="#5f5f5f"/><ellipse cx="803" cy="168" rx="8" ry="7" fill="#f5f5f7"/><path d="M805 158.500l13 -3.500l-4 12.500z" fill="url(#gor)" stroke="#7a4a00" stroke-width="0.700"/><ellipse cx="808.800" cy="163.200" rx="2" ry="5.500" transform="rotate(-45 808.800 163.200)" fill="#fff6d8" stroke="#7a4a00" stroke-width="0.600"/><path d="M820 178.5v-5.5l-5.5 5.5z" fill="#5f5f5f"/><rect x="-2.200" y="-9.600" width="4.400" height="5" rx="0.800" transform="translate(835 166.800) rotate(22)" fill="#f6d860" stroke="#7a4a10" stroke-width="0.900"/><rect x="-2.200" y="-9.600" width="4.400" height="5" rx="0.800" transform="translate(835 166.800) rotate(67)" fill="#f6d860" stroke="#7a4a10" stroke-width="0.900"/><rect x="-2.200" y="-9.600" width="4.400" height="5" rx="0.800" transform="translate(835 166.800) rotate(112)" fill="#f6d860" stroke="#7a4a10" stroke-width="0.900"/><rect x="-2.200" y="-9.600" width="4.400" height="5" rx="0.800" transform="translate(835 166.800) rotate(157)" fill="#f6d860" stroke="#7a4a10" stroke-width="0.900"/><rect x="-2.200" y="-9.600" width="4.400" height="5" rx="0.800" transform="translate(835 166.800) rotate(202)" fill="#f6d860" stroke="#7a4a10" stroke-width="0.900"/><rect x="-2.200" y="-9.600" width="4.400" height="5" rx="0.800" transform="translate(835 166.800) rotate(247)" fill="#f6d860" stroke="#7a4a10" stroke-width="0.900"/><rect x="-2.200" y="-9.600" width="4.400" height="5" rx="0.800" transform="translate(835 166.800) rotate(292)" fill="#f6d860" stroke="#7a4a10" stroke-width="0.900"/><rect x="-2.200" y="-9.600" width="4.400" height="5" rx="0.800" transform="translate(835 166.800) rotate(337)" fill="#f6d860" stroke="#7a4a10" stroke-width="0.900"/><circle cx="835" cy="166.800" r="6.400" fill="#f6d860" stroke="#7a4a10" stroke-width="0.900"/><circle cx="835" cy="166.800" r="5.700" fill="#f6d860"/><rect x="831.800" y="159" width="6.400" height="9.300" rx="2.400" fill="#a8a8a8" stroke="#222" stroke-width="1"/><ellipse cx="835" cy="160.900" rx="3.200" ry="1.600" fill="#e8e8e8" stroke="#222" stroke-width="0.700"/><path d="M848 178.5v-5.5l-5.5 5.5z" fill="#5f5f5f"/><g stroke="#111" stroke-width="1" fill="none"><path d="M853 156.500h8M853 167.500h9M855 158v8M863 168.500v8M872.500 168.500v8M864.500 174.500h6.500"/></g><path d="M855 157.500l1.500 2.500h-3zM855 166.500l1.500 -2.500h-3zM864 174.500l2.500 -1.500v3zM871.500 174.500l-2.500 -1.500v3z" fill="#111"/><rect x="861" y="155.300" width="2.400" height="2.400" fill="#fff" stroke="#111" stroke-width="0.800"/><rect x="861.800" y="166.300" width="2.400" height="2.400" fill="#fff" stroke="#111" stroke-width="0.800"/><rect x="871.300" y="166.300" width="2.400" height="2.400" fill="#fff" stroke="#111" stroke-width="0.800"/><path d="M876 178.5v-5.5l-5.5 5.5z" fill="#5f5f5f"/><circle cx="890.500" cy="165.500" r="11.300" fill="url(#ggh)" stroke="#555" stroke-width="1"/><path d="M889 154.500l-1 10M888 164l12 -6M884 172l4 -5l4 1l3 4l5 1" stroke="#4a5a44" stroke-width="0.900" fill="none"/><path d="M881.500 172q3 -5 6.500 -7l2 -2l2.500 1.500l-1 3l3 3.500l-4 4.500q-5 1.500 -9 -3.500z" fill="#444a44"/><path d="M904 178.5v-5.5l-5.5 5.5z" fill="#5f5f5f"/><circle cx="919" cy="166" r="10" fill="url(#ghs)"/><text x="919" y="172.500" text-anchor="middle" font-family="Liberation Serif, serif" font-weight="bold" font-size="19" fill="#fff">?</text><path d="M932 178.5v-5.5l-5.5 5.5z" fill="#5f5f5f"/></svg><svg class="r" style="left:0;top:205px" width="60" height="510" viewBox="0 205 60 510"><path d="M10.500 213.500v12l2.800 -2.600l2 4.400l1.800 -0.800l-2 -4.300h3.800z" fill="#fff" stroke="#111" stroke-width="0.900"/><circle cx="42.4" cy="220.4" r="2" fill="#fff" stroke="#111" stroke-width="0.800"/><path d="M56 233.8v-5.500l-5.500 5.500z" fill="#5f5f5f"/><path d="M7.600 256.600l4.800 -13.300l10.300 10.100" fill="none" stroke="#333" stroke-width="0.800"/><circle cx="7.6" cy="256.6" r="1.3" fill="#fff" stroke="#111" stroke-width="0.800"/><circle cx="12.4" cy="243.3" r="1.3" fill="#fff" stroke="#111" stroke-width="0.800"/><circle cx="22.7" cy="253.4" r="1.3" fill="#fff" stroke="#111" stroke-width="0.800"/><path d="M28.2 261.5v-5.500l-5.500 5.500z" fill="#5f5f5f"/><path d="M35.100 242.800q7 -2 11.500 0.500t3.500 7t-6 5.500t-9 -1" fill="none" stroke="#333" stroke-width="0.800"/><rect x="33.70" y="241.40" width="2.8" height="2.8" fill="#fff" stroke="#111" stroke-width="0.900"/><rect x="47.70" y="238.40" width="2.8" height="2.8" fill="#fff" stroke="#111" stroke-width="0.900"/><rect x="33.70" y="253.40" width="2.8" height="2.8" fill="#fff" stroke="#111" stroke-width="0.900"/><rect x="49.50" y="255.60" width="2.8" height="2.8" fill="#fff" stroke="#111" stroke-width="0.900"/><path d="M56 261.5v-5.500l-5.500 5.500z" fill="#5f5f5f"/><circle cx="15.100" cy="276.600" r="9.800" fill="none" stroke="#444" stroke-width="0.800"/><path d="M15.100 276.600l6.500 -6" stroke="#111" stroke-width="0.900"/><circle cx="15.1" cy="276.6" r="1.3" fill="#fff" stroke="#111" stroke-width="0.800"/><circle cx="21.6" cy="270.6" r="1.3" fill="#fff" stroke="#111" stroke-width="0.800"/><path d="M28.2 289.5v-5.500l-5.500 5.500z" fill="#5f5f5f"/><ellipse cx="43.100" cy="276.800" rx="10.200" ry="6.700" fill="none" stroke="#444" stroke-width="0.800"/><path d="M43.100 269.700v7.100h8.900" stroke="#333" stroke-width="0.700" fill="none"/><rect x="41.70" y="268.30" width="2.8" height="2.8" fill="#fff" stroke="#111" stroke-width="0.900"/><rect x="41.70" y="275.40" width="2.8" height="2.8" fill="#fff" stroke="#111" stroke-width="0.900"/><rect x="50.60" y="275.40" width="2.8" height="2.8" fill="#fff" stroke="#111" stroke-width="0.900"/><path d="M56 289.5v-5.500l-5.500 5.500z" fill="#5f5f5f"/><path d="M8.300 296.500v17.200l15.100 -8.200" fill="none" stroke="#444" stroke-width="0.700"/><path d="M8.300 296.500q10 0.500 15.100 9" fill="none" stroke="#111" stroke-width="1"/><circle cx="8.3" cy="296.5" r="1.3" fill="#fff" stroke="#111" stroke-width="0.800"/><circle cx="23.4" cy="305.5" r="1.3" fill="#fff" stroke="#111" stroke-width="0.800"/><circle cx="8.3" cy="313.7" r="1.3" fill="#fff" stroke="#111" stroke-width="0.800"/><path d="M28.2 317.5v-5.500l-5.500 5.500z" fill="#5f5f5f"/><rect x="34.400" y="299.300" width="17.500" height="11.400" fill="none" stroke="#222" stroke-width="0.900"/><circle cx="51.7" cy="299.5" r="1.3" fill="#fff" stroke="#111" stroke-width="0.800"/><circle cx="34.5" cy="310.7" r="1.3" fill="#fff" stroke="#111" stroke-width="0.800"/><path d="M56 317.5v-5.500l-5.500 5.500z" fill="#5f5f5f"/><path d="M6.400 332.600l4.250 -7.300h8.500l4.250 7.300l-4.250 7.300h-8.500z" fill="none" stroke="#444" stroke-width="0.800"/><path d="M14.900 332.600h7.800" stroke="#111" stroke-width="0.900"/><circle cx="14.4" cy="332.6" r="1.3" fill="#fff" stroke="#111" stroke-width="0.800"/><circle cx="22.7" cy="332.6" r="1.3" fill="#fff" stroke="#111" stroke-width="0.800"/><path d="M28.2 345.5v-5.500l-5.500 5.500z" fill="#5f5f5f"/><path d="M36 326.100h15.500v13" fill="none" stroke="#aaa" stroke-width="0.700"/><path d="M35.100 326.100h4q11.500 0 11.800 11.500v3.600" fill="none" stroke="#111" stroke-width="1.700"/><rect x="33.70" y="324.70" width="2.8" height="2.8" fill="#fff" stroke="#111" stroke-width="0.900"/><rect x="49.50" y="339.80" width="2.8" height="2.8" fill="#fff" stroke="#111" stroke-width="0.900"/><path d="M56 345.5v-5.500l-5.500 5.500z" fill="#5f5f5f"/><path d="M11 353h12.100l-5.200 16.100l-11 -5.100z" fill="url(#gbl)" stroke="#222" stroke-width="0.700"/><path d="M17 353l-4.500 13.500M9 358.500l11.500 2.500" stroke="#2a3a9a" stroke-width="0.700"/><rect x="9.60" y="351.60" width="2.8" height="2.8" fill="#fff" stroke="#111" stroke-width="0.900"/><rect x="21.70" y="351.60" width="2.8" height="2.8" fill="#fff" stroke="#111" stroke-width="0.900"/><rect x="5.50" y="362.60" width="2.8" height="2.8" fill="#fff" stroke="#111" stroke-width="0.900"/><rect x="16.50" y="367.70" width="2.8" height="2.8" fill="#fff" stroke="#111" stroke-width="0.900"/><path d="M28.2 373.5v-5.500l-5.500 5.500z" fill="#5f5f5f"/><path d="M35 356.500l8 -4.500q8 2 9 10.500v6l-7.500 4.500v-6.500q-1.500 -7.500 -9.500 -10z" fill="url(#gbl)" stroke="#222" stroke-width="0.700"/><path d="M35 356.500l8 -4.500l4 2l-7 5zM44.500 366.500l7.500 -4v6l-7.500 4.500z" fill="#fff" stroke="#222" stroke-width="0.600"/><path d="M56 373.5v-5.500l-5.500 5.500z" fill="#5f5f5f"/><path d="M6.200 385l8.800 -5l7.700 4v10.500l-7.700 4.200l-8.800 -3.700z" fill="#6f8cf0" stroke="#1a2a70" stroke-width="0.600"/><path d="M6.200 385l8.800 -5l7.700 4l-7.700 4.500z" fill="#a9bcff"/><path d="M15 388.500l7.700 -4.500v10.500l-7.700 4.200z" fill="#3a56c8"/><path d="M28.2 401.5v-5.500l-5.500 5.500z" fill="#5f5f5f"/><circle cx="46.100" cy="384.900" r="7.300" fill="url(#gbl)" stroke="#1a2a70" stroke-width="0.700"/><path d="M40.500 381q6 5 12.500 6M44 378.500q-1 7 4 13" stroke="#1a2a70" stroke-width="0.700" fill="none"/><circle cx="39.200" cy="392.500" r="7.300" fill="url(#gbl)" stroke="#1a2a70" stroke-width="0.700"/><path d="M33 389q6 5 13 5.500M37 385.500q-1 7 4 13.500" stroke="#1a2a70" stroke-width="0.700" fill="none"/><path d="M56 401.5v-5.500l-5.500 5.500z" fill="#5f5f5f"/><ellipse cx="14.900" cy="409" rx="5.500" ry="2.400" fill="#fff" stroke="#222" stroke-width="0.800"/><path d="M4.100 415.200q11 4.500 21.800 0v9q-11 6.500 -21.800 0z" fill="url(#gbl2)" stroke="#1a2a70" stroke-width="0.700"/><ellipse cx="14.900" cy="422.500" rx="5.600" ry="2.600" fill="#8fa6ff" stroke="#fff" stroke-width="1.400"/><path d="M28.2 429.5v-5.500l-5.500 5.500z" fill="#5f5f5f"/><path d="M32.300 422q6 -6 9 -14.400q6 4 12.400 4.800q-5 7 -8.300 13.800q-6 -4 -13.100 -4.200z" fill="url(#gbl)" stroke="#1a2a70" stroke-width="0.700"/><path d="M36.800 414.500q6 3 12.500 4.500M37.500 424q5 -7 9.500 -14" stroke="#1a2a70" stroke-width="0.600" fill="none"/><path d="M56 429.5v-5.500l-5.500 5.500z" fill="#5f5f5f"/><path d="M6 438.500h3.500q-1.500 -3.500 1.500 -3.800t2 3.800h4v4q3.500 -1.500 3.800 1.500t-3.800 2v3.500h-4q1 3.500 -1.800 3.500t-1.700 -3.500h-3.500v-3.500q-3 1.500 -3.200 -1.700t3.200 -1.800z" fill="#ffab10" stroke="#222" stroke-width="0.800" transform="rotate(-20 12 444)"/><path d="M13 447.500h3.500q-1.500 -3.500 1.500 -3.800t2 3.800h4v4q3.500 -1.500 3.800 1.500t-3.800 2v3.500h-4q1 3.500 -1.800 3.500t-1.700 -3.500h-3.500v-3.500q-3 1.500 -3.200 -1.700t3.200 -1.800z" fill="#fff" stroke="#222" stroke-width="0.800" transform="rotate(-20 18 452) translate(1 -3.500)"/><path d="M31 457l3.500 -18.500l5 9.500l9.500 -11.500l-5 13.500l9 1l-10 3l3 3z" fill="url(#gor)" stroke="#222" stroke-width="0.600"/><path d="M34.500 438.500l5 9.500l9.500 -11.500" fill="none" stroke="#111" stroke-width="1.100"/><rect x="4.500" y="471.800" width="10.500" height="4.800" fill="#fff" stroke="#111" stroke-width="1"/><path d="M14.800 478l4 -3l4.500 5.500l-4 3z" fill="#fff" stroke="#222" stroke-width="0.800"/><path d="M13.800 463.300h6.800l-5.800 13.500h-1z" fill="#1a2a8a"/><rect x="33.800" y="472.500" width="18" height="4.800" fill="#fff" stroke="#111" stroke-width="1"/><path d="M43.300 464h6.200l-5.200 13.200h-1z" fill="#1a2a8a"/><circle cx="15.100" cy="498.100" r="5" fill="#111"/><circle cx="11.600" cy="503.600" r="5" fill="#111"/><circle cx="18.600" cy="503.200" r="5" fill="#111"/><circle cx="15.100" cy="498.100" r="3.300" fill="#9f9ff0"/><circle cx="11.600" cy="503.600" r="3.300" fill="#fff"/><circle cx="18.600" cy="503.200" r="3.300" fill="#1a1a90"/><path d="M28.2 513.5v-5.500l-5.500 5.500z" fill="#5f5f5f"/><circle cx="43.100" cy="496.700" r="3.400" fill="#9f9ff0" stroke="#7878c8" stroke-width="0.500"/><circle cx="37.800" cy="505" r="3.400" fill="#fff" stroke="#555" stroke-width="0.600"/><circle cx="48.200" cy="504.700" r="3.400" fill="#1a1a90"/><path d="M4.800 524.500q4 -1.500 7.500 0q6.500 3 7.700 9.400v4.800" fill="none" stroke="#111" stroke-width="1.400"/><rect x="8.60" y="522.50" width="2.6" height="2.6" fill="#fff" stroke="#111" stroke-width="0.900"/><rect x="18.70" y="532.60" width="2.6" height="2.6" fill="#fff" stroke="#111" stroke-width="0.900"/><path d="M32.300 525q13.500 -1.500 15.500 13.700" fill="none" stroke="#111" stroke-width="1.800"/><path d="M32.300 520.200h6q12 1 13.500 12v6.500" fill="none" stroke="#111" stroke-width="0.900" stroke-dasharray="1 1.300"/><rect x="38.50" y="518.40" width="2.8" height="2.8" fill="#fff" stroke="#111" stroke-width="0.900"/><rect x="50.50" y="530.80" width="2.8" height="2.8" fill="#fff" stroke="#111" stroke-width="0.900"/><path d="M56 541.5v-5.500l-5.500 5.500z" fill="#5f5f5f"/><path d="M6.200 547.500l16 2.500v4.500l-2 -0.300l-1 -1.700h-2.500l-0.500 12l2 2.500l-7 -1l1.500 -2l0.300 -12.500l-3.300 -0.500l-1.500 1.500l-2 -0.500z" fill="url(#gbl2)" stroke="#1a2a80" stroke-width="0.700"/><rect x="34.400" y="560" width="6.200" height="5.600" fill="#eee" stroke="#111" stroke-width="0.900"/><rect x="46.200" y="547.600" width="6.300" height="5.800" fill="#7f9af4" stroke="#1a2a80" stroke-width="0.800"/><path d="M40.500 559.500l5 -5" stroke="#111" stroke-width="0.900"/><path d="M46.200 553.800l-3.300 0.800l2.500 2.500z" fill="#111"/><path d="M56 569.5v-5.500l-5.500 5.500z" fill="#5f5f5f"/><rect x="6.500" y="575.500" width="6" height="5.200" fill="#7f9af4" stroke="#111" stroke-width="0.900"/><rect x="18.600" y="578.600" width="6" height="5.500" fill="#7f9af4" stroke="#111" stroke-width="0.900"/><rect x="14.700" y="581.400" width="6" height="5.700" fill="#7f9af4" stroke="#111" stroke-width="0.900"/><rect x="6.500" y="587.600" width="6" height="6" fill="#eee" stroke="#111" stroke-width="0.900"/><rect x="18.600" y="589.500" width="6" height="5.500" fill="#7f9af4" stroke="#111" stroke-width="0.900"/><rect x="32.600" y="576.600" width="4.600" height="14" fill="#fff" stroke="#111" stroke-width="1"/><path d="M37.500 578.500q5 0 7 3.500" fill="none" stroke="#111" stroke-width="0.800"/><path d="M45.500 583l-3.500 -0.500l2.500 -2.500z" fill="#111"/><path d="M40.300 590.600l9.800 -7.600l2.500 3.300l-9.800 7.600z" fill="#7f9af4" stroke="#1a2a80" stroke-width="0.800"/><path d="M5.200 608l9.300 -5.500l10.300 4v11.500l-9.800 5.500l-9.800 -4.500z" fill="#5f7cf0" stroke="#111" stroke-width="0.800"/><path d="M5.200 608l9.300 -5.500l10.300 4l-9.800 5z" fill="#a9bcff"/><path d="M15 611.500l9.800 -5v11.500l-9.800 5.500z" fill="#2a46b8"/><path d="M11.500 617l5.500 -2.500l3.500 1.500v5l-5.500 2.500l-3.500 -1.500z" fill="#fff" stroke="#111" stroke-width="0.700"/><path d="M17 614.500v5l3.500 1.500" fill="none" stroke="#111" stroke-width="0.600"/><path d="M28.2 625.5v-5.500l-5.500 5.500z" fill="#5f5f5f"/><path d="M32.300 621.500l5.500 -5.300h15.200l-5.500 5.300z" fill="#7f9af4" stroke="#1a2a80" stroke-width="0.700"/><path d="M36.900 618.500v-7M43.100 618.500v-7M49.100 618.500v-7" stroke="#fff" stroke-width="1.600"/><path d="M36.900 606.500l2.300 5h-4.600zM43.100 606.500l2.300 5h-4.600zM49.100 606.500l2.300 5h-4.600z" fill="#fff"/><path d="M56 625.5v-5.500l-5.500 5.500z" fill="#5f5f5f"/><rect x="5.4" y="631.6" width="4.400" height="4.400" fill="#7f9af4" stroke="#111" stroke-width="0.900"/><rect x="5.4" y="638.1" width="4.400" height="4.400" fill="#7f9af4" stroke="#111" stroke-width="0.900"/><rect x="5.4" y="645.1" width="4.400" height="4.400" fill="#fff" stroke="#111" stroke-width="0.900"/><rect x="12.3" y="631.6" width="4.400" height="4.400" fill="#7f9af4" stroke="#111" stroke-width="0.900"/><rect x="12.3" y="638.1" width="4.400" height="4.400" fill="#7f9af4" stroke="#111" stroke-width="0.900"/><rect x="12.3" y="645.1" width="4.400" height="4.400" fill="#7f9af4" stroke="#111" stroke-width="0.900"/><rect x="19.3" y="631.6" width="4.400" height="4.400" fill="#7f9af4" stroke="#111" stroke-width="0.900"/><rect x="19.3" y="638.1" width="4.400" height="4.400" fill="#7f9af4" stroke="#111" stroke-width="0.900"/><rect x="19.3" y="645.1" width="4.400" height="4.400" fill="#7f9af4" stroke="#111" stroke-width="0.900"/><path d="M28.2 653.5v-5.500l-5.500 5.500z" fill="#5f5f5f"/><rect x="38.500" y="631.500" width="9.400" height="4.800" fill="#fff" stroke="#111" stroke-width="1"/><rect x="40.500" y="638.500" width="5.400" height="4" fill="#fff" stroke="#111" stroke-width="1"/><rect x="39" y="644.800" width="8.400" height="6" fill="#fff" stroke="#111" stroke-width="1"/><path d="M43.200 630v21.500" stroke="#d81818" stroke-width="1.300"/><path d="M56 653.5v-5.500l-5.500 5.500z" fill="#5f5f5f"/><path d="M5.500 663l4 -2l3.500 1.500l-1.500 14l-4 1.500l-2.500 -1.500z" fill="#eee" stroke="#111" stroke-width="0.800"/><path d="M13.500 658.500l3.500 2.500l-2 6z" fill="#fff" stroke="#111" stroke-width="0.700"/><path d="M15.500 663.500l3.500 -2l4.500 2l-4 14.500l-4.500 1.500l-3.500 -2z" fill="url(#gbl2)" stroke="#111" stroke-width="0.800"/><path d="M28.2 681.5v-5.500l-5.500 5.500z" fill="#5f5f5f"/><path d="M34.100 670.500l2 -1.500l2.200 4.500q5 -8 12.800 -13.500l0.800 0.800q-8.500 8 -13.500 17.500h-1.300z" fill="#111"/><path d="M56 681.5v-5.500l-5.500 5.500z" fill="#5f5f5f"/><path d="M5.500 692.500l6 -3l6.500 2.500v8.500l-6.500 2.500l-6 -2.500z" fill="#bdbdbd" stroke="#222" stroke-width="0.700"/><path d="M11.500 695v8M5.500 692.500l6 2.500l6.500 -3" fill="none" stroke="#222" stroke-width="0.600"/><path d="M19.500 690.500l5 11q-1 3 -5 3t-5 -3z" fill="url(#gbulb)" stroke="#222" stroke-width="0.700"/><path d="M28.2 709.5v-5.500l-5.500 5.500z" fill="#5f5f5f"/><path d="M43 694l8.600 8.500l-7.600 4l-9.600 -4z" fill="#f0b040" stroke="#6a4000" stroke-width="0.700"/><path d="M43 694l1 12.500l7.600 -4z" fill="#d08818"/><path d="M40.600 690l4 -4h5l3 -1v5l-3 -0.400l-3 2.400z" fill="#fff" stroke="#222" stroke-width="0.700"/><path d="M41.500 690.500l4 -3.500M43 691.200l4 -3.500" stroke="#444" stroke-width="0.600"/><rect x="52.600" y="684.800" width="2" height="5.400" fill="#111"/><path d="M56 709.5v-5.500l-5.500 5.500z" fill="#5f5f5f"/></svg>
</body></html>
